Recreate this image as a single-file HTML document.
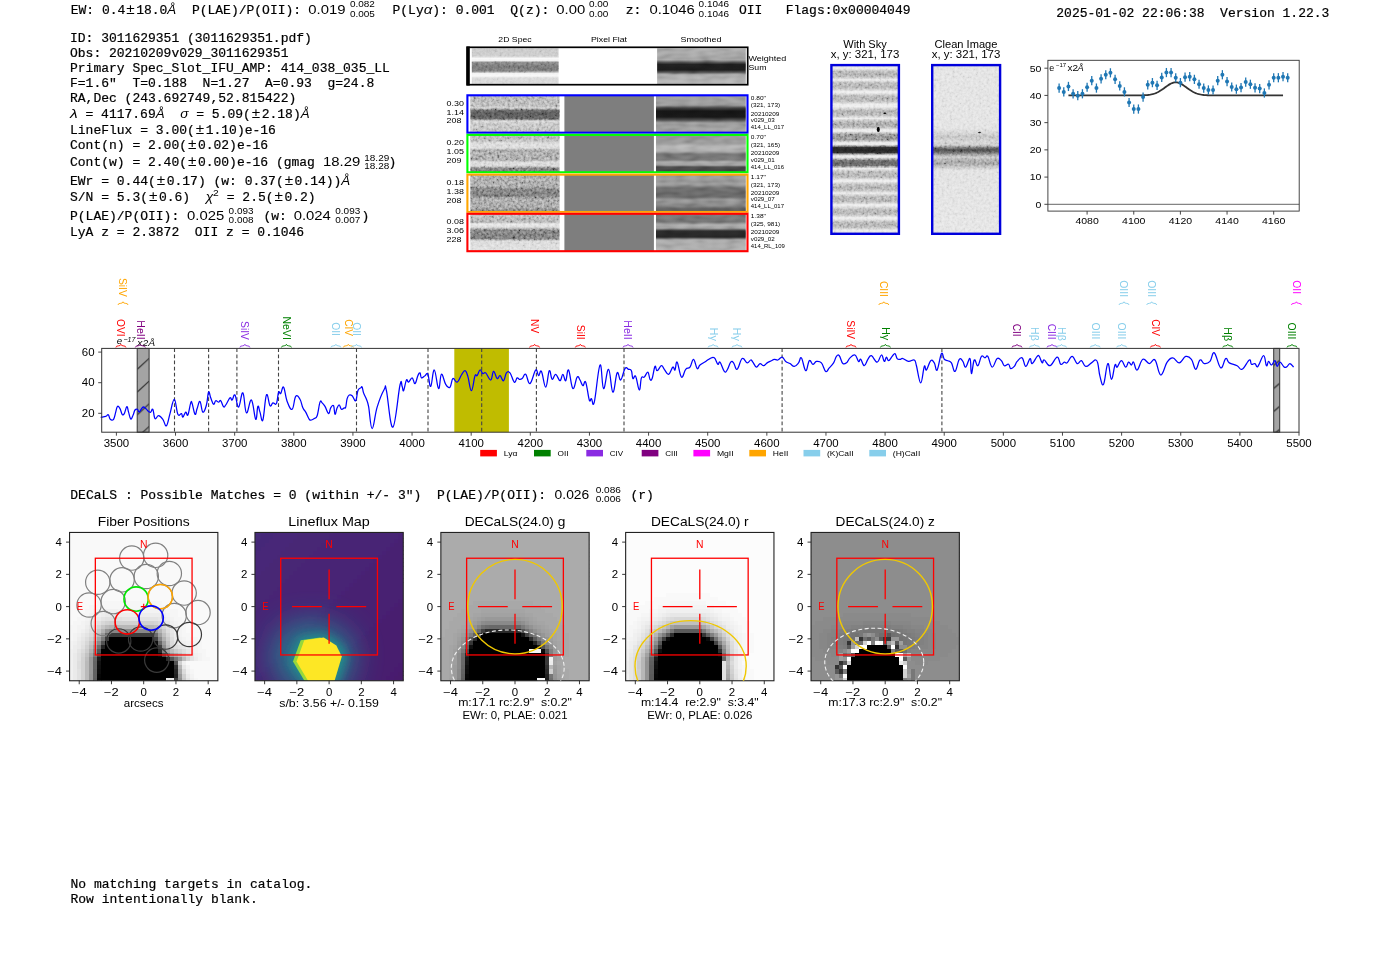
<!DOCTYPE html><html><head><meta charset="utf-8"><title>ELiXer report</title><style>html,body{margin:0;padding:0;background:#fff;overflow:hidden;width:1400px;height:953px}svg{display:block}</style></head><body><svg width="1400" height="953" viewBox="0 0 1400 953"><defs><filter id="nz1" x="0" y="0" width="100%" height="100%"><feTurbulence type="fractalNoise" baseFrequency="0.38" numOctaves="2" seed="4"/><feColorMatrix type="matrix" values="0 0 0 1.6 -0.3  0 0 0 1.6 -0.3  0 0 0 1.6 -0.3  0 0 0 0 1"/></filter>
<filter id="nz2" x="0" y="0" width="100%" height="100%"><feTurbulence type="fractalNoise" baseFrequency="0.08 0.25" numOctaves="1" seed="9"/><feColorMatrix type="matrix" values="0 0 0 1.4 -0.2  0 0 0 1.4 -0.2  0 0 0 1.4 -0.2  0 0 0 0 1"/></filter><linearGradient id="g1" x1="0" y1="0" x2="0" y2="1"><stop offset="0.000" stop-color="rgb(195,195,195)"/><stop offset="0.214" stop-color="rgb(200,200,200)"/><stop offset="0.284" stop-color="rgb(248,248,248)"/><stop offset="0.340" stop-color="rgb(240,240,240)"/><stop offset="0.396" stop-color="rgb(125,125,125)"/><stop offset="0.521" stop-color="rgb(108,108,108)"/><stop offset="0.632" stop-color="rgb(118,118,118)"/><stop offset="0.702" stop-color="rgb(240,240,240)"/><stop offset="0.772" stop-color="rgb(248,248,248)"/><stop offset="0.827" stop-color="rgb(215,215,215)"/><stop offset="0.994" stop-color="rgb(212,212,212)"/></linearGradient><linearGradient id="g2" x1="0" y1="0" x2="0" y2="1"><stop offset="0.000" stop-color="rgb(160,160,160)"/><stop offset="0.312" stop-color="rgb(150,150,150)"/><stop offset="0.396" stop-color="rgb(70,70,70)"/><stop offset="0.451" stop-color="rgb(28,28,28)"/><stop offset="0.604" stop-color="rgb(25,25,25)"/><stop offset="0.674" stop-color="rgb(80,80,80)"/><stop offset="0.738" stop-color="rgb(160,160,160)"/><stop offset="0.994" stop-color="rgb(168,168,168)"/></linearGradient><linearGradient id="g3" x1="0" y1="0" x2="0" y2="1"><stop offset="0.000" stop-color="rgb(165,165,165)"/><stop offset="0.284" stop-color="rgb(170,170,170)"/><stop offset="0.338" stop-color="rgb(200,200,200)"/><stop offset="0.392" stop-color="rgb(90,90,90)"/><stop offset="0.473" stop-color="rgb(75,75,75)"/><stop offset="0.635" stop-color="rgb(85,85,85)"/><stop offset="0.689" stop-color="rgb(205,205,205)"/><stop offset="0.770" stop-color="rgb(185,185,185)"/><stop offset="0.986" stop-color="rgb(175,175,175)"/></linearGradient><linearGradient id="g4" x1="0" y1="0" x2="0" y2="1"><stop offset="0.000" stop-color="rgb(150,150,150)"/><stop offset="0.257" stop-color="rgb(145,145,145)"/><stop offset="0.338" stop-color="rgb(60,60,60)"/><stop offset="0.419" stop-color="rgb(20,20,20)"/><stop offset="0.581" stop-color="rgb(22,22,22)"/><stop offset="0.662" stop-color="rgb(70,70,70)"/><stop offset="0.743" stop-color="rgb(145,145,145)"/><stop offset="0.986" stop-color="rgb(150,150,150)"/></linearGradient><linearGradient id="g5" x1="0" y1="0" x2="0" y2="1"><stop offset="0.000" stop-color="rgb(165,165,165)"/><stop offset="0.159" stop-color="rgb(175,175,175)"/><stop offset="0.214" stop-color="rgb(210,210,210)"/><stop offset="0.349" stop-color="rgb(210,210,210)"/><stop offset="0.403" stop-color="rgb(150,150,150)"/><stop offset="0.673" stop-color="rgb(150,150,150)"/><stop offset="0.727" stop-color="rgb(210,210,210)"/><stop offset="0.835" stop-color="rgb(205,205,205)"/><stop offset="0.889" stop-color="rgb(110,110,110)"/><stop offset="1.000" stop-color="rgb(100,100,100)"/></linearGradient><linearGradient id="g6" x1="0" y1="0" x2="0" y2="1"><stop offset="0.000" stop-color="rgb(140,140,140)"/><stop offset="0.214" stop-color="rgb(140,140,140)"/><stop offset="0.295" stop-color="rgb(175,175,175)"/><stop offset="0.430" stop-color="rgb(165,165,165)"/><stop offset="0.511" stop-color="rgb(105,105,105)"/><stop offset="0.673" stop-color="rgb(110,110,110)"/><stop offset="0.727" stop-color="rgb(160,160,160)"/><stop offset="0.808" stop-color="rgb(150,150,150)"/><stop offset="0.862" stop-color="rgb(70,70,70)"/><stop offset="1.000" stop-color="rgb(60,60,60)"/></linearGradient><linearGradient id="g7" x1="0" y1="0" x2="0" y2="1"><stop offset="0.000" stop-color="rgb(150,150,150)"/><stop offset="0.303" stop-color="rgb(150,150,150)"/><stop offset="0.384" stop-color="rgb(110,110,110)"/><stop offset="0.573" stop-color="rgb(105,105,105)"/><stop offset="0.654" stop-color="rgb(150,150,150)"/><stop offset="0.870" stop-color="rgb(145,145,145)"/><stop offset="0.951" stop-color="rgb(115,115,115)"/><stop offset="1.000" stop-color="rgb(105,105,105)"/></linearGradient><linearGradient id="g8" x1="0" y1="0" x2="0" y2="1"><stop offset="0.000" stop-color="rgb(140,140,140)"/><stop offset="0.249" stop-color="rgb(145,145,145)"/><stop offset="0.357" stop-color="rgb(100,100,100)"/><stop offset="0.600" stop-color="rgb(95,95,95)"/><stop offset="0.681" stop-color="rgb(140,140,140)"/><stop offset="0.843" stop-color="rgb(120,120,120)"/><stop offset="0.924" stop-color="rgb(85,85,85)"/><stop offset="1.000" stop-color="rgb(85,85,85)"/></linearGradient><linearGradient id="g9" x1="0" y1="0" x2="0" y2="1"><stop offset="0.000" stop-color="rgb(175,175,175)"/><stop offset="0.216" stop-color="rgb(160,160,160)"/><stop offset="0.270" stop-color="rgb(225,225,225)"/><stop offset="0.351" stop-color="rgb(215,215,215)"/><stop offset="0.432" stop-color="rgb(110,110,110)"/><stop offset="0.676" stop-color="rgb(105,105,105)"/><stop offset="0.730" stop-color="rgb(210,210,210)"/><stop offset="1.000" stop-color="rgb(215,215,215)"/></linearGradient><linearGradient id="g10" x1="0" y1="0" x2="0" y2="1"><stop offset="0.000" stop-color="rgb(110,110,110)"/><stop offset="0.216" stop-color="rgb(105,105,105)"/><stop offset="0.297" stop-color="rgb(165,165,165)"/><stop offset="0.378" stop-color="rgb(150,150,150)"/><stop offset="0.459" stop-color="rgb(40,40,40)"/><stop offset="0.622" stop-color="rgb(35,35,35)"/><stop offset="0.703" stop-color="rgb(160,160,160)"/><stop offset="1.000" stop-color="rgb(165,165,165)"/></linearGradient><linearGradient id="g11" x1="0" y1="0" x2="0" y2="1"><stop offset="0.000" stop-color="rgb(215,215,215)"/><stop offset="0.020" stop-color="rgb(232,232,232)"/><stop offset="0.039" stop-color="rgb(172,172,172)"/><stop offset="0.054" stop-color="rgb(160,160,160)"/><stop offset="0.070" stop-color="rgb(172,172,172)"/><stop offset="0.088" stop-color="rgb(232,232,232)"/><stop offset="0.089" stop-color="rgb(232,232,232)"/><stop offset="0.108" stop-color="rgb(172,172,172)"/><stop offset="0.123" stop-color="rgb(160,160,160)"/><stop offset="0.138" stop-color="rgb(172,172,172)"/><stop offset="0.156" stop-color="rgb(232,232,232)"/><stop offset="0.165" stop-color="rgb(232,232,232)"/><stop offset="0.184" stop-color="rgb(172,172,172)"/><stop offset="0.199" stop-color="rgb(160,160,160)"/><stop offset="0.215" stop-color="rgb(172,172,172)"/><stop offset="0.232" stop-color="rgb(232,232,232)"/><stop offset="0.248" stop-color="rgb(232,232,232)"/><stop offset="0.267" stop-color="rgb(172,172,172)"/><stop offset="0.283" stop-color="rgb(160,160,160)"/><stop offset="0.298" stop-color="rgb(172,172,172)"/><stop offset="0.316" stop-color="rgb(232,232,232)"/><stop offset="0.317" stop-color="rgb(232,232,232)"/><stop offset="0.336" stop-color="rgb(162,162,162)"/><stop offset="0.351" stop-color="rgb(150,150,150)"/><stop offset="0.367" stop-color="rgb(162,162,162)"/><stop offset="0.384" stop-color="rgb(232,232,232)"/><stop offset="0.393" stop-color="rgb(232,232,232)"/><stop offset="0.412" stop-color="rgb(132,132,132)"/><stop offset="0.427" stop-color="rgb(120,120,120)"/><stop offset="0.442" stop-color="rgb(132,132,132)"/><stop offset="0.460" stop-color="rgb(232,232,232)"/><stop offset="0.470" stop-color="rgb(232,232,232)"/><stop offset="0.488" stop-color="rgb(42,42,42)"/><stop offset="0.504" stop-color="rgb(30,30,30)"/><stop offset="0.519" stop-color="rgb(42,42,42)"/><stop offset="0.537" stop-color="rgb(232,232,232)"/><stop offset="0.546" stop-color="rgb(232,232,232)"/><stop offset="0.565" stop-color="rgb(97,97,97)"/><stop offset="0.580" stop-color="rgb(85,85,85)"/><stop offset="0.596" stop-color="rgb(97,97,97)"/><stop offset="0.613" stop-color="rgb(232,232,232)"/><stop offset="0.614" stop-color="rgb(232,232,232)"/><stop offset="0.633" stop-color="rgb(172,172,172)"/><stop offset="0.649" stop-color="rgb(160,160,160)"/><stop offset="0.664" stop-color="rgb(172,172,172)"/><stop offset="0.682" stop-color="rgb(232,232,232)"/><stop offset="0.690" stop-color="rgb(232,232,232)"/><stop offset="0.709" stop-color="rgb(172,172,172)"/><stop offset="0.724" stop-color="rgb(160,160,160)"/><stop offset="0.740" stop-color="rgb(172,172,172)"/><stop offset="0.758" stop-color="rgb(232,232,232)"/><stop offset="0.759" stop-color="rgb(232,232,232)"/><stop offset="0.778" stop-color="rgb(172,172,172)"/><stop offset="0.793" stop-color="rgb(160,160,160)"/><stop offset="0.808" stop-color="rgb(172,172,172)"/><stop offset="0.826" stop-color="rgb(232,232,232)"/><stop offset="0.834" stop-color="rgb(232,232,232)"/><stop offset="0.853" stop-color="rgb(172,172,172)"/><stop offset="0.869" stop-color="rgb(160,160,160)"/><stop offset="0.884" stop-color="rgb(172,172,172)"/><stop offset="0.902" stop-color="rgb(232,232,232)"/><stop offset="0.911" stop-color="rgb(232,232,232)"/><stop offset="0.930" stop-color="rgb(172,172,172)"/><stop offset="0.945" stop-color="rgb(160,160,160)"/><stop offset="0.960" stop-color="rgb(172,172,172)"/><stop offset="0.978" stop-color="rgb(232,232,232)"/><stop offset="1.000" stop-color="rgb(215,215,215)"/></linearGradient><linearGradient id="g12" x1="0" y1="0" x2="0" y2="1"><stop offset="0.000" stop-color="rgb(222,222,222)"/><stop offset="0.373" stop-color="rgb(222,222,222)"/><stop offset="0.403" stop-color="rgb(205,205,205)"/><stop offset="0.426" stop-color="rgb(180,180,180)"/><stop offset="0.450" stop-color="rgb(205,205,205)"/><stop offset="0.474" stop-color="rgb(195,195,195)"/><stop offset="0.488" stop-color="rgb(110,110,110)"/><stop offset="0.503" stop-color="rgb(65,65,65)"/><stop offset="0.521" stop-color="rgb(100,100,100)"/><stop offset="0.545" stop-color="rgb(195,195,195)"/><stop offset="0.562" stop-color="rgb(160,160,160)"/><stop offset="0.580" stop-color="rgb(145,145,145)"/><stop offset="0.598" stop-color="rgb(170,170,170)"/><stop offset="0.622" stop-color="rgb(220,220,220)"/><stop offset="1.000" stop-color="rgb(225,225,225)"/></linearGradient><pattern id="hatch" patternUnits="userSpaceOnUse" width="12" height="22.7" patternTransform="translate(137.2,348.4)"><rect width="12" height="22.7" fill="#a4a4a4"/><line x1="0" y1="21" x2="12" y2="10" stroke="#222" stroke-width="1.0"/></pattern><pattern id="hatch2" patternUnits="userSpaceOnUse" width="6" height="23" patternTransform="translate(1273.7,348.4)"><rect width="6" height="23" fill="#a4a4a4"/><line x1="0" y1="17" x2="6" y2="12" stroke="#222" stroke-width="1.1"/></pattern><clipPath id="topclip"><rect x="0" y="0" width="1400" height="347.9"/></clipPath><clipPath id="pc0"><rect x="69.55" y="532.45" width="148.30" height="148.30"/></clipPath><clipPath id="pc1"><rect x="254.95" y="532.45" width="148.30" height="148.30"/></clipPath><clipPath id="pc2"><rect x="440.85" y="532.45" width="148.30" height="148.30"/></clipPath><clipPath id="pc3"><rect x="625.65" y="532.45" width="148.30" height="148.30"/></clipPath><clipPath id="pc4"><rect x="811.05" y="532.45" width="148.30" height="148.30"/></clipPath><filter id="fglow" x="-100%" y="-100%" width="300%" height="300%"><feGaussianBlur stdDeviation="15"/></filter><filter id="fglow2" x="-100%" y="-100%" width="300%" height="300%"><feGaussianBlur stdDeviation="5"/></filter></defs><rect width="1400" height="953" fill="#fff"/><text x="70.70" y="14.00" font-size="13.0" font-family="'Liberation Mono', monospace" fill="#000" stroke="#000" stroke-width="0.2" xml:space="preserve">EW: 0.4</text>
<text x="126.27" y="14.00" font-size="15.34" font-family="'Liberation Sans', sans-serif" fill="#000" xml:space="preserve">±</text>
<text x="136.19" y="14.00" font-size="13.0" font-family="'Liberation Mono', monospace" fill="#000" stroke="#000" stroke-width="0.2" xml:space="preserve">18.0</text>
<text x="167.39" y="14.00" font-size="13.0" font-family="'Liberation Sans', sans-serif" fill="#000" textLength="8.89" lengthAdjust="spacingAndGlyphs" font-style="italic" xml:space="preserve">Å</text>
<text x="176.29" y="14.00" font-size="13.0" font-family="'Liberation Mono', monospace" fill="#000" stroke="#000" stroke-width="0.2" xml:space="preserve">  P(LAE)/P(OII): </text>
<text x="308.30" y="14.00" font-size="13" font-family="'Liberation Sans', sans-serif" fill="#000" textLength="37.22" lengthAdjust="spacingAndGlyphs" xml:space="preserve">0.019</text>
<text x="350.00" y="7.20" font-size="8.7" font-family="'Liberation Sans', sans-serif" fill="#000" textLength="24.91" lengthAdjust="spacingAndGlyphs" xml:space="preserve">0.082</text>
<text x="350.00" y="17.10" font-size="8.7" font-family="'Liberation Sans', sans-serif" fill="#000" textLength="24.91" lengthAdjust="spacingAndGlyphs" xml:space="preserve">0.005</text>
<text x="392.50" y="14.00" font-size="13.0" font-family="'Liberation Mono', monospace" fill="#000" stroke="#000" stroke-width="0.2" xml:space="preserve">P(Ly</text>
<text x="423.70" y="14.00" font-size="13.0" font-family="'Liberation Sans', sans-serif" fill="#000" textLength="8.57" lengthAdjust="spacingAndGlyphs" font-style="italic" xml:space="preserve">α</text>
<text x="432.27" y="14.00" font-size="13.0" font-family="'Liberation Mono', monospace" fill="#000" stroke="#000" stroke-width="0.2" xml:space="preserve">): 0.001  Q(z): </text>
<text x="556.30" y="14.00" font-size="13" font-family="'Liberation Sans', sans-serif" fill="#000" textLength="28.95" lengthAdjust="spacingAndGlyphs" xml:space="preserve">0.00</text>
<text x="589.00" y="7.20" font-size="8.7" font-family="'Liberation Sans', sans-serif" fill="#000" textLength="19.37" lengthAdjust="spacingAndGlyphs" xml:space="preserve">0.00</text>
<text x="589.00" y="17.10" font-size="8.7" font-family="'Liberation Sans', sans-serif" fill="#000" textLength="19.37" lengthAdjust="spacingAndGlyphs" xml:space="preserve">0.00</text>
<text x="625.70" y="14.00" font-size="13.0" font-family="'Liberation Mono', monospace" fill="#000" stroke="#000" stroke-width="0.2" xml:space="preserve">z: </text>
<text x="649.40" y="14.00" font-size="13" font-family="'Liberation Sans', sans-serif" fill="#000" textLength="45.49" lengthAdjust="spacingAndGlyphs" xml:space="preserve">0.1046</text>
<text x="698.60" y="7.20" font-size="8.7" font-family="'Liberation Sans', sans-serif" fill="#000" textLength="30.44" lengthAdjust="spacingAndGlyphs" xml:space="preserve">0.1046</text>
<text x="698.60" y="17.10" font-size="8.7" font-family="'Liberation Sans', sans-serif" fill="#000" textLength="30.44" lengthAdjust="spacingAndGlyphs" xml:space="preserve">0.1046</text>
<text x="739.00" y="14.00" font-size="13.0" font-family="'Liberation Mono', monospace" fill="#000" stroke="#000" stroke-width="0.2" xml:space="preserve">OII</text>
<text x="785.70" y="14.00" font-size="13.0" font-family="'Liberation Mono', monospace" fill="#000" stroke="#000" stroke-width="0.2" xml:space="preserve">Flags:0x00004049</text>
<text x="1056.30" y="16.60" font-size="13.0" font-family="'Liberation Mono', monospace" fill="#000" stroke="#000" stroke-width="0.2" xml:space="preserve">2025-01-02 22:06:38  Version 1.22.3</text>
<text x="70.00" y="42.40" font-size="13.0" font-family="'Liberation Mono', monospace" fill="#000" stroke="#000" stroke-width="0.2" xml:space="preserve">ID: 3011629351 (3011629351.pdf)</text>
<text x="70.00" y="56.70" font-size="13.0" font-family="'Liberation Mono', monospace" fill="#000" stroke="#000" stroke-width="0.2" xml:space="preserve">Obs: 20210209v029_3011629351</text>
<text x="70.00" y="72.10" font-size="13.0" font-family="'Liberation Mono', monospace" fill="#000" stroke="#000" stroke-width="0.2" xml:space="preserve">Primary Spec_Slot_IFU_AMP: 414_038_035_LL</text>
<text x="70.00" y="86.70" font-size="13.0" font-family="'Liberation Mono', monospace" fill="#000" stroke="#000" stroke-width="0.2" xml:space="preserve">F=1.6&quot;  T=0.188  N=1.27  A=0.93  g=24.8</text>
<text x="70.00" y="101.70" font-size="13.0" font-family="'Liberation Mono', monospace" fill="#000" stroke="#000" stroke-width="0.2" xml:space="preserve">RA,Dec (243.692749,52.815422)</text>
<text x="70.00" y="118.20" font-size="13.0" font-family="'Liberation Sans', sans-serif" fill="#000" textLength="7.69" lengthAdjust="spacingAndGlyphs" font-style="italic" xml:space="preserve">λ</text>
<text x="77.69" y="118.20" font-size="13.0" font-family="'Liberation Mono', monospace" fill="#000" stroke="#000" stroke-width="0.2" xml:space="preserve"> = 4117.69</text>
<text x="155.69" y="118.20" font-size="13.0" font-family="'Liberation Sans', sans-serif" fill="#000" textLength="8.89" lengthAdjust="spacingAndGlyphs" font-style="italic" xml:space="preserve">Å</text>
<text x="164.59" y="118.20" font-size="13.0" font-family="'Liberation Mono', monospace" fill="#000" stroke="#000" stroke-width="0.2" xml:space="preserve">  </text>
<text x="180.19" y="118.20" font-size="13.0" font-family="'Liberation Sans', sans-serif" fill="#000" textLength="8.24" lengthAdjust="spacingAndGlyphs" font-style="italic" xml:space="preserve">σ</text>
<text x="188.43" y="118.20" font-size="13.0" font-family="'Liberation Mono', monospace" fill="#000" stroke="#000" stroke-width="0.2" xml:space="preserve"> = 5.09(</text>
<text x="251.79" y="118.20" font-size="15.34" font-family="'Liberation Sans', sans-serif" fill="#000" xml:space="preserve">±</text>
<text x="261.72" y="118.20" font-size="13.0" font-family="'Liberation Mono', monospace" fill="#000" stroke="#000" stroke-width="0.2" xml:space="preserve">2.18)</text>
<text x="300.72" y="118.20" font-size="13.0" font-family="'Liberation Sans', sans-serif" fill="#000" textLength="8.89" lengthAdjust="spacingAndGlyphs" font-style="italic" xml:space="preserve">Å</text>
<text x="70.00" y="133.60" font-size="13.0" font-family="'Liberation Mono', monospace" fill="#000" stroke="#000" stroke-width="0.2" xml:space="preserve">LineFlux = 3.00(</text>
<text x="195.77" y="133.60" font-size="15.34" font-family="'Liberation Sans', sans-serif" fill="#000" xml:space="preserve">±</text>
<text x="205.69" y="133.60" font-size="13.0" font-family="'Liberation Mono', monospace" fill="#000" stroke="#000" stroke-width="0.2" xml:space="preserve">1.10)e-16</text>
<text x="70.00" y="148.60" font-size="13.0" font-family="'Liberation Mono', monospace" fill="#000" stroke="#000" stroke-width="0.2" xml:space="preserve">Cont(n) = 2.00(</text>
<text x="187.97" y="148.60" font-size="15.34" font-family="'Liberation Sans', sans-serif" fill="#000" xml:space="preserve">±</text>
<text x="197.89" y="148.60" font-size="13.0" font-family="'Liberation Mono', monospace" fill="#000" stroke="#000" stroke-width="0.2" xml:space="preserve">0.02)e-16</text>
<text x="70.00" y="166.40" font-size="13.0" font-family="'Liberation Mono', monospace" fill="#000" stroke="#000" stroke-width="0.2" xml:space="preserve">Cont(w) = 2.40(</text>
<text x="187.97" y="166.40" font-size="15.34" font-family="'Liberation Sans', sans-serif" fill="#000" xml:space="preserve">±</text>
<text x="197.89" y="166.40" font-size="13.0" font-family="'Liberation Mono', monospace" fill="#000" stroke="#000" stroke-width="0.2" xml:space="preserve">0.00)e-16 (gmag </text>
<text x="323.00" y="166.40" font-size="13" font-family="'Liberation Sans', sans-serif" fill="#000" textLength="37.22" lengthAdjust="spacingAndGlyphs" xml:space="preserve">18.29</text>
<text x="364.30" y="160.90" font-size="8.7" font-family="'Liberation Sans', sans-serif" fill="#000" textLength="24.91" lengthAdjust="spacingAndGlyphs" xml:space="preserve">18.29</text>
<text x="364.30" y="169.30" font-size="8.7" font-family="'Liberation Sans', sans-serif" fill="#000" textLength="24.91" lengthAdjust="spacingAndGlyphs" xml:space="preserve">18.28</text>
<text x="388.60" y="166.40" font-size="13.0" font-family="'Liberation Mono', monospace" fill="#000" stroke="#000" stroke-width="0.2" xml:space="preserve">)</text>
<text x="70.00" y="184.60" font-size="13.0" font-family="'Liberation Mono', monospace" fill="#000" stroke="#000" stroke-width="0.2" xml:space="preserve">EWr = 0.44(</text>
<text x="156.77" y="184.60" font-size="15.34" font-family="'Liberation Sans', sans-serif" fill="#000" xml:space="preserve">±</text>
<text x="166.69" y="184.60" font-size="13.0" font-family="'Liberation Mono', monospace" fill="#000" stroke="#000" stroke-width="0.2" xml:space="preserve">0.17) (w: 0.37(</text>
<text x="284.66" y="184.60" font-size="15.34" font-family="'Liberation Sans', sans-serif" fill="#000" xml:space="preserve">±</text>
<text x="294.59" y="184.60" font-size="13.0" font-family="'Liberation Mono', monospace" fill="#000" stroke="#000" stroke-width="0.2" xml:space="preserve">0.14))</text>
<text x="341.39" y="184.60" font-size="13.0" font-family="'Liberation Sans', sans-serif" fill="#000" textLength="8.89" lengthAdjust="spacingAndGlyphs" font-style="italic" xml:space="preserve">Å</text>
<text x="70.00" y="201.40" font-size="13.0" font-family="'Liberation Mono', monospace" fill="#000" stroke="#000" stroke-width="0.2" xml:space="preserve">S/N = 5.3(</text>
<text x="148.97" y="201.40" font-size="15.34" font-family="'Liberation Sans', sans-serif" fill="#000" xml:space="preserve">±</text>
<text x="158.89" y="201.40" font-size="13.0" font-family="'Liberation Mono', monospace" fill="#000" stroke="#000" stroke-width="0.2" xml:space="preserve">0.6)  </text>
<text x="205.69" y="201.40" font-size="13.0" font-family="'Liberation Sans', sans-serif" fill="#000" textLength="7.51" lengthAdjust="spacingAndGlyphs" font-style="italic" xml:space="preserve">χ</text>
<text x="212.90" y="195.80" font-size="9.0" font-family="'Liberation Sans', sans-serif" fill="#000" textLength="5.73" lengthAdjust="spacingAndGlyphs" xml:space="preserve">2</text>
<text x="218.93" y="201.40" font-size="13.0" font-family="'Liberation Mono', monospace" fill="#000" stroke="#000" stroke-width="0.2" xml:space="preserve"> = 2.5(</text>
<text x="274.50" y="201.40" font-size="15.34" font-family="'Liberation Sans', sans-serif" fill="#000" xml:space="preserve">±</text>
<text x="284.42" y="201.40" font-size="13.0" font-family="'Liberation Mono', monospace" fill="#000" stroke="#000" stroke-width="0.2" xml:space="preserve">0.2)</text>
<text x="70.00" y="220.00" font-size="13.0" font-family="'Liberation Mono', monospace" fill="#000" stroke="#000" stroke-width="0.2" xml:space="preserve">P(LAE)/P(OII): </text>
<text x="187.10" y="220.00" font-size="13" font-family="'Liberation Sans', sans-serif" fill="#000" textLength="37.22" lengthAdjust="spacingAndGlyphs" xml:space="preserve">0.025</text>
<text x="228.60" y="214.30" font-size="8.7" font-family="'Liberation Sans', sans-serif" fill="#000" textLength="24.91" lengthAdjust="spacingAndGlyphs" xml:space="preserve">0.093</text>
<text x="228.60" y="222.90" font-size="8.7" font-family="'Liberation Sans', sans-serif" fill="#000" textLength="24.91" lengthAdjust="spacingAndGlyphs" xml:space="preserve">0.008</text>
<text x="255.70" y="220.00" font-size="13.0" font-family="'Liberation Mono', monospace" fill="#000" stroke="#000" stroke-width="0.2" xml:space="preserve"> (w: </text>
<text x="293.70" y="220.00" font-size="13" font-family="'Liberation Sans', sans-serif" fill="#000" textLength="37.22" lengthAdjust="spacingAndGlyphs" xml:space="preserve">0.024</text>
<text x="335.30" y="214.30" font-size="8.7" font-family="'Liberation Sans', sans-serif" fill="#000" textLength="24.91" lengthAdjust="spacingAndGlyphs" xml:space="preserve">0.093</text>
<text x="335.30" y="222.90" font-size="8.7" font-family="'Liberation Sans', sans-serif" fill="#000" textLength="24.91" lengthAdjust="spacingAndGlyphs" xml:space="preserve">0.007</text>
<text x="361.60" y="220.00" font-size="13.0" font-family="'Liberation Mono', monospace" fill="#000" stroke="#000" stroke-width="0.2" xml:space="preserve">)</text>
<text x="70.00" y="236.40" font-size="13.0" font-family="'Liberation Mono', monospace" fill="#000" stroke="#000" stroke-width="0.2" xml:space="preserve">LyA z = 2.3872  OII z = 0.1046</text>
<text x="515.00" y="42.20" font-size="8" font-family="'Liberation Sans', sans-serif" fill="#000" text-anchor="middle" textLength="33.27" lengthAdjust="spacingAndGlyphs" xml:space="preserve">2D Spec</text>
<text x="609.00" y="42.20" font-size="8" font-family="'Liberation Sans', sans-serif" fill="#000" text-anchor="middle" textLength="35.91" lengthAdjust="spacingAndGlyphs" xml:space="preserve">Pixel Flat</text>
<text x="701.00" y="42.20" font-size="8" font-family="'Liberation Sans', sans-serif" fill="#000" text-anchor="middle" textLength="40.87" lengthAdjust="spacingAndGlyphs" xml:space="preserve">Smoothed</text>
<rect x="466.4" y="46.5" width="282.1" height="39" fill="#fff"/>
<rect x="471.80" y="48.30" width="86.80" height="35.90" fill="url(#g1)"/>
<rect x="471.80" y="48.30" width="86.80" height="35.90" fill="#808080" filter="url(#nz1)" opacity="0.3" style="mix-blend-mode:overlay"/>
<rect x="657.10" y="48.30" width="88.70" height="35.90" fill="url(#g2)"/>
<rect x="657.10" y="48.30" width="88.70" height="35.90" fill="#808080" filter="url(#nz2)" opacity="0.3" style="mix-blend-mode:overlay"/>
<rect x="467.2" y="47.3" width="280.5" height="37.4" fill="none" stroke="#000" stroke-width="1.7"/>
<rect x="466.4" y="46.5" width="3.4" height="39" fill="#000"/>
<text x="748.50" y="60.80" font-size="8" font-family="'Liberation Sans', sans-serif" fill="#000" textLength="37.87" lengthAdjust="spacingAndGlyphs" xml:space="preserve">Weighted</text>
<text x="748.50" y="69.80" font-size="8" font-family="'Liberation Sans', sans-serif" fill="#000" textLength="17.94" lengthAdjust="spacingAndGlyphs" xml:space="preserve">Sum</text>
<rect x="466.4" y="94.30" width="282.1" height="39.40" fill="#fff"/>
<rect x="470.30" y="95.50" width="89.30" height="37.00" fill="url(#g3)"/>
<rect x="470.30" y="95.50" width="89.30" height="37.00" fill="#808080" filter="url(#nz1)" opacity="0.55" style="mix-blend-mode:overlay"/>
<rect x="564.4" y="95.50" width="89.5" height="37.00" fill="rgb(126,126,126)"/>
<rect x="656.00" y="95.50" width="89.80" height="37.00" fill="url(#g4)"/>
<rect x="656.00" y="95.50" width="89.80" height="37.00" fill="#808080" filter="url(#nz2)" opacity="0.25" style="mix-blend-mode:overlay"/>
<rect x="467.40" y="95.30" width="280.1" height="37.40" fill="none" stroke="rgb(0,0,255)" stroke-width="2.1"/>
<text x="446.60" y="105.80" font-size="7.8" font-family="'Liberation Sans', sans-serif" fill="#000" textLength="17.37" lengthAdjust="spacingAndGlyphs" xml:space="preserve">0.30</text>
<text x="446.60" y="114.50" font-size="7.8" font-family="'Liberation Sans', sans-serif" fill="#000" textLength="17.37" lengthAdjust="spacingAndGlyphs" xml:space="preserve">1.14</text>
<text x="446.60" y="123.20" font-size="7.8" font-family="'Liberation Sans', sans-serif" fill="#000" textLength="14.89" lengthAdjust="spacingAndGlyphs" xml:space="preserve">208</text>
<text x="750.80" y="99.60" font-size="5.6" font-family="'Liberation Sans', sans-serif" fill="#000" textLength="15.05" lengthAdjust="spacingAndGlyphs" xml:space="preserve">0.80&quot;</text>
<text x="750.80" y="107.20" font-size="5.6" font-family="'Liberation Sans', sans-serif" fill="#000" textLength="29.31" lengthAdjust="spacingAndGlyphs" xml:space="preserve">(321, 173)</text>
<text x="750.80" y="115.50" font-size="5.6" font-family="'Liberation Sans', sans-serif" fill="#000" textLength="28.50" lengthAdjust="spacingAndGlyphs" xml:space="preserve">20210209</text>
<text x="750.80" y="122.00" font-size="5.6" font-family="'Liberation Sans', sans-serif" fill="#000" textLength="23.93" lengthAdjust="spacingAndGlyphs" xml:space="preserve">v029_03</text>
<text x="750.80" y="129.10" font-size="5.6" font-family="'Liberation Sans', sans-serif" fill="#000" textLength="33.22" lengthAdjust="spacingAndGlyphs" xml:space="preserve">414_LL_017</text>
<rect x="466.4" y="133.90" width="282.1" height="39.40" fill="#fff"/>
<rect x="470.30" y="135.10" width="89.30" height="37.00" fill="url(#g5)"/>
<rect x="470.30" y="135.10" width="89.30" height="37.00" fill="#808080" filter="url(#nz1)" opacity="0.55" style="mix-blend-mode:overlay"/>
<rect x="564.4" y="135.10" width="89.5" height="37.00" fill="rgb(126,126,126)"/>
<rect x="656.00" y="135.10" width="89.80" height="37.00" fill="url(#g6)"/>
<rect x="656.00" y="135.10" width="89.80" height="37.00" fill="#808080" filter="url(#nz2)" opacity="0.25" style="mix-blend-mode:overlay"/>
<rect x="467.40" y="134.90" width="280.1" height="37.40" fill="none" stroke="rgb(0,255,0)" stroke-width="2.1"/>
<text x="446.60" y="145.40" font-size="7.8" font-family="'Liberation Sans', sans-serif" fill="#000" textLength="17.37" lengthAdjust="spacingAndGlyphs" xml:space="preserve">0.20</text>
<text x="446.60" y="154.10" font-size="7.8" font-family="'Liberation Sans', sans-serif" fill="#000" textLength="17.37" lengthAdjust="spacingAndGlyphs" xml:space="preserve">1.05</text>
<text x="446.60" y="162.80" font-size="7.8" font-family="'Liberation Sans', sans-serif" fill="#000" textLength="14.89" lengthAdjust="spacingAndGlyphs" xml:space="preserve">209</text>
<text x="750.80" y="139.20" font-size="5.6" font-family="'Liberation Sans', sans-serif" fill="#000" textLength="15.05" lengthAdjust="spacingAndGlyphs" xml:space="preserve">0.70&quot;</text>
<text x="750.80" y="146.80" font-size="5.6" font-family="'Liberation Sans', sans-serif" fill="#000" textLength="29.31" lengthAdjust="spacingAndGlyphs" xml:space="preserve">(321, 165)</text>
<text x="750.80" y="155.10" font-size="5.6" font-family="'Liberation Sans', sans-serif" fill="#000" textLength="28.50" lengthAdjust="spacingAndGlyphs" xml:space="preserve">20210209</text>
<text x="750.80" y="161.60" font-size="5.6" font-family="'Liberation Sans', sans-serif" fill="#000" textLength="23.93" lengthAdjust="spacingAndGlyphs" xml:space="preserve">v029_01</text>
<text x="750.80" y="168.70" font-size="5.6" font-family="'Liberation Sans', sans-serif" fill="#000" textLength="33.22" lengthAdjust="spacingAndGlyphs" xml:space="preserve">414_LL_016</text>
<rect x="466.4" y="173.60" width="282.1" height="39.40" fill="#fff"/>
<rect x="470.30" y="174.80" width="89.30" height="37.00" fill="url(#g7)"/>
<rect x="470.30" y="174.80" width="89.30" height="37.00" fill="#808080" filter="url(#nz1)" opacity="0.55" style="mix-blend-mode:overlay"/>
<rect x="564.4" y="174.80" width="89.5" height="37.00" fill="rgb(126,126,126)"/>
<rect x="656.00" y="174.80" width="89.80" height="37.00" fill="url(#g8)"/>
<rect x="656.00" y="174.80" width="89.80" height="37.00" fill="#808080" filter="url(#nz2)" opacity="0.25" style="mix-blend-mode:overlay"/>
<rect x="467.40" y="174.60" width="280.1" height="37.40" fill="none" stroke="rgb(255,165,0)" stroke-width="2.1"/>
<text x="446.60" y="185.10" font-size="7.8" font-family="'Liberation Sans', sans-serif" fill="#000" textLength="17.37" lengthAdjust="spacingAndGlyphs" xml:space="preserve">0.18</text>
<text x="446.60" y="193.80" font-size="7.8" font-family="'Liberation Sans', sans-serif" fill="#000" textLength="17.37" lengthAdjust="spacingAndGlyphs" xml:space="preserve">1.38</text>
<text x="446.60" y="202.50" font-size="7.8" font-family="'Liberation Sans', sans-serif" fill="#000" textLength="14.89" lengthAdjust="spacingAndGlyphs" xml:space="preserve">208</text>
<text x="750.80" y="178.90" font-size="5.6" font-family="'Liberation Sans', sans-serif" fill="#000" textLength="15.05" lengthAdjust="spacingAndGlyphs" xml:space="preserve">1.17&quot;</text>
<text x="750.80" y="186.50" font-size="5.6" font-family="'Liberation Sans', sans-serif" fill="#000" textLength="29.31" lengthAdjust="spacingAndGlyphs" xml:space="preserve">(321, 173)</text>
<text x="750.80" y="194.80" font-size="5.6" font-family="'Liberation Sans', sans-serif" fill="#000" textLength="28.50" lengthAdjust="spacingAndGlyphs" xml:space="preserve">20210209</text>
<text x="750.80" y="201.30" font-size="5.6" font-family="'Liberation Sans', sans-serif" fill="#000" textLength="23.93" lengthAdjust="spacingAndGlyphs" xml:space="preserve">v029_07</text>
<text x="750.80" y="208.40" font-size="5.6" font-family="'Liberation Sans', sans-serif" fill="#000" textLength="33.22" lengthAdjust="spacingAndGlyphs" xml:space="preserve">414_LL_017</text>
<rect x="466.4" y="212.80" width="282.1" height="39.40" fill="#fff"/>
<rect x="470.30" y="214.00" width="89.30" height="37.00" fill="url(#g9)"/>
<rect x="470.30" y="214.00" width="89.30" height="37.00" fill="#808080" filter="url(#nz1)" opacity="0.55" style="mix-blend-mode:overlay"/>
<rect x="564.4" y="214.00" width="89.5" height="37.00" fill="rgb(126,126,126)"/>
<rect x="656.00" y="214.00" width="89.80" height="37.00" fill="url(#g10)"/>
<rect x="656.00" y="214.00" width="89.80" height="37.00" fill="#808080" filter="url(#nz2)" opacity="0.25" style="mix-blend-mode:overlay"/>
<rect x="467.40" y="213.80" width="280.1" height="37.40" fill="none" stroke="rgb(255,0,0)" stroke-width="2.1"/>
<text x="446.60" y="224.30" font-size="7.8" font-family="'Liberation Sans', sans-serif" fill="#000" textLength="17.37" lengthAdjust="spacingAndGlyphs" xml:space="preserve">0.08</text>
<text x="446.60" y="233.00" font-size="7.8" font-family="'Liberation Sans', sans-serif" fill="#000" textLength="17.37" lengthAdjust="spacingAndGlyphs" xml:space="preserve">3.06</text>
<text x="446.60" y="241.70" font-size="7.8" font-family="'Liberation Sans', sans-serif" fill="#000" textLength="14.89" lengthAdjust="spacingAndGlyphs" xml:space="preserve">228</text>
<text x="750.80" y="218.10" font-size="5.6" font-family="'Liberation Sans', sans-serif" fill="#000" textLength="15.05" lengthAdjust="spacingAndGlyphs" xml:space="preserve">1.38&quot;</text>
<text x="750.80" y="225.70" font-size="5.6" font-family="'Liberation Sans', sans-serif" fill="#000" textLength="29.31" lengthAdjust="spacingAndGlyphs" xml:space="preserve">(325, 981)</text>
<text x="750.80" y="234.00" font-size="5.6" font-family="'Liberation Sans', sans-serif" fill="#000" textLength="28.50" lengthAdjust="spacingAndGlyphs" xml:space="preserve">20210209</text>
<text x="750.80" y="240.50" font-size="5.6" font-family="'Liberation Sans', sans-serif" fill="#000" textLength="23.93" lengthAdjust="spacingAndGlyphs" xml:space="preserve">v029_02</text>
<text x="750.80" y="247.60" font-size="5.6" font-family="'Liberation Sans', sans-serif" fill="#000" textLength="33.99" lengthAdjust="spacingAndGlyphs" xml:space="preserve">414_RL_109</text>
<text x="865.00" y="47.60" font-size="10" font-family="'Liberation Sans', sans-serif" fill="#000" text-anchor="middle" textLength="43.59" lengthAdjust="spacingAndGlyphs" xml:space="preserve">With Sky</text>
<text x="865.00" y="58.20" font-size="10" font-family="'Liberation Sans', sans-serif" fill="#000" text-anchor="middle" textLength="68.55" lengthAdjust="spacingAndGlyphs" xml:space="preserve">x, y: 321, 173</text>
<text x="966.00" y="47.60" font-size="10" font-family="'Liberation Sans', sans-serif" fill="#000" text-anchor="middle" textLength="62.88" lengthAdjust="spacingAndGlyphs" xml:space="preserve">Clean Image</text>
<text x="966.00" y="58.20" font-size="10" font-family="'Liberation Sans', sans-serif" fill="#000" text-anchor="middle" textLength="68.55" lengthAdjust="spacingAndGlyphs" xml:space="preserve">x, y: 321, 173</text>
<rect x="831.20" y="64.90" width="67.90" height="169.10" fill="url(#g11)"/>
<rect x="831.20" y="64.90" width="67.90" height="169.10" fill="#808080" filter="url(#nz1)" opacity="0.5" style="mix-blend-mode:overlay"/>
<rect x="932.00" y="64.90" width="68.30" height="169.10" fill="url(#g12)"/>
<rect x="932.00" y="64.90" width="68.30" height="169.10" fill="#808080" filter="url(#nz1)" opacity="0.45" style="mix-blend-mode:overlay"/>
<ellipse cx="884.8" cy="113.3" rx="1.5" ry="0.8" fill="#000"/>
<ellipse cx="878.3" cy="129.4" rx="1.5" ry="2.6" fill="#000"/>
<ellipse cx="979.5" cy="132.5" rx="1.4" ry="0.8" fill="#222"/>
<rect x="831.4" y="65.1" width="67.5" height="168.7" fill="none" stroke="rgb(0,0,220)" stroke-width="2.4"/>
<rect x="932.2" y="65.1" width="67.9" height="168.7" fill="none" stroke="rgb(0,0,220)" stroke-width="2.4"/>
<rect x="1047.9" y="60.3" width="251.30" height="150.80" fill="#fff"/>
<line x1="1047.9" y1="204.30" x2="1299.2" y2="204.30" stroke="#666" stroke-width="1"/>
<polyline points="1068.44,95.42 1069.61,95.42 1070.77,95.42 1071.94,95.42 1073.11,95.42 1074.27,95.42 1075.44,95.42 1076.60,95.42 1077.77,95.42 1078.94,95.42 1080.10,95.42 1081.27,95.42 1082.43,95.42 1083.60,95.42 1084.77,95.42 1085.93,95.42 1087.10,95.42 1088.27,95.42 1089.43,95.42 1090.60,95.42 1091.76,95.42 1092.93,95.42 1094.10,95.42 1095.26,95.42 1096.43,95.42 1097.60,95.42 1098.76,95.42 1099.93,95.42 1101.09,95.42 1102.26,95.42 1103.43,95.42 1104.59,95.42 1105.76,95.42 1106.93,95.42 1108.09,95.42 1109.26,95.42 1110.42,95.42 1111.59,95.42 1112.76,95.42 1113.92,95.42 1115.09,95.42 1116.26,95.42 1117.42,95.42 1118.59,95.42 1119.75,95.42 1120.92,95.42 1122.09,95.42 1123.25,95.42 1124.42,95.42 1125.59,95.42 1126.75,95.42 1127.92,95.42 1129.08,95.42 1130.25,95.42 1131.42,95.42 1132.58,95.42 1133.75,95.41 1134.92,95.41 1136.08,95.41 1137.25,95.40 1138.41,95.39 1139.58,95.38 1140.75,95.36 1141.91,95.33 1143.08,95.29 1144.25,95.24 1145.41,95.18 1146.58,95.09 1147.74,94.99 1148.91,94.85 1150.08,94.67 1151.24,94.45 1152.41,94.19 1153.58,93.87 1154.74,93.49 1155.91,93.05 1157.07,92.54 1158.24,91.96 1159.41,91.32 1160.57,90.61 1161.74,89.84 1162.91,89.03 1164.07,88.18 1165.24,87.32 1166.40,86.47 1167.57,85.64 1168.74,84.86 1169.90,84.15 1171.07,83.53 1172.24,83.03 1173.40,82.66 1174.57,82.43 1175.73,82.35 1176.90,82.43 1178.07,82.66 1179.23,83.03 1180.40,83.53 1181.57,84.15 1182.73,84.86 1183.90,85.64 1185.06,86.47 1186.23,87.32 1187.40,88.18 1188.56,89.03 1189.73,89.84 1190.90,90.61 1192.06,91.32 1193.23,91.96 1194.39,92.54 1195.56,93.05 1196.73,93.49 1197.89,93.87 1199.06,94.19 1200.23,94.45 1201.39,94.67 1202.56,94.85 1203.72,94.99 1204.89,95.09 1206.06,95.18 1207.22,95.24 1208.39,95.29 1209.56,95.33 1210.72,95.36 1211.89,95.38 1213.05,95.39 1214.22,95.40 1215.39,95.41 1216.55,95.41 1217.72,95.41 1218.89,95.42 1220.05,95.42 1221.22,95.42 1222.38,95.42 1223.55,95.42 1224.72,95.42 1225.88,95.42 1227.05,95.42 1228.22,95.42 1229.38,95.42 1230.55,95.42 1231.71,95.42 1232.88,95.42 1234.05,95.42 1235.21,95.42 1236.38,95.42 1237.55,95.42 1238.71,95.42 1239.88,95.42 1241.04,95.42 1242.21,95.42 1243.38,95.42 1244.54,95.42 1245.71,95.42 1246.88,95.42 1248.04,95.42 1249.21,95.42 1250.38,95.42 1251.54,95.42 1252.71,95.42 1253.87,95.42 1255.04,95.42 1256.21,95.42 1257.37,95.42 1258.54,95.42 1259.70,95.42 1260.87,95.42 1262.04,95.42 1263.20,95.42 1264.37,95.42 1265.54,95.42 1266.70,95.42 1267.87,95.42 1269.03,95.42 1270.20,95.42 1271.37,95.42 1272.53,95.42 1273.70,95.42 1274.87,95.42 1276.03,95.42 1277.20,95.42 1278.37,95.42 1279.53,95.42 1280.70,95.42 1281.86,95.42 1283.03,95.42" fill="none" stroke="#333" stroke-width="1.8"/>
<line x1="1059.11" y1="83.47" x2="1059.11" y2="92.67" stroke="#1f77b4" stroke-width="1.3"/>
<circle cx="1059.11" cy="88.07" r="2.0" fill="#1f77b4"/>
<line x1="1063.77" y1="87.28" x2="1063.77" y2="96.48" stroke="#1f77b4" stroke-width="1.3"/>
<circle cx="1063.77" cy="91.88" r="2.0" fill="#1f77b4"/>
<line x1="1068.44" y1="81.84" x2="1068.44" y2="91.04" stroke="#1f77b4" stroke-width="1.3"/>
<circle cx="1068.44" cy="86.44" r="2.0" fill="#1f77b4"/>
<line x1="1073.11" y1="89.19" x2="1073.11" y2="98.39" stroke="#1f77b4" stroke-width="1.3"/>
<circle cx="1073.11" cy="93.79" r="2.0" fill="#1f77b4"/>
<line x1="1077.77" y1="91.09" x2="1077.77" y2="100.29" stroke="#1f77b4" stroke-width="1.3"/>
<circle cx="1077.77" cy="95.69" r="2.0" fill="#1f77b4"/>
<line x1="1082.43" y1="89.19" x2="1082.43" y2="98.39" stroke="#1f77b4" stroke-width="1.3"/>
<circle cx="1082.43" cy="93.79" r="2.0" fill="#1f77b4"/>
<line x1="1087.10" y1="82.65" x2="1087.10" y2="91.85" stroke="#1f77b4" stroke-width="1.3"/>
<circle cx="1087.10" cy="87.25" r="2.0" fill="#1f77b4"/>
<line x1="1091.76" y1="76.12" x2="1091.76" y2="85.32" stroke="#1f77b4" stroke-width="1.3"/>
<circle cx="1091.76" cy="80.72" r="2.0" fill="#1f77b4"/>
<line x1="1096.43" y1="83.47" x2="1096.43" y2="92.67" stroke="#1f77b4" stroke-width="1.3"/>
<circle cx="1096.43" cy="88.07" r="2.0" fill="#1f77b4"/>
<line x1="1101.09" y1="74.22" x2="1101.09" y2="83.42" stroke="#1f77b4" stroke-width="1.3"/>
<circle cx="1101.09" cy="78.82" r="2.0" fill="#1f77b4"/>
<line x1="1105.76" y1="70.13" x2="1105.76" y2="79.33" stroke="#1f77b4" stroke-width="1.3"/>
<circle cx="1105.76" cy="74.73" r="2.0" fill="#1f77b4"/>
<line x1="1110.42" y1="68.23" x2="1110.42" y2="77.43" stroke="#1f77b4" stroke-width="1.3"/>
<circle cx="1110.42" cy="72.83" r="2.0" fill="#1f77b4"/>
<line x1="1115.09" y1="74.76" x2="1115.09" y2="83.96" stroke="#1f77b4" stroke-width="1.3"/>
<circle cx="1115.09" cy="79.36" r="2.0" fill="#1f77b4"/>
<line x1="1119.75" y1="81.29" x2="1119.75" y2="90.49" stroke="#1f77b4" stroke-width="1.3"/>
<circle cx="1119.75" cy="85.89" r="2.0" fill="#1f77b4"/>
<line x1="1124.42" y1="87.28" x2="1124.42" y2="96.48" stroke="#1f77b4" stroke-width="1.3"/>
<circle cx="1124.42" cy="91.88" r="2.0" fill="#1f77b4"/>
<line x1="1129.08" y1="97.90" x2="1129.08" y2="107.10" stroke="#1f77b4" stroke-width="1.3"/>
<circle cx="1129.08" cy="102.50" r="2.0" fill="#1f77b4"/>
<line x1="1133.75" y1="104.43" x2="1133.75" y2="113.63" stroke="#1f77b4" stroke-width="1.3"/>
<circle cx="1133.75" cy="109.03" r="2.0" fill="#1f77b4"/>
<line x1="1138.41" y1="104.43" x2="1138.41" y2="113.63" stroke="#1f77b4" stroke-width="1.3"/>
<circle cx="1138.41" cy="109.03" r="2.0" fill="#1f77b4"/>
<line x1="1143.08" y1="92.45" x2="1143.08" y2="101.65" stroke="#1f77b4" stroke-width="1.3"/>
<circle cx="1143.08" cy="97.05" r="2.0" fill="#1f77b4"/>
<line x1="1147.74" y1="80.20" x2="1147.74" y2="89.40" stroke="#1f77b4" stroke-width="1.3"/>
<circle cx="1147.74" cy="84.80" r="2.0" fill="#1f77b4"/>
<line x1="1152.41" y1="78.03" x2="1152.41" y2="87.23" stroke="#1f77b4" stroke-width="1.3"/>
<circle cx="1152.41" cy="82.63" r="2.0" fill="#1f77b4"/>
<line x1="1157.07" y1="80.75" x2="1157.07" y2="89.95" stroke="#1f77b4" stroke-width="1.3"/>
<circle cx="1157.07" cy="85.35" r="2.0" fill="#1f77b4"/>
<line x1="1161.74" y1="72.85" x2="1161.74" y2="82.05" stroke="#1f77b4" stroke-width="1.3"/>
<circle cx="1161.74" cy="77.45" r="2.0" fill="#1f77b4"/>
<line x1="1166.40" y1="67.96" x2="1166.40" y2="77.16" stroke="#1f77b4" stroke-width="1.3"/>
<circle cx="1166.40" cy="72.56" r="2.0" fill="#1f77b4"/>
<line x1="1171.07" y1="67.96" x2="1171.07" y2="77.16" stroke="#1f77b4" stroke-width="1.3"/>
<circle cx="1171.07" cy="72.56" r="2.0" fill="#1f77b4"/>
<line x1="1175.73" y1="73.13" x2="1175.73" y2="82.33" stroke="#1f77b4" stroke-width="1.3"/>
<circle cx="1175.73" cy="77.73" r="2.0" fill="#1f77b4"/>
<line x1="1180.40" y1="78.03" x2="1180.40" y2="87.23" stroke="#1f77b4" stroke-width="1.3"/>
<circle cx="1180.40" cy="82.63" r="2.0" fill="#1f77b4"/>
<line x1="1185.06" y1="72.58" x2="1185.06" y2="81.78" stroke="#1f77b4" stroke-width="1.3"/>
<circle cx="1185.06" cy="77.18" r="2.0" fill="#1f77b4"/>
<line x1="1189.73" y1="72.04" x2="1189.73" y2="81.24" stroke="#1f77b4" stroke-width="1.3"/>
<circle cx="1189.73" cy="76.64" r="2.0" fill="#1f77b4"/>
<line x1="1194.39" y1="74.76" x2="1194.39" y2="83.96" stroke="#1f77b4" stroke-width="1.3"/>
<circle cx="1194.39" cy="79.36" r="2.0" fill="#1f77b4"/>
<line x1="1199.06" y1="79.66" x2="1199.06" y2="88.86" stroke="#1f77b4" stroke-width="1.3"/>
<circle cx="1199.06" cy="84.26" r="2.0" fill="#1f77b4"/>
<line x1="1203.72" y1="83.47" x2="1203.72" y2="92.67" stroke="#1f77b4" stroke-width="1.3"/>
<circle cx="1203.72" cy="88.07" r="2.0" fill="#1f77b4"/>
<line x1="1208.39" y1="85.38" x2="1208.39" y2="94.58" stroke="#1f77b4" stroke-width="1.3"/>
<circle cx="1208.39" cy="89.98" r="2.0" fill="#1f77b4"/>
<line x1="1213.05" y1="85.38" x2="1213.05" y2="94.58" stroke="#1f77b4" stroke-width="1.3"/>
<circle cx="1213.05" cy="89.98" r="2.0" fill="#1f77b4"/>
<line x1="1217.72" y1="76.12" x2="1217.72" y2="85.32" stroke="#1f77b4" stroke-width="1.3"/>
<circle cx="1217.72" cy="80.72" r="2.0" fill="#1f77b4"/>
<line x1="1222.38" y1="70.13" x2="1222.38" y2="79.33" stroke="#1f77b4" stroke-width="1.3"/>
<circle cx="1222.38" cy="74.73" r="2.0" fill="#1f77b4"/>
<line x1="1227.05" y1="76.94" x2="1227.05" y2="86.14" stroke="#1f77b4" stroke-width="1.3"/>
<circle cx="1227.05" cy="81.54" r="2.0" fill="#1f77b4"/>
<line x1="1231.71" y1="82.38" x2="1231.71" y2="91.58" stroke="#1f77b4" stroke-width="1.3"/>
<circle cx="1231.71" cy="86.98" r="2.0" fill="#1f77b4"/>
<line x1="1236.38" y1="84.56" x2="1236.38" y2="93.76" stroke="#1f77b4" stroke-width="1.3"/>
<circle cx="1236.38" cy="89.16" r="2.0" fill="#1f77b4"/>
<line x1="1241.04" y1="82.93" x2="1241.04" y2="92.13" stroke="#1f77b4" stroke-width="1.3"/>
<circle cx="1241.04" cy="87.53" r="2.0" fill="#1f77b4"/>
<line x1="1245.71" y1="77.48" x2="1245.71" y2="86.68" stroke="#1f77b4" stroke-width="1.3"/>
<circle cx="1245.71" cy="82.08" r="2.0" fill="#1f77b4"/>
<line x1="1250.38" y1="79.66" x2="1250.38" y2="88.86" stroke="#1f77b4" stroke-width="1.3"/>
<circle cx="1250.38" cy="84.26" r="2.0" fill="#1f77b4"/>
<line x1="1255.04" y1="83.20" x2="1255.04" y2="92.40" stroke="#1f77b4" stroke-width="1.3"/>
<circle cx="1255.04" cy="87.80" r="2.0" fill="#1f77b4"/>
<line x1="1259.70" y1="84.02" x2="1259.70" y2="93.22" stroke="#1f77b4" stroke-width="1.3"/>
<circle cx="1259.70" cy="88.62" r="2.0" fill="#1f77b4"/>
<line x1="1264.37" y1="88.37" x2="1264.37" y2="97.57" stroke="#1f77b4" stroke-width="1.3"/>
<circle cx="1264.37" cy="92.97" r="2.0" fill="#1f77b4"/>
<line x1="1269.03" y1="80.20" x2="1269.03" y2="89.40" stroke="#1f77b4" stroke-width="1.3"/>
<circle cx="1269.03" cy="84.80" r="2.0" fill="#1f77b4"/>
<line x1="1273.70" y1="73.13" x2="1273.70" y2="82.33" stroke="#1f77b4" stroke-width="1.3"/>
<circle cx="1273.70" cy="77.73" r="2.0" fill="#1f77b4"/>
<line x1="1278.37" y1="73.13" x2="1278.37" y2="82.33" stroke="#1f77b4" stroke-width="1.3"/>
<circle cx="1278.37" cy="77.73" r="2.0" fill="#1f77b4"/>
<line x1="1283.03" y1="72.04" x2="1283.03" y2="81.24" stroke="#1f77b4" stroke-width="1.3"/>
<circle cx="1283.03" cy="76.64" r="2.0" fill="#1f77b4"/>
<line x1="1287.69" y1="73.13" x2="1287.69" y2="82.33" stroke="#1f77b4" stroke-width="1.3"/>
<circle cx="1287.69" cy="77.73" r="2.0" fill="#1f77b4"/>
<rect x="1047.9" y="60.3" width="251.30" height="150.80" fill="none" stroke="#333" stroke-width="0.9"/>
<line x1="1044.4" y1="204.30" x2="1047.9" y2="204.30" stroke="#333" stroke-width="0.9"/>
<text x="1041.40" y="207.60" font-size="9.2" font-family="'Liberation Sans', sans-serif" fill="#000" text-anchor="end" textLength="5.85" lengthAdjust="spacingAndGlyphs" xml:space="preserve">0</text>
<line x1="1044.4" y1="177.08" x2="1047.9" y2="177.08" stroke="#333" stroke-width="0.9"/>
<text x="1041.40" y="180.38" font-size="9.2" font-family="'Liberation Sans', sans-serif" fill="#000" text-anchor="end" textLength="11.71" lengthAdjust="spacingAndGlyphs" xml:space="preserve">10</text>
<line x1="1044.4" y1="149.86" x2="1047.9" y2="149.86" stroke="#333" stroke-width="0.9"/>
<text x="1041.40" y="153.16" font-size="9.2" font-family="'Liberation Sans', sans-serif" fill="#000" text-anchor="end" textLength="11.71" lengthAdjust="spacingAndGlyphs" xml:space="preserve">20</text>
<line x1="1044.4" y1="122.64" x2="1047.9" y2="122.64" stroke="#333" stroke-width="0.9"/>
<text x="1041.40" y="125.94" font-size="9.2" font-family="'Liberation Sans', sans-serif" fill="#000" text-anchor="end" textLength="11.71" lengthAdjust="spacingAndGlyphs" xml:space="preserve">30</text>
<line x1="1044.4" y1="95.42" x2="1047.9" y2="95.42" stroke="#333" stroke-width="0.9"/>
<text x="1041.40" y="98.72" font-size="9.2" font-family="'Liberation Sans', sans-serif" fill="#000" text-anchor="end" textLength="11.71" lengthAdjust="spacingAndGlyphs" xml:space="preserve">40</text>
<line x1="1044.4" y1="68.20" x2="1047.9" y2="68.20" stroke="#333" stroke-width="0.9"/>
<text x="1041.40" y="71.50" font-size="9.2" font-family="'Liberation Sans', sans-serif" fill="#000" text-anchor="end" textLength="11.71" lengthAdjust="spacingAndGlyphs" xml:space="preserve">50</text>
<line x1="1087.10" y1="211.1" x2="1087.10" y2="214.6" stroke="#333" stroke-width="0.9"/>
<text x="1087.10" y="224.20" font-size="9.2" font-family="'Liberation Sans', sans-serif" fill="#000" text-anchor="middle" textLength="23.41" lengthAdjust="spacingAndGlyphs" xml:space="preserve">4080</text>
<line x1="1133.75" y1="211.1" x2="1133.75" y2="214.6" stroke="#333" stroke-width="0.9"/>
<text x="1133.75" y="224.20" font-size="9.2" font-family="'Liberation Sans', sans-serif" fill="#000" text-anchor="middle" textLength="23.41" lengthAdjust="spacingAndGlyphs" xml:space="preserve">4100</text>
<line x1="1180.40" y1="211.1" x2="1180.40" y2="214.6" stroke="#333" stroke-width="0.9"/>
<text x="1180.40" y="224.20" font-size="9.2" font-family="'Liberation Sans', sans-serif" fill="#000" text-anchor="middle" textLength="23.41" lengthAdjust="spacingAndGlyphs" xml:space="preserve">4120</text>
<line x1="1227.05" y1="211.1" x2="1227.05" y2="214.6" stroke="#333" stroke-width="0.9"/>
<text x="1227.05" y="224.20" font-size="9.2" font-family="'Liberation Sans', sans-serif" fill="#000" text-anchor="middle" textLength="23.41" lengthAdjust="spacingAndGlyphs" xml:space="preserve">4140</text>
<line x1="1273.70" y1="211.1" x2="1273.70" y2="214.6" stroke="#333" stroke-width="0.9"/>
<text x="1273.70" y="224.20" font-size="9.2" font-family="'Liberation Sans', sans-serif" fill="#000" text-anchor="middle" textLength="23.41" lengthAdjust="spacingAndGlyphs" xml:space="preserve">4160</text>
<text x="1049.30" y="71.00" font-size="8.6" font-family="'Liberation Sans', sans-serif" fill="#000" textLength="5.00" lengthAdjust="spacingAndGlyphs" xml:space="preserve">e</text>
<text x="1055.90" y="66.60" font-size="6.0" font-family="'Liberation Sans', sans-serif" fill="#000" textLength="10.20" lengthAdjust="spacingAndGlyphs" xml:space="preserve">−17</text>
<text x="1067.60" y="71.00" font-size="8.6" font-family="'Liberation Sans', sans-serif" fill="#000" textLength="10.60" lengthAdjust="spacingAndGlyphs" xml:space="preserve">x2</text>
<text x="1077.60" y="71.00" font-size="8.6" font-family="'Liberation Sans', sans-serif" fill="#000" textLength="6.20" lengthAdjust="spacingAndGlyphs" font-style="italic" xml:space="preserve">Å</text>
<rect x="101.7" y="348.4" width="1197.30" height="83.80" fill="#fff"/>
<rect x="454.3" y="348.4" width="54.6" height="83.80" fill="rgb(192,188,0)"/>
<rect x="137.2" y="348.4" width="11.9" height="83.80" fill="url(#hatch)" stroke="#333" stroke-width="1"/>
<rect x="1273.7" y="348.4" width="6" height="83.80" fill="url(#hatch2)" stroke="#333" stroke-width="1"/>
<line x1="174.5" y1="348.4" x2="174.5" y2="432.2" stroke="#444" stroke-width="1.1" stroke-dasharray="3.7,2.4"/>
<line x1="208.6" y1="348.4" x2="208.6" y2="432.2" stroke="#444" stroke-width="1.1" stroke-dasharray="3.7,2.4"/>
<line x1="236.9" y1="348.4" x2="236.9" y2="432.2" stroke="#444" stroke-width="1.1" stroke-dasharray="3.7,2.4"/>
<line x1="278.5" y1="348.4" x2="278.5" y2="432.2" stroke="#444" stroke-width="1.1" stroke-dasharray="3.7,2.4"/>
<line x1="356.5" y1="348.4" x2="356.5" y2="432.2" stroke="#444" stroke-width="1.1" stroke-dasharray="3.7,2.4"/>
<line x1="428.0" y1="348.4" x2="428.0" y2="432.2" stroke="#444" stroke-width="1.1" stroke-dasharray="3.7,2.4"/>
<line x1="481.7" y1="348.4" x2="481.7" y2="432.2" stroke="#444" stroke-width="1.1" stroke-dasharray="3.7,2.4"/>
<line x1="536.4" y1="348.4" x2="536.4" y2="432.2" stroke="#444" stroke-width="1.1" stroke-dasharray="3.7,2.4"/>
<line x1="624.0" y1="348.4" x2="624.0" y2="432.2" stroke="#444" stroke-width="1.1" stroke-dasharray="3.7,2.4"/>
<line x1="782.1" y1="348.4" x2="782.1" y2="432.2" stroke="#444" stroke-width="1.1" stroke-dasharray="3.7,2.4"/>
<line x1="941.9" y1="348.4" x2="941.9" y2="432.2" stroke="#444" stroke-width="1.1" stroke-dasharray="3.7,2.4"/>
<path d="M102.00,417.14 C101.89,417.14 100.69,417.29 101.43,417.14 C102.17,417.00 104.34,416.91 105.71,416.43 C107.09,415.94 107.37,414.14 108.29,414.71 C109.20,415.29 109.23,418.37 110.29,419.29 C111.34,420.20 112.49,420.71 113.57,419.29 C114.66,417.86 114.94,414.71 115.71,412.14 C116.49,409.57 116.57,407.14 117.43,406.43 C118.29,405.71 119.06,407.00 120.00,408.57 C120.94,410.14 121.29,413.29 122.14,414.29 C123.00,415.29 123.34,415.09 124.29,413.57 C125.23,412.06 126.00,407.00 126.86,406.71 C127.71,406.43 127.80,409.69 128.57,412.14 C129.34,414.60 129.80,418.43 130.71,419.00 C131.63,419.57 132.29,416.80 133.14,415.00 C134.00,413.20 134.14,411.14 135.00,410.00 C135.86,408.86 136.57,408.91 137.43,409.29 C138.29,409.66 138.20,412.29 139.29,411.86 C140.37,411.43 141.57,407.80 142.86,407.14 C144.14,406.49 144.57,407.71 145.71,408.57 C146.86,409.43 147.57,410.71 148.57,411.43 C149.57,412.14 149.86,412.57 150.71,412.14 C151.57,411.71 152.00,408.00 152.86,409.29 C153.71,410.57 153.86,417.29 155.00,418.57 C156.14,419.86 157.00,415.57 158.57,415.71 C160.14,415.86 161.29,417.29 162.86,419.29 C164.43,421.29 165.00,426.86 166.43,425.71 C167.86,424.57 168.43,418.86 170.00,413.57 C171.57,408.29 172.71,399.14 174.29,399.29 C175.86,399.43 176.43,411.43 177.86,414.29 C179.29,417.14 180.43,413.00 181.43,413.57 C182.43,414.14 182.00,417.43 182.86,417.14 C183.71,416.86 184.71,412.57 185.71,412.14 C186.71,411.71 186.86,416.86 187.86,415.00 C188.86,413.14 189.86,405.14 190.71,402.86 C191.57,400.57 191.29,401.29 192.14,403.57 C193.00,405.86 194.00,413.29 195.00,414.29 C196.00,415.29 196.14,411.14 197.14,408.57 C198.14,406.00 198.86,400.71 200.00,401.43 C201.14,402.14 201.57,411.43 202.86,412.14 C204.14,412.86 205.29,409.00 206.43,405.00 C207.57,401.00 207.71,393.57 208.57,392.14 C209.43,390.71 209.71,395.43 210.71,397.86 C211.71,400.29 212.57,403.71 213.57,404.29 C214.57,404.86 214.71,401.14 215.71,400.71 C216.71,400.29 217.57,402.14 218.57,402.14 C219.57,402.14 219.71,399.80 220.71,400.71 C221.71,401.63 222.57,405.86 223.57,406.71 C224.57,407.57 224.43,406.77 225.71,405.00 C227.00,403.23 228.71,398.86 230.00,397.86 C231.29,396.86 231.14,400.57 232.14,400.00 C233.14,399.43 233.71,393.57 235.00,395.00 C236.29,396.43 237.00,407.57 238.57,407.14 C240.14,406.71 241.29,391.71 242.86,392.86 C244.43,394.00 244.71,411.43 246.43,412.86 C248.14,414.29 249.57,398.71 251.43,400.00 C253.29,401.29 254.43,418.00 255.71,419.29 C257.00,420.57 257.00,407.86 257.86,406.43 C258.71,405.00 259.00,409.43 260.00,412.14 C261.00,414.86 261.57,423.43 262.86,420.00 C264.14,416.57 265.00,397.86 266.43,395.00 C267.86,392.14 268.71,404.14 270.00,405.71 C271.29,407.29 271.57,403.29 272.86,402.86 C274.14,402.43 275.29,405.71 276.43,403.57 C277.57,401.43 277.71,394.14 278.57,392.14 C279.43,390.14 279.71,394.57 280.71,393.57 C281.71,392.57 282.29,385.57 283.57,387.14 C284.86,388.71 285.43,397.00 287.14,401.43 C288.86,405.86 290.43,410.29 292.14,409.29 C293.86,408.29 294.14,398.43 295.71,396.43 C297.29,394.43 298.57,397.00 300.00,399.29 C301.43,401.57 301.71,405.29 302.86,407.86 C304.00,410.43 304.43,409.86 305.71,412.14 C307.00,414.43 308.14,417.71 309.29,419.29 C310.43,420.86 310.43,420.14 311.43,420.00 C312.43,419.86 313.14,419.43 314.29,418.57 C315.43,417.71 316.00,419.00 317.14,415.71 C318.29,412.43 319.00,404.71 320.00,402.14 C321.00,399.57 321.14,402.00 322.14,402.86 C323.14,403.71 323.71,404.29 325.00,406.43 C326.29,408.57 327.43,413.29 328.57,413.57 C329.71,413.86 329.71,409.43 330.71,407.86 C331.71,406.29 332.71,404.43 333.57,405.71 C334.43,407.00 334.29,413.86 335.00,414.29 C335.71,414.71 336.29,409.71 337.14,407.86 C338.00,406.00 338.43,404.71 339.29,405.00 C340.14,405.29 340.43,408.71 341.43,409.29 C342.43,409.86 343.43,408.29 344.29,407.86 C345.14,407.43 345.14,409.00 345.71,407.14 C346.29,405.29 346.43,401.00 347.14,398.57 C347.86,396.14 348.29,395.57 349.29,395.00 C350.29,394.43 350.86,394.57 352.14,395.71 C353.43,396.86 354.57,401.71 355.71,400.71 C356.86,399.71 356.86,393.29 357.86,390.71 C358.86,388.14 359.86,388.57 360.71,387.86 C361.57,387.14 361.57,386.14 362.14,387.14 C362.71,388.14 362.71,390.43 363.57,392.86 C364.43,395.29 365.43,396.57 366.43,399.29 C367.43,402.00 367.43,400.57 368.57,406.43 C369.71,412.29 370.43,428.43 372.14,428.57 C373.86,428.71 374.71,415.00 377.14,407.14 C379.57,399.29 382.43,392.57 384.29,389.29 C386.14,386.00 384.71,383.14 386.43,390.71 C388.14,398.29 390.14,428.29 392.86,427.14 C395.57,426.00 398.14,393.14 400.00,385.00 C401.86,376.86 401.43,385.29 402.14,386.43 C402.86,387.57 402.71,392.00 403.57,390.71 C404.43,389.43 405.43,381.71 406.43,380.00 C407.43,378.29 407.43,382.57 408.57,382.14 C409.71,381.71 410.86,377.57 412.14,377.86 C413.43,378.14 413.86,384.00 415.00,383.57 C416.14,383.14 416.86,377.86 417.86,375.71 C418.86,373.57 419.29,372.43 420.00,372.86 C420.71,373.29 420.43,377.29 421.43,377.86 C422.43,378.43 423.71,376.43 425.00,375.71 C426.29,375.00 426.71,372.14 427.86,374.29 C429.00,376.43 429.43,387.29 430.71,386.43 C432.00,385.57 432.71,369.57 434.29,370.00 C435.86,370.43 437.14,387.71 438.57,388.57 C440.00,389.43 440.00,375.14 441.43,374.29 C442.86,373.43 444.00,381.71 445.71,384.29 C447.43,386.86 448.57,388.29 450.00,387.14 C451.43,386.00 451.43,379.57 452.86,378.57 C454.29,377.57 455.43,382.86 457.14,382.14 C458.86,381.43 459.86,377.29 461.43,375.00 C463.00,372.71 463.71,370.43 465.00,370.71 C466.29,371.00 466.57,372.43 467.86,376.43 C469.14,380.43 470.00,390.86 471.43,390.71 C472.86,390.57 473.86,378.71 475.00,375.71 C476.14,372.71 476.14,376.86 477.14,375.71 C478.14,374.57 478.86,370.43 480.00,370.00 C481.14,369.57 481.71,373.00 482.86,373.57 C484.00,374.14 484.14,371.57 485.71,372.86 C487.29,374.14 489.14,380.29 490.71,380.00 C492.29,379.71 492.29,371.71 493.57,371.43 C494.86,371.14 495.86,377.71 497.14,378.57 C498.43,379.43 498.71,375.29 500.00,375.71 C501.29,376.14 502.29,381.29 503.57,380.71 C504.86,380.14 505.14,374.43 506.43,372.86 C507.71,371.29 508.43,371.00 510.00,372.86 C511.57,374.71 512.86,381.14 514.29,382.14 C515.71,383.14 516.14,378.43 517.14,377.86 C518.14,377.29 518.29,379.14 519.29,379.29 C520.29,379.43 520.86,379.57 522.14,378.57 C523.43,377.57 524.14,373.29 525.71,374.29 C527.29,375.29 528.00,384.43 530.00,383.57 C532.00,382.71 534.00,371.57 535.71,370.00 C537.43,368.43 537.43,375.43 538.57,375.71 C539.71,376.00 540.00,369.14 541.43,371.43 C542.86,373.71 544.14,387.29 545.71,387.14 C547.29,387.00 548.00,372.29 549.29,370.71 C550.57,369.14 550.86,378.57 552.14,379.29 C553.43,380.00 554.14,374.00 555.71,374.29 C557.29,374.57 558.57,380.71 560.00,380.71 C561.43,380.71 561.71,374.29 562.86,374.29 C564.00,374.29 564.57,381.57 565.71,380.71 C566.86,379.86 567.14,368.43 568.57,370.00 C570.00,371.57 571.14,387.14 572.86,388.57 C574.57,390.00 575.71,378.86 577.14,377.14 C578.57,375.43 578.86,378.29 580.00,380.00 C581.14,381.71 581.71,385.29 582.86,385.71 C584.00,386.14 584.43,379.29 585.71,382.14 C587.00,385.00 588.14,396.71 589.29,400.00 C590.43,403.29 590.43,398.14 591.43,398.57 C592.43,399.00 592.57,408.86 594.29,402.14 C596.00,395.43 598.14,367.71 600.00,365.00 C601.86,362.29 601.86,387.71 603.57,388.57 C605.29,389.43 606.71,368.57 608.57,369.29 C610.43,370.00 611.14,391.43 612.86,392.14 C614.57,392.86 615.57,375.29 617.14,372.86 C618.71,370.43 619.14,380.86 620.71,380.00 C622.29,379.14 623.43,370.71 625.00,368.57 C626.57,366.43 627.29,368.86 628.57,369.29 C629.86,369.71 630.57,368.86 631.43,370.71 C632.29,372.57 632.00,377.43 632.86,378.57 C633.71,379.71 634.43,374.14 635.71,376.43 C637.00,378.71 638.14,389.71 639.29,390.00 C640.43,390.29 640.43,380.43 641.43,377.86 C642.43,375.29 643.00,378.29 644.29,377.14 C645.57,376.00 646.71,371.71 647.86,372.14 C649.00,372.57 649.14,378.00 650.00,379.29 C650.86,380.57 651.14,381.14 652.14,378.57 C653.14,376.00 654.00,368.00 655.00,366.43 C656.00,364.86 655.86,370.86 657.14,370.71 C658.43,370.57 660.00,366.00 661.43,365.71 C662.86,365.43 662.86,367.57 664.29,369.29 C665.71,371.00 666.86,374.71 668.57,374.29 C670.29,373.86 671.57,368.00 672.86,367.14 C674.14,366.29 674.14,371.00 675.00,370.00 C675.86,369.00 675.86,360.71 677.14,362.14 C678.43,363.57 679.71,375.71 681.43,377.14 C683.14,378.57 684.00,371.29 685.71,369.29 C687.43,367.29 688.43,369.14 690.00,367.14 C691.57,365.14 692.14,359.00 693.57,359.29 C695.00,359.57 695.86,367.43 697.14,368.57 C698.43,369.71 698.29,366.43 700.00,365.00 C701.71,363.57 703.71,362.71 705.71,361.43 C707.71,360.14 708.29,359.29 710.00,358.57 C711.71,357.86 712.71,356.71 714.29,357.86 C715.86,359.00 716.71,363.43 717.86,364.29 C719.00,365.14 718.71,360.71 720.00,362.14 C721.29,363.57 722.86,369.86 724.29,371.43 C725.71,373.00 725.86,371.86 727.14,370.00 C728.43,368.14 729.43,363.57 730.71,362.14 C732.00,360.71 732.29,361.43 733.57,362.86 C734.86,364.29 735.43,370.14 737.14,369.29 C738.86,368.43 740.14,359.86 742.14,358.57 C744.14,357.29 745.43,362.57 747.14,362.86 C748.86,363.14 749.57,360.14 750.71,360.00 C751.86,359.86 751.71,360.71 752.86,362.14 C754.00,363.57 755.00,366.86 756.43,367.14 C757.86,367.43 758.57,363.86 760.00,363.57 C761.43,363.29 762.14,365.86 763.57,365.71 C765.00,365.57 765.57,363.86 767.14,362.86 C768.71,361.86 770.00,361.43 771.43,360.71 C772.86,360.00 773.00,359.43 774.29,359.29 C775.57,359.14 776.29,360.43 777.86,360.00 C779.43,359.57 780.57,356.86 782.14,357.14 C783.71,357.43 784.14,360.14 785.71,361.43 C787.29,362.71 788.29,362.57 790.00,363.57 C791.71,364.57 792.57,366.57 794.29,366.43 C796.00,366.29 797.14,364.57 798.57,362.86 C800.00,361.14 800.00,356.29 801.43,357.86 C802.86,359.43 804.14,370.14 805.71,370.71 C807.29,371.29 807.86,362.00 809.29,360.71 C810.71,359.43 811.43,364.14 812.86,364.29 C814.29,364.43 814.71,361.71 816.43,361.43 C818.14,361.14 819.57,360.86 821.43,362.86 C823.29,364.86 824.14,370.43 825.71,371.43 C827.29,372.43 827.71,369.57 829.29,367.86 C830.86,366.14 832.14,365.14 833.57,362.86 C835.00,360.57 835.29,357.86 836.43,356.43 C837.57,355.00 838.00,354.29 839.29,355.71 C840.57,357.14 841.29,362.29 842.86,363.57 C844.43,364.86 845.71,363.29 847.14,362.14 C848.57,361.00 848.43,359.29 850.00,357.86 C851.57,356.43 853.29,354.29 855.00,355.00 C856.71,355.71 857.43,360.57 858.57,361.43 C859.71,362.29 859.57,358.43 860.71,359.29 C861.86,360.14 862.86,365.71 864.29,365.71 C865.71,365.71 866.43,361.29 867.86,359.29 C869.29,357.29 869.57,355.14 871.43,355.71 C873.29,356.29 875.14,362.29 877.14,362.14 C879.14,362.00 880.00,355.14 881.43,355.00 C882.86,354.86 883.29,361.00 884.29,361.43 C885.29,361.86 885.57,357.29 886.43,357.14 C887.29,357.00 887.43,360.86 888.57,360.71 C889.71,360.57 890.86,357.86 892.14,356.43 C893.43,355.00 894.00,353.14 895.00,353.57 C896.00,354.00 896.14,357.43 897.14,358.57 C898.14,359.71 898.86,359.29 900.00,359.29 C901.14,359.29 901.14,358.14 902.86,358.57 C904.57,359.00 906.29,361.14 908.57,361.43 C910.86,361.71 912.71,359.14 914.29,360.00 C915.86,360.86 915.14,361.14 916.43,365.71 C917.71,370.29 919.14,382.71 920.71,382.86 C922.29,383.00 923.14,369.00 924.29,366.43 C925.43,363.86 925.14,371.14 926.43,370.00 C927.71,368.86 929.14,362.14 930.71,360.71 C932.29,359.29 933.00,361.00 934.29,362.86 C935.57,364.71 935.71,371.86 937.14,370.00 C938.57,368.14 940.00,355.71 941.43,353.57 C942.86,351.43 943.00,357.86 944.29,359.29 C945.57,360.71 946.43,360.00 947.86,360.71 C949.29,361.43 950.00,360.71 951.43,362.86 C952.86,365.00 953.43,372.14 955.00,371.43 C956.57,370.71 957.71,361.29 959.29,359.29 C960.86,357.29 961.57,359.86 962.86,361.43 C964.14,363.00 964.29,367.71 965.71,367.14 C967.14,366.57 968.86,357.29 970.00,358.57 C971.14,359.86 970.57,373.29 971.43,373.57 C972.29,373.86 973.00,361.57 974.29,360.00 C975.57,358.43 976.43,366.43 977.86,365.71 C979.29,365.00 980.00,358.00 981.43,356.43 C982.86,354.86 983.71,357.86 985.00,357.86 C986.29,357.86 986.43,354.57 987.86,356.43 C989.29,358.29 990.29,366.71 992.14,367.14 C994.00,367.57 995.29,359.86 997.14,358.57 C999.00,357.29 1000.00,359.29 1001.43,360.71 C1002.86,362.14 1002.86,365.00 1004.29,365.71 C1005.71,366.43 1007.29,363.71 1008.57,364.29 C1009.86,364.86 1009.57,368.14 1010.71,368.57 C1011.86,369.00 1013.00,367.86 1014.29,366.43 C1015.57,365.00 1015.57,363.14 1017.14,361.43 C1018.71,359.71 1020.43,356.86 1022.14,357.86 C1023.86,358.86 1024.14,366.29 1025.71,366.43 C1027.29,366.57 1028.71,359.14 1030.00,358.57 C1031.29,358.00 1030.71,364.00 1032.14,363.57 C1033.57,363.14 1035.71,357.86 1037.14,356.43 C1038.57,355.00 1038.29,355.14 1039.29,356.43 C1040.29,357.71 1041.14,362.14 1042.14,362.86 C1043.14,363.57 1042.71,359.43 1044.29,360.00 C1045.86,360.57 1047.43,366.29 1050.00,365.71 C1052.57,365.14 1055.00,357.43 1057.14,357.14 C1059.29,356.86 1059.29,363.29 1060.71,364.29 C1062.14,365.29 1063.00,362.43 1064.29,362.14 C1065.57,361.86 1065.57,364.00 1067.14,362.86 C1068.71,361.71 1070.14,356.29 1072.14,356.43 C1074.14,356.57 1075.29,362.71 1077.14,363.57 C1079.00,364.43 1079.71,360.14 1081.43,360.71 C1083.14,361.29 1083.71,366.00 1085.71,366.43 C1087.71,366.86 1089.43,364.14 1091.43,362.86 C1093.43,361.57 1094.43,359.86 1095.71,360.00 C1097.00,360.14 1097.00,360.29 1097.86,363.57 C1098.71,366.86 1098.86,372.29 1100.00,376.43 C1101.14,380.57 1102.00,386.86 1103.57,384.29 C1105.14,381.71 1106.29,364.57 1107.86,363.57 C1109.43,362.57 1110.00,379.00 1111.43,379.29 C1112.86,379.57 1113.86,367.43 1115.00,365.00 C1116.14,362.57 1115.86,368.00 1117.14,367.14 C1118.43,366.29 1119.71,360.71 1121.43,360.71 C1123.14,360.71 1124.29,366.86 1125.71,367.14 C1127.14,367.43 1127.43,362.57 1128.57,362.14 C1129.71,361.71 1130.43,365.00 1131.43,365.00 C1132.43,365.00 1132.43,361.14 1133.57,362.14 C1134.71,363.14 1135.29,370.57 1137.14,370.00 C1139.00,369.43 1140.43,360.57 1142.86,359.29 C1145.29,358.00 1146.86,363.43 1149.29,363.57 C1151.71,363.71 1152.71,357.71 1155.00,360.00 C1157.29,362.29 1158.29,374.57 1160.71,375.00 C1163.14,375.43 1164.71,365.57 1167.14,362.14 C1169.57,358.71 1170.43,357.71 1172.86,357.86 C1175.29,358.00 1176.71,363.14 1179.29,362.86 C1181.86,362.57 1183.29,357.14 1185.71,356.43 C1188.14,355.71 1189.43,356.71 1191.43,359.29 C1193.43,361.86 1194.00,369.14 1195.71,369.29 C1197.43,369.43 1198.29,361.14 1200.00,360.00 C1201.71,358.86 1202.29,363.29 1204.29,363.57 C1206.29,363.86 1208.00,363.57 1210.00,361.43 C1212.00,359.29 1212.14,351.57 1214.29,352.86 C1216.43,354.14 1218.43,366.71 1220.71,367.86 C1223.00,369.00 1224.00,359.57 1225.71,358.57 C1227.43,357.57 1227.00,361.43 1229.29,362.86 C1231.57,364.29 1234.57,364.43 1237.14,365.71 C1239.71,367.00 1239.71,370.43 1242.14,369.29 C1244.57,368.14 1247.43,361.00 1249.29,360.00 C1251.14,359.00 1250.29,363.57 1251.43,364.29 C1252.57,365.00 1253.71,363.14 1255.00,363.57 C1256.29,364.00 1256.14,368.00 1257.86,366.43 C1259.57,364.86 1261.86,355.86 1263.57,355.71 C1265.29,355.57 1265.43,364.57 1266.43,365.71 C1267.43,366.86 1267.57,361.57 1268.57,361.43 C1269.57,361.29 1270.14,365.14 1271.43,365.00 C1272.71,364.86 1273.86,360.43 1275.00,360.71 C1276.14,361.00 1276.14,366.14 1277.14,366.43 C1278.14,366.71 1278.57,362.00 1280.00,362.14 C1281.43,362.29 1282.86,366.29 1284.29,367.14 C1285.71,368.00 1286.00,367.14 1287.14,366.43 C1288.29,365.71 1288.71,363.43 1290.00,363.57 C1291.29,363.71 1292.86,366.43 1293.57,367.14" fill="none" stroke="rgb(0,0,255)" stroke-width="1.25" stroke-linejoin="round"/>
<rect x="101.7" y="348.4" width="1197.30" height="83.80" fill="none" stroke="#333" stroke-width="1"/>
<line x1="98.2" y1="413.30" x2="101.7" y2="413.30" stroke="#333" stroke-width="0.9"/>
<text x="94.60" y="416.90" font-size="10" font-family="'Liberation Sans', sans-serif" fill="#000" text-anchor="end" textLength="12.72" lengthAdjust="spacingAndGlyphs" xml:space="preserve">20</text>
<line x1="98.2" y1="382.70" x2="101.7" y2="382.70" stroke="#333" stroke-width="0.9"/>
<text x="94.60" y="386.30" font-size="10" font-family="'Liberation Sans', sans-serif" fill="#000" text-anchor="end" textLength="12.72" lengthAdjust="spacingAndGlyphs" xml:space="preserve">40</text>
<line x1="98.2" y1="352.10" x2="101.7" y2="352.10" stroke="#333" stroke-width="0.9"/>
<text x="94.60" y="355.70" font-size="10" font-family="'Liberation Sans', sans-serif" fill="#000" text-anchor="end" textLength="12.72" lengthAdjust="spacingAndGlyphs" xml:space="preserve">60</text>
<line x1="116.40" y1="432.2" x2="116.40" y2="435.7" stroke="#333" stroke-width="0.9"/>
<text x="116.40" y="447.20" font-size="10" font-family="'Liberation Sans', sans-serif" fill="#000" text-anchor="middle" textLength="25.45" lengthAdjust="spacingAndGlyphs" xml:space="preserve">3500</text>
<line x1="175.53" y1="432.2" x2="175.53" y2="435.7" stroke="#333" stroke-width="0.9"/>
<text x="175.53" y="447.20" font-size="10" font-family="'Liberation Sans', sans-serif" fill="#000" text-anchor="middle" textLength="25.45" lengthAdjust="spacingAndGlyphs" xml:space="preserve">3600</text>
<line x1="234.66" y1="432.2" x2="234.66" y2="435.7" stroke="#333" stroke-width="0.9"/>
<text x="234.66" y="447.20" font-size="10" font-family="'Liberation Sans', sans-serif" fill="#000" text-anchor="middle" textLength="25.45" lengthAdjust="spacingAndGlyphs" xml:space="preserve">3700</text>
<line x1="293.79" y1="432.2" x2="293.79" y2="435.7" stroke="#333" stroke-width="0.9"/>
<text x="293.79" y="447.20" font-size="10" font-family="'Liberation Sans', sans-serif" fill="#000" text-anchor="middle" textLength="25.45" lengthAdjust="spacingAndGlyphs" xml:space="preserve">3800</text>
<line x1="352.92" y1="432.2" x2="352.92" y2="435.7" stroke="#333" stroke-width="0.9"/>
<text x="352.92" y="447.20" font-size="10" font-family="'Liberation Sans', sans-serif" fill="#000" text-anchor="middle" textLength="25.45" lengthAdjust="spacingAndGlyphs" xml:space="preserve">3900</text>
<line x1="412.05" y1="432.2" x2="412.05" y2="435.7" stroke="#333" stroke-width="0.9"/>
<text x="412.05" y="447.20" font-size="10" font-family="'Liberation Sans', sans-serif" fill="#000" text-anchor="middle" textLength="25.45" lengthAdjust="spacingAndGlyphs" xml:space="preserve">4000</text>
<line x1="471.18" y1="432.2" x2="471.18" y2="435.7" stroke="#333" stroke-width="0.9"/>
<text x="471.18" y="447.20" font-size="10" font-family="'Liberation Sans', sans-serif" fill="#000" text-anchor="middle" textLength="25.45" lengthAdjust="spacingAndGlyphs" xml:space="preserve">4100</text>
<line x1="530.31" y1="432.2" x2="530.31" y2="435.7" stroke="#333" stroke-width="0.9"/>
<text x="530.31" y="447.20" font-size="10" font-family="'Liberation Sans', sans-serif" fill="#000" text-anchor="middle" textLength="25.45" lengthAdjust="spacingAndGlyphs" xml:space="preserve">4200</text>
<line x1="589.44" y1="432.2" x2="589.44" y2="435.7" stroke="#333" stroke-width="0.9"/>
<text x="589.44" y="447.20" font-size="10" font-family="'Liberation Sans', sans-serif" fill="#000" text-anchor="middle" textLength="25.45" lengthAdjust="spacingAndGlyphs" xml:space="preserve">4300</text>
<line x1="648.57" y1="432.2" x2="648.57" y2="435.7" stroke="#333" stroke-width="0.9"/>
<text x="648.57" y="447.20" font-size="10" font-family="'Liberation Sans', sans-serif" fill="#000" text-anchor="middle" textLength="25.45" lengthAdjust="spacingAndGlyphs" xml:space="preserve">4400</text>
<line x1="707.70" y1="432.2" x2="707.70" y2="435.7" stroke="#333" stroke-width="0.9"/>
<text x="707.70" y="447.20" font-size="10" font-family="'Liberation Sans', sans-serif" fill="#000" text-anchor="middle" textLength="25.45" lengthAdjust="spacingAndGlyphs" xml:space="preserve">4500</text>
<line x1="766.83" y1="432.2" x2="766.83" y2="435.7" stroke="#333" stroke-width="0.9"/>
<text x="766.83" y="447.20" font-size="10" font-family="'Liberation Sans', sans-serif" fill="#000" text-anchor="middle" textLength="25.45" lengthAdjust="spacingAndGlyphs" xml:space="preserve">4600</text>
<line x1="825.96" y1="432.2" x2="825.96" y2="435.7" stroke="#333" stroke-width="0.9"/>
<text x="825.96" y="447.20" font-size="10" font-family="'Liberation Sans', sans-serif" fill="#000" text-anchor="middle" textLength="25.45" lengthAdjust="spacingAndGlyphs" xml:space="preserve">4700</text>
<line x1="885.09" y1="432.2" x2="885.09" y2="435.7" stroke="#333" stroke-width="0.9"/>
<text x="885.09" y="447.20" font-size="10" font-family="'Liberation Sans', sans-serif" fill="#000" text-anchor="middle" textLength="25.45" lengthAdjust="spacingAndGlyphs" xml:space="preserve">4800</text>
<line x1="944.22" y1="432.2" x2="944.22" y2="435.7" stroke="#333" stroke-width="0.9"/>
<text x="944.22" y="447.20" font-size="10" font-family="'Liberation Sans', sans-serif" fill="#000" text-anchor="middle" textLength="25.45" lengthAdjust="spacingAndGlyphs" xml:space="preserve">4900</text>
<line x1="1003.35" y1="432.2" x2="1003.35" y2="435.7" stroke="#333" stroke-width="0.9"/>
<text x="1003.35" y="447.20" font-size="10" font-family="'Liberation Sans', sans-serif" fill="#000" text-anchor="middle" textLength="25.45" lengthAdjust="spacingAndGlyphs" xml:space="preserve">5000</text>
<line x1="1062.48" y1="432.2" x2="1062.48" y2="435.7" stroke="#333" stroke-width="0.9"/>
<text x="1062.48" y="447.20" font-size="10" font-family="'Liberation Sans', sans-serif" fill="#000" text-anchor="middle" textLength="25.45" lengthAdjust="spacingAndGlyphs" xml:space="preserve">5100</text>
<line x1="1121.61" y1="432.2" x2="1121.61" y2="435.7" stroke="#333" stroke-width="0.9"/>
<text x="1121.61" y="447.20" font-size="10" font-family="'Liberation Sans', sans-serif" fill="#000" text-anchor="middle" textLength="25.45" lengthAdjust="spacingAndGlyphs" xml:space="preserve">5200</text>
<line x1="1180.74" y1="432.2" x2="1180.74" y2="435.7" stroke="#333" stroke-width="0.9"/>
<text x="1180.74" y="447.20" font-size="10" font-family="'Liberation Sans', sans-serif" fill="#000" text-anchor="middle" textLength="25.45" lengthAdjust="spacingAndGlyphs" xml:space="preserve">5300</text>
<line x1="1239.87" y1="432.2" x2="1239.87" y2="435.7" stroke="#333" stroke-width="0.9"/>
<text x="1239.87" y="447.20" font-size="10" font-family="'Liberation Sans', sans-serif" fill="#000" text-anchor="middle" textLength="25.45" lengthAdjust="spacingAndGlyphs" xml:space="preserve">5400</text>
<line x1="1299.00" y1="432.2" x2="1299.00" y2="435.7" stroke="#333" stroke-width="0.9"/>
<text x="1299.00" y="447.20" font-size="10" font-family="'Liberation Sans', sans-serif" fill="#000" text-anchor="middle" textLength="25.45" lengthAdjust="spacingAndGlyphs" xml:space="preserve">5500</text>
<text x="116.80" y="344.20" font-size="9.2" font-family="'Liberation Sans', sans-serif" fill="#000" textLength="5.40" lengthAdjust="spacingAndGlyphs" font-style="italic" xml:space="preserve">e</text>
<text x="123.40" y="342.40" font-size="7" font-family="'Liberation Sans', sans-serif" fill="#000" textLength="12.00" lengthAdjust="spacingAndGlyphs" font-style="italic" xml:space="preserve">−17</text>
<text x="137.30" y="346.30" font-size="9.6" font-family="'Liberation Sans', sans-serif" fill="#000" textLength="17.80" lengthAdjust="spacingAndGlyphs" font-style="italic" xml:space="preserve">x2Å</text>
<g clip-path="url(#topclip)">
<text transform="translate(119.40,277.90) rotate(90)" x="0" y="0" font-size="10" font-family="'Liberation Sans', sans-serif" fill="rgb(255,165,0)" textLength="18.92" lengthAdjust="spacingAndGlyphs">SiIV</text>
<path d="M118.00,305.00 Q118.00,303.30 120.80,303.30 Q122.70,303.30 123.00,301.80 Q123.30,303.30 125.20,303.30 Q128.00,303.30 128.00,305.00" fill="none" stroke="rgb(255,165,0)" stroke-width="0.9"/>
<text transform="translate(117.30,319.10) rotate(90)" x="0" y="0" font-size="10" font-family="'Liberation Sans', sans-serif" fill="rgb(255,0,0)" textLength="17.49" lengthAdjust="spacingAndGlyphs">OVI</text>
<path d="M115.90,347.50 Q115.90,345.80 118.70,345.80 Q120.60,345.80 120.90,344.30 Q121.20,345.80 123.10,345.80 Q125.90,345.80 125.90,347.50" fill="none" stroke="rgb(255,0,0)" stroke-width="0.9"/>
<text transform="translate(136.70,320.20) rotate(90)" x="0" y="0" font-size="10" font-family="'Liberation Sans', sans-serif" fill="rgb(128,0,128)" textLength="19.57" lengthAdjust="spacingAndGlyphs">HeII</text>
<path d="M135.30,347.50 Q135.30,345.80 138.10,345.80 Q140.00,345.80 140.30,344.30 Q140.60,345.80 142.50,345.80 Q145.30,345.80 145.30,347.50" fill="none" stroke="rgb(128,0,128)" stroke-width="0.9"/>
<text transform="translate(241.30,321.00) rotate(90)" x="0" y="0" font-size="10" font-family="'Liberation Sans', sans-serif" fill="rgb(138,43,226)" textLength="18.92" lengthAdjust="spacingAndGlyphs">SiIV</text>
<path d="M239.90,347.50 Q239.90,345.80 242.70,345.80 Q244.60,345.80 244.90,344.30 Q245.20,345.80 247.10,345.80 Q249.90,345.80 249.90,347.50" fill="none" stroke="rgb(138,43,226)" stroke-width="0.9"/>
<text transform="translate(282.80,316.40) rotate(90)" x="0" y="0" font-size="10" font-family="'Liberation Sans', sans-serif" fill="rgb(0,128,0)" textLength="23.42" lengthAdjust="spacingAndGlyphs">NeVI</text>
<path d="M281.40,347.50 Q281.40,345.80 284.20,345.80 Q286.10,345.80 286.40,344.30 Q286.70,345.80 288.60,345.80 Q291.40,345.80 291.40,347.50" fill="none" stroke="rgb(0,128,0)" stroke-width="0.9"/>
<text transform="translate(332.30,322.20) rotate(90)" x="0" y="0" font-size="10" font-family="'Liberation Sans', sans-serif" fill="rgb(135,206,235)" textLength="13.77" lengthAdjust="spacingAndGlyphs">OII</text>
<path d="M330.90,347.50 Q330.90,345.80 333.70,345.80 Q335.60,345.80 335.90,344.30 Q336.20,345.80 338.10,345.80 Q340.90,345.80 340.90,347.50" fill="none" stroke="rgb(135,206,235)" stroke-width="0.9"/>
<text transform="translate(344.70,319.30) rotate(90)" x="0" y="0" font-size="10" font-family="'Liberation Sans', sans-serif" fill="rgb(255,165,0)" textLength="16.77" lengthAdjust="spacingAndGlyphs">CIV</text>
<path d="M343.30,347.50 Q343.30,345.80 346.10,345.80 Q348.00,345.80 348.30,344.30 Q348.60,345.80 350.50,345.80 Q353.30,345.80 353.30,347.50" fill="none" stroke="rgb(255,165,0)" stroke-width="0.9"/>
<text transform="translate(352.90,322.20) rotate(90)" x="0" y="0" font-size="10" font-family="'Liberation Sans', sans-serif" fill="rgb(135,206,235)" textLength="13.77" lengthAdjust="spacingAndGlyphs">OII</text>
<path d="M351.50,347.50 Q351.50,345.80 354.30,345.80 Q356.20,345.80 356.50,344.30 Q356.80,345.80 358.70,345.80 Q361.50,345.80 361.50,347.50" fill="none" stroke="rgb(135,206,235)" stroke-width="0.9"/>
<text transform="translate(531.00,319.00) rotate(90)" x="0" y="0" font-size="10" font-family="'Liberation Sans', sans-serif" fill="rgb(255,0,0)" textLength="14.32" lengthAdjust="spacingAndGlyphs">NV</text>
<path d="M529.60,347.50 Q529.60,345.80 532.40,345.80 Q534.30,345.80 534.60,344.30 Q534.90,345.80 536.80,345.80 Q539.60,345.80 539.60,347.50" fill="none" stroke="rgb(255,0,0)" stroke-width="0.9"/>
<text transform="translate(576.70,324.70) rotate(90)" x="0" y="0" font-size="10" font-family="'Liberation Sans', sans-serif" fill="rgb(255,0,0)" textLength="15.02" lengthAdjust="spacingAndGlyphs">SiII</text>
<path d="M575.30,347.50 Q575.30,345.80 578.10,345.80 Q580.00,345.80 580.30,344.30 Q580.60,345.80 582.50,345.80 Q585.30,345.80 585.30,347.50" fill="none" stroke="rgb(255,0,0)" stroke-width="0.9"/>
<text transform="translate(624.40,320.20) rotate(90)" x="0" y="0" font-size="10" font-family="'Liberation Sans', sans-serif" fill="rgb(138,43,226)" textLength="19.57" lengthAdjust="spacingAndGlyphs">HeII</text>
<path d="M623.00,347.50 Q623.00,345.80 625.80,345.80 Q627.70,345.80 628.00,344.30 Q628.30,345.80 630.20,345.80 Q633.00,345.80 633.00,347.50" fill="none" stroke="rgb(138,43,226)" stroke-width="0.9"/>
<text transform="translate(709.50,327.60) rotate(90)" x="0" y="0" font-size="10" font-family="'Liberation Sans', sans-serif" fill="rgb(135,206,235)" textLength="13.44" lengthAdjust="spacingAndGlyphs">Hγ</text>
<path d="M708.10,347.50 Q708.10,345.80 710.90,345.80 Q712.80,345.80 713.10,344.30 Q713.40,345.80 715.30,345.80 Q718.10,345.80 718.10,347.50" fill="none" stroke="rgb(135,206,235)" stroke-width="0.9"/>
<text transform="translate(733.40,327.60) rotate(90)" x="0" y="0" font-size="10" font-family="'Liberation Sans', sans-serif" fill="rgb(135,206,235)" textLength="13.44" lengthAdjust="spacingAndGlyphs">Hγ</text>
<path d="M732.00,347.50 Q732.00,345.80 734.80,345.80 Q736.70,345.80 737.00,344.30 Q737.30,345.80 739.20,345.80 Q742.00,345.80 742.00,347.50" fill="none" stroke="rgb(135,206,235)" stroke-width="0.9"/>
<text transform="translate(847.40,320.30) rotate(90)" x="0" y="0" font-size="10" font-family="'Liberation Sans', sans-serif" fill="rgb(255,0,0)" textLength="18.92" lengthAdjust="spacingAndGlyphs">SiIV</text>
<path d="M846.00,347.50 Q846.00,345.80 848.80,345.80 Q850.70,345.80 851.00,344.30 Q851.30,345.80 853.20,345.80 Q856.00,345.80 856.00,347.50" fill="none" stroke="rgb(255,0,0)" stroke-width="0.9"/>
<text transform="translate(880.20,281.00) rotate(90)" x="0" y="0" font-size="10" font-family="'Liberation Sans', sans-serif" fill="rgb(255,165,0)" textLength="15.83" lengthAdjust="spacingAndGlyphs">CIII</text>
<path d="M878.80,305.00 Q878.80,303.30 881.60,303.30 Q883.50,303.30 883.80,301.80 Q884.10,303.30 886.00,303.30 Q888.80,303.30 888.80,305.00" fill="none" stroke="rgb(255,165,0)" stroke-width="0.9"/>
<text transform="translate(881.80,326.90) rotate(90)" x="0" y="0" font-size="10" font-family="'Liberation Sans', sans-serif" fill="rgb(0,128,0)" textLength="13.44" lengthAdjust="spacingAndGlyphs">Hγ</text>
<path d="M880.40,347.50 Q880.40,345.80 883.20,345.80 Q885.10,345.80 885.40,344.30 Q885.70,345.80 887.60,345.80 Q890.40,345.80 890.40,347.50" fill="none" stroke="rgb(0,128,0)" stroke-width="0.9"/>
<text transform="translate(1013.40,323.70) rotate(90)" x="0" y="0" font-size="10" font-family="'Liberation Sans', sans-serif" fill="rgb(128,0,128)" textLength="12.88" lengthAdjust="spacingAndGlyphs">CII</text>
<path d="M1012.00,347.50 Q1012.00,345.80 1014.80,345.80 Q1016.70,345.80 1017.00,344.30 Q1017.30,345.80 1019.20,345.80 Q1022.00,345.80 1022.00,347.50" fill="none" stroke="rgb(128,0,128)" stroke-width="0.9"/>
<text transform="translate(1030.90,326.90) rotate(90)" x="0" y="0" font-size="10" font-family="'Liberation Sans', sans-serif" fill="rgb(135,206,235)" textLength="13.90" lengthAdjust="spacingAndGlyphs">Hβ</text>
<path d="M1029.50,347.50 Q1029.50,345.80 1032.30,345.80 Q1034.20,345.80 1034.50,344.30 Q1034.80,345.80 1036.70,345.80 Q1039.50,345.80 1039.50,347.50" fill="none" stroke="rgb(135,206,235)" stroke-width="0.9"/>
<text transform="translate(1048.40,323.70) rotate(90)" x="0" y="0" font-size="10" font-family="'Liberation Sans', sans-serif" fill="rgb(138,43,226)" textLength="15.83" lengthAdjust="spacingAndGlyphs">CIII</text>
<path d="M1047.00,347.50 Q1047.00,345.80 1049.80,345.80 Q1051.70,345.80 1052.00,344.30 Q1052.30,345.80 1054.20,345.80 Q1057.00,345.80 1057.00,347.50" fill="none" stroke="rgb(138,43,226)" stroke-width="0.9"/>
<text transform="translate(1057.90,326.90) rotate(90)" x="0" y="0" font-size="10" font-family="'Liberation Sans', sans-serif" fill="rgb(135,206,235)" textLength="13.90" lengthAdjust="spacingAndGlyphs">Hβ</text>
<path d="M1056.50,347.50 Q1056.50,345.80 1059.30,345.80 Q1061.20,345.80 1061.50,344.30 Q1061.80,345.80 1063.70,345.80 Q1066.50,345.80 1066.50,347.50" fill="none" stroke="rgb(135,206,235)" stroke-width="0.9"/>
<text transform="translate(1091.60,322.60) rotate(90)" x="0" y="0" font-size="10" font-family="'Liberation Sans', sans-serif" fill="rgb(135,206,235)" textLength="16.72" lengthAdjust="spacingAndGlyphs">OIII</text>
<path d="M1090.20,347.50 Q1090.20,345.80 1093.00,345.80 Q1094.90,345.80 1095.20,344.30 Q1095.50,345.80 1097.40,345.80 Q1100.20,345.80 1100.20,347.50" fill="none" stroke="rgb(135,206,235)" stroke-width="0.9"/>
<text transform="translate(1118.10,322.60) rotate(90)" x="0" y="0" font-size="10" font-family="'Liberation Sans', sans-serif" fill="rgb(135,206,235)" textLength="16.72" lengthAdjust="spacingAndGlyphs">OIII</text>
<path d="M1116.70,347.50 Q1116.70,345.80 1119.50,345.80 Q1121.40,345.80 1121.70,344.30 Q1122.00,345.80 1123.90,345.80 Q1126.70,345.80 1126.70,347.50" fill="none" stroke="rgb(135,206,235)" stroke-width="0.9"/>
<text transform="translate(1120.40,280.30) rotate(90)" x="0" y="0" font-size="10" font-family="'Liberation Sans', sans-serif" fill="rgb(135,206,235)" textLength="16.72" lengthAdjust="spacingAndGlyphs">OIII</text>
<path d="M1119.00,305.00 Q1119.00,303.30 1121.80,303.30 Q1123.70,303.30 1124.00,301.80 Q1124.30,303.30 1126.20,303.30 Q1129.00,303.30 1129.00,305.00" fill="none" stroke="rgb(135,206,235)" stroke-width="0.9"/>
<text transform="translate(1148.10,280.30) rotate(90)" x="0" y="0" font-size="10" font-family="'Liberation Sans', sans-serif" fill="rgb(135,206,235)" textLength="16.72" lengthAdjust="spacingAndGlyphs">OIII</text>
<path d="M1146.70,305.00 Q1146.70,303.30 1149.50,303.30 Q1151.40,303.30 1151.70,301.80 Q1152.00,303.30 1153.90,303.30 Q1156.70,303.30 1156.70,305.00" fill="none" stroke="rgb(135,206,235)" stroke-width="0.9"/>
<text transform="translate(1151.80,319.30) rotate(90)" x="0" y="0" font-size="10" font-family="'Liberation Sans', sans-serif" fill="rgb(255,0,0)" textLength="16.77" lengthAdjust="spacingAndGlyphs">CIV</text>
<path d="M1150.40,347.50 Q1150.40,345.80 1153.20,345.80 Q1155.10,345.80 1155.40,344.30 Q1155.70,345.80 1157.60,345.80 Q1160.40,345.80 1160.40,347.50" fill="none" stroke="rgb(255,0,0)" stroke-width="0.9"/>
<text transform="translate(1224.20,327.30) rotate(90)" x="0" y="0" font-size="10" font-family="'Liberation Sans', sans-serif" fill="rgb(0,128,0)" textLength="13.90" lengthAdjust="spacingAndGlyphs">Hβ</text>
<path d="M1222.80,347.50 Q1222.80,345.80 1225.60,345.80 Q1227.50,345.80 1227.80,344.30 Q1228.10,345.80 1230.00,345.80 Q1232.80,345.80 1232.80,347.50" fill="none" stroke="rgb(0,128,0)" stroke-width="0.9"/>
<text transform="translate(1292.80,280.30) rotate(90)" x="0" y="0" font-size="10" font-family="'Liberation Sans', sans-serif" fill="rgb(255,0,255)" textLength="13.77" lengthAdjust="spacingAndGlyphs">OII</text>
<path d="M1291.40,305.00 Q1291.40,303.30 1294.20,303.30 Q1296.10,303.30 1296.40,301.80 Q1296.70,303.30 1298.60,303.30 Q1301.40,303.30 1301.40,305.00" fill="none" stroke="rgb(255,0,255)" stroke-width="0.9"/>
<text transform="translate(1288.40,322.60) rotate(90)" x="0" y="0" font-size="10" font-family="'Liberation Sans', sans-serif" fill="rgb(0,128,0)" textLength="16.72" lengthAdjust="spacingAndGlyphs">OIII</text>
<path d="M1287.00,347.50 Q1287.00,345.80 1289.80,345.80 Q1291.70,345.80 1292.00,344.30 Q1292.30,345.80 1294.20,345.80 Q1297.00,345.80 1297.00,347.50" fill="none" stroke="rgb(0,128,0)" stroke-width="0.9"/>
</g>
<rect x="480.2" y="449.9" width="16.7" height="6.5" fill="rgb(255,0,0)"/>
<text x="503.70" y="456.10" font-size="8" font-family="'Liberation Sans', sans-serif" fill="#000" textLength="13.73" lengthAdjust="spacingAndGlyphs" xml:space="preserve">Lyα</text>
<rect x="534.0" y="449.9" width="16.7" height="6.5" fill="rgb(0,128,0)"/>
<text x="557.50" y="456.10" font-size="8" font-family="'Liberation Sans', sans-serif" fill="#000" textLength="11.02" lengthAdjust="spacingAndGlyphs" xml:space="preserve">OII</text>
<rect x="586.3" y="449.9" width="16.7" height="6.5" fill="rgb(138,43,226)"/>
<text x="609.80" y="456.10" font-size="8" font-family="'Liberation Sans', sans-serif" fill="#000" textLength="13.42" lengthAdjust="spacingAndGlyphs" xml:space="preserve">CIV</text>
<rect x="641.7" y="449.9" width="16.7" height="6.5" fill="rgb(128,0,128)"/>
<text x="665.20" y="456.10" font-size="8" font-family="'Liberation Sans', sans-serif" fill="#000" textLength="12.66" lengthAdjust="spacingAndGlyphs" xml:space="preserve">CIII</text>
<rect x="693.4" y="449.9" width="16.7" height="6.5" fill="rgb(255,0,255)"/>
<text x="716.90" y="456.10" font-size="8" font-family="'Liberation Sans', sans-serif" fill="#000" textLength="16.70" lengthAdjust="spacingAndGlyphs" xml:space="preserve">MgII</text>
<rect x="749.3" y="449.9" width="16.7" height="6.5" fill="rgb(255,165,0)"/>
<text x="772.80" y="456.10" font-size="8" font-family="'Liberation Sans', sans-serif" fill="#000" textLength="15.66" lengthAdjust="spacingAndGlyphs" xml:space="preserve">HeII</text>
<rect x="803.5" y="449.9" width="16.7" height="6.5" fill="rgb(135,206,235)"/>
<text x="827.00" y="456.10" font-size="8" font-family="'Liberation Sans', sans-serif" fill="#000" textLength="26.70" lengthAdjust="spacingAndGlyphs" xml:space="preserve">(K)CaII</text>
<rect x="869.3" y="449.9" width="16.7" height="6.5" fill="rgb(135,206,235)"/>
<text x="892.80" y="456.10" font-size="8" font-family="'Liberation Sans', sans-serif" fill="#000" textLength="27.47" lengthAdjust="spacingAndGlyphs" xml:space="preserve">(H)CaII</text>
<text x="70.30" y="498.80" font-size="13.0" font-family="'Liberation Mono', monospace" fill="#000" stroke="#000" stroke-width="0.2" xml:space="preserve">DECaLS : Possible Matches = 0 (within +/- 3&quot;)  P(LAE)/P(OII): </text>
<text x="554.60" y="498.80" font-size="12.1" font-family="'Liberation Sans', sans-serif" fill="#000" textLength="34.64" lengthAdjust="spacingAndGlyphs" xml:space="preserve">0.026</text>
<text x="595.70" y="493.40" font-size="8.8" font-family="'Liberation Sans', sans-serif" fill="#000" textLength="25.19" lengthAdjust="spacingAndGlyphs" xml:space="preserve">0.086</text>
<text x="595.70" y="502.00" font-size="8.8" font-family="'Liberation Sans', sans-serif" fill="#000" textLength="25.19" lengthAdjust="spacingAndGlyphs" xml:space="preserve">0.006</text>
<text x="630.40" y="498.80" font-size="13.0" font-family="'Liberation Mono', monospace" fill="#000" stroke="#000" stroke-width="0.2" xml:space="preserve">(r)</text>
<text x="143.70" y="525.80" font-size="12.8" font-family="'Liberation Sans', sans-serif" fill="#000" text-anchor="middle" textLength="91.83" lengthAdjust="spacingAndGlyphs" xml:space="preserve">Fiber Positions</text>
<g clip-path="url(#pc0)">
<g shape-rendering="crispEdges"><rect x="69.5" y="677.1" width="4.0" height="4.0" fill="rgb(240,240,240)"/><rect x="73.2" y="677.1" width="4.4" height="4.0" fill="rgb(234,234,234)"/><rect x="77.2" y="677.1" width="4.4" height="4.0" fill="rgb(225,225,225)"/><rect x="81.2" y="677.1" width="4.4" height="4.0" fill="rgb(210,210,210)"/><rect x="85.3" y="677.1" width="4.4" height="4.0" fill="rgb(186,186,186)"/><rect x="89.3" y="677.1" width="4.4" height="4.0" fill="rgb(150,150,150)"/><rect x="93.3" y="677.1" width="4.4" height="4.0" fill="rgb(93,93,93)"/><rect x="97.4" y="677.1" width="4.4" height="4.0" fill="rgb(3,3,3)"/><rect x="101.4" y="677.1" width="64.8" height="4.0" fill="rgb(0,0,0)"/><rect x="165.9" y="677.1" width="8.4" height="4.0" fill="rgb(234,234,234)"/><rect x="173.9" y="677.1" width="4.4" height="4.0" fill="rgb(63,63,63)"/><rect x="178.0" y="677.1" width="4.4" height="4.0" fill="rgb(144,144,144)"/><rect x="182.0" y="677.1" width="4.4" height="4.0" fill="rgb(201,201,201)"/><rect x="186.0" y="677.1" width="4.4" height="4.0" fill="rgb(228,228,228)"/><rect x="190.0" y="677.1" width="4.4" height="4.0" fill="rgb(240,240,240)"/><rect x="194.1" y="677.1" width="4.4" height="4.0" fill="rgb(246,246,246)"/><rect x="198.1" y="677.1" width="20.1" height="4.0" fill="rgb(249,249,249)"/><rect x="69.5" y="673.1" width="4.0" height="4.4" fill="rgb(240,240,240)"/><rect x="73.2" y="673.1" width="4.4" height="4.4" fill="rgb(234,234,234)"/><rect x="77.2" y="673.1" width="4.4" height="4.4" fill="rgb(225,225,225)"/><rect x="81.2" y="673.1" width="4.4" height="4.4" fill="rgb(210,210,210)"/><rect x="85.3" y="673.1" width="4.4" height="4.4" fill="rgb(186,186,186)"/><rect x="89.3" y="673.1" width="4.4" height="4.4" fill="rgb(150,150,150)"/><rect x="93.3" y="673.1" width="4.4" height="4.4" fill="rgb(96,96,96)"/><rect x="97.4" y="673.1" width="4.4" height="4.4" fill="rgb(6,6,6)"/><rect x="101.4" y="673.1" width="72.9" height="4.4" fill="rgb(0,0,0)"/><rect x="173.9" y="673.1" width="4.4" height="4.4" fill="rgb(33,33,33)"/><rect x="178.0" y="673.1" width="4.4" height="4.4" fill="rgb(153,153,153)"/><rect x="182.0" y="673.1" width="4.4" height="4.4" fill="rgb(207,207,207)"/><rect x="186.0" y="673.1" width="4.4" height="4.4" fill="rgb(234,234,234)"/><rect x="190.0" y="673.1" width="4.4" height="4.4" fill="rgb(243,243,243)"/><rect x="194.1" y="673.1" width="24.1" height="4.4" fill="rgb(249,249,249)"/><rect x="69.5" y="669.1" width="4.0" height="4.4" fill="rgb(240,240,240)"/><rect x="73.2" y="669.1" width="4.4" height="4.4" fill="rgb(234,234,234)"/><rect x="77.2" y="669.1" width="4.4" height="4.4" fill="rgb(225,225,225)"/><rect x="81.2" y="669.1" width="4.4" height="4.4" fill="rgb(210,210,210)"/><rect x="85.3" y="669.1" width="4.4" height="4.4" fill="rgb(186,186,186)"/><rect x="89.3" y="669.1" width="4.4" height="4.4" fill="rgb(153,153,153)"/><rect x="93.3" y="669.1" width="4.4" height="4.4" fill="rgb(96,96,96)"/><rect x="97.4" y="669.1" width="4.4" height="4.4" fill="rgb(12,12,12)"/><rect x="101.4" y="669.1" width="72.9" height="4.4" fill="rgb(0,0,0)"/><rect x="173.9" y="669.1" width="4.4" height="4.4" fill="rgb(39,39,39)"/><rect x="178.0" y="669.1" width="4.4" height="4.4" fill="rgb(168,168,168)"/><rect x="182.0" y="669.1" width="4.4" height="4.4" fill="rgb(219,219,219)"/><rect x="186.0" y="669.1" width="4.4" height="4.4" fill="rgb(240,240,240)"/><rect x="190.0" y="669.1" width="4.4" height="4.4" fill="rgb(246,246,246)"/><rect x="194.1" y="669.1" width="24.1" height="4.4" fill="rgb(249,249,249)"/><rect x="69.5" y="665.0" width="4.0" height="4.4" fill="rgb(240,240,240)"/><rect x="73.2" y="665.0" width="4.4" height="4.4" fill="rgb(234,234,234)"/><rect x="77.2" y="665.0" width="4.4" height="4.4" fill="rgb(222,222,222)"/><rect x="81.2" y="665.0" width="4.4" height="4.4" fill="rgb(210,210,210)"/><rect x="85.3" y="665.0" width="4.4" height="4.4" fill="rgb(186,186,186)"/><rect x="89.3" y="665.0" width="4.4" height="4.4" fill="rgb(153,153,153)"/><rect x="93.3" y="665.0" width="4.4" height="4.4" fill="rgb(99,99,99)"/><rect x="97.4" y="665.0" width="4.4" height="4.4" fill="rgb(15,15,15)"/><rect x="101.4" y="665.0" width="72.9" height="4.4" fill="rgb(0,0,0)"/><rect x="173.9" y="665.0" width="4.4" height="4.4" fill="rgb(48,48,48)"/><rect x="178.0" y="665.0" width="4.4" height="4.4" fill="rgb(180,180,180)"/><rect x="182.0" y="665.0" width="4.4" height="4.4" fill="rgb(231,231,231)"/><rect x="186.0" y="665.0" width="4.4" height="4.4" fill="rgb(243,243,243)"/><rect x="190.0" y="665.0" width="28.2" height="4.4" fill="rgb(249,249,249)"/><rect x="69.5" y="661.0" width="4.0" height="4.4" fill="rgb(240,240,240)"/><rect x="73.2" y="661.0" width="4.4" height="4.4" fill="rgb(234,234,234)"/><rect x="77.2" y="661.0" width="4.4" height="4.4" fill="rgb(222,222,222)"/><rect x="81.2" y="661.0" width="4.4" height="4.4" fill="rgb(210,210,210)"/><rect x="85.3" y="661.0" width="4.4" height="4.4" fill="rgb(186,186,186)"/><rect x="89.3" y="661.0" width="4.4" height="4.4" fill="rgb(153,153,153)"/><rect x="93.3" y="661.0" width="4.4" height="4.4" fill="rgb(99,99,99)"/><rect x="97.4" y="661.0" width="4.4" height="4.4" fill="rgb(18,18,18)"/><rect x="101.4" y="661.0" width="72.9" height="4.4" fill="rgb(0,0,0)"/><rect x="173.9" y="661.0" width="4.4" height="4.4" fill="rgb(84,84,84)"/><rect x="178.0" y="661.0" width="4.4" height="4.4" fill="rgb(207,207,207)"/><rect x="182.0" y="661.0" width="4.4" height="4.4" fill="rgb(240,240,240)"/><rect x="186.0" y="661.0" width="32.2" height="4.4" fill="rgb(249,249,249)"/><rect x="69.5" y="657.0" width="4.0" height="4.4" fill="rgb(240,240,240)"/><rect x="73.2" y="657.0" width="4.4" height="4.4" fill="rgb(234,234,234)"/><rect x="77.2" y="657.0" width="4.4" height="4.4" fill="rgb(225,225,225)"/><rect x="81.2" y="657.0" width="4.4" height="4.4" fill="rgb(210,210,210)"/><rect x="85.3" y="657.0" width="4.4" height="4.4" fill="rgb(189,189,189)"/><rect x="89.3" y="657.0" width="4.4" height="4.4" fill="rgb(153,153,153)"/><rect x="93.3" y="657.0" width="4.4" height="4.4" fill="rgb(102,102,102)"/><rect x="97.4" y="657.0" width="4.4" height="4.4" fill="rgb(27,27,27)"/><rect x="101.4" y="657.0" width="64.8" height="4.4" fill="rgb(0,0,0)"/><rect x="165.9" y="657.0" width="4.4" height="4.4" fill="rgb(42,42,42)"/><rect x="169.9" y="657.0" width="4.4" height="4.4" fill="rgb(87,87,87)"/><rect x="173.9" y="657.0" width="4.4" height="4.4" fill="rgb(120,120,120)"/><rect x="178.0" y="657.0" width="4.4" height="4.4" fill="rgb(153,153,153)"/><rect x="182.0" y="657.0" width="4.4" height="4.4" fill="rgb(189,189,189)"/><rect x="186.0" y="657.0" width="4.4" height="4.4" fill="rgb(213,213,213)"/><rect x="190.0" y="657.0" width="4.4" height="4.4" fill="rgb(228,228,228)"/><rect x="194.1" y="657.0" width="4.4" height="4.4" fill="rgb(237,237,237)"/><rect x="198.1" y="657.0" width="4.4" height="4.4" fill="rgb(243,243,243)"/><rect x="202.1" y="657.0" width="8.4" height="4.4" fill="rgb(246,246,246)"/><rect x="210.2" y="657.0" width="8.0" height="4.4" fill="rgb(249,249,249)"/><rect x="69.5" y="652.9" width="4.0" height="4.4" fill="rgb(240,240,240)"/><rect x="73.2" y="652.9" width="4.4" height="4.4" fill="rgb(234,234,234)"/><rect x="77.2" y="652.9" width="4.4" height="4.4" fill="rgb(225,225,225)"/><rect x="81.2" y="652.9" width="4.4" height="4.4" fill="rgb(213,213,213)"/><rect x="85.3" y="652.9" width="4.4" height="4.4" fill="rgb(195,195,195)"/><rect x="89.3" y="652.9" width="4.4" height="4.4" fill="rgb(165,165,165)"/><rect x="93.3" y="652.9" width="4.4" height="4.4" fill="rgb(123,123,123)"/><rect x="97.4" y="652.9" width="4.4" height="4.4" fill="rgb(57,57,57)"/><rect x="101.4" y="652.9" width="56.8" height="4.4" fill="rgb(0,0,0)"/><rect x="157.8" y="652.9" width="4.4" height="4.4" fill="rgb(9,9,9)"/><rect x="161.8" y="652.9" width="4.4" height="4.4" fill="rgb(72,72,72)"/><rect x="165.9" y="652.9" width="4.4" height="4.4" fill="rgb(120,120,120)"/><rect x="169.9" y="652.9" width="4.4" height="4.4" fill="rgb(153,153,153)"/><rect x="173.9" y="652.9" width="4.4" height="4.4" fill="rgb(171,171,171)"/><rect x="178.0" y="652.9" width="4.4" height="4.4" fill="rgb(189,189,189)"/><rect x="182.0" y="652.9" width="4.4" height="4.4" fill="rgb(207,207,207)"/><rect x="186.0" y="652.9" width="4.4" height="4.4" fill="rgb(222,222,222)"/><rect x="190.0" y="652.9" width="4.4" height="4.4" fill="rgb(231,231,231)"/><rect x="194.1" y="652.9" width="4.4" height="4.4" fill="rgb(240,240,240)"/><rect x="198.1" y="652.9" width="4.4" height="4.4" fill="rgb(243,243,243)"/><rect x="202.1" y="652.9" width="4.4" height="4.4" fill="rgb(246,246,246)"/><rect x="206.2" y="652.9" width="12.0" height="4.4" fill="rgb(249,249,249)"/><rect x="69.5" y="648.9" width="4.0" height="4.4" fill="rgb(240,240,240)"/><rect x="73.2" y="648.9" width="4.4" height="4.4" fill="rgb(237,237,237)"/><rect x="77.2" y="648.9" width="4.4" height="4.4" fill="rgb(228,228,228)"/><rect x="81.2" y="648.9" width="4.4" height="4.4" fill="rgb(219,219,219)"/><rect x="85.3" y="648.9" width="4.4" height="4.4" fill="rgb(204,204,204)"/><rect x="89.3" y="648.9" width="4.4" height="4.4" fill="rgb(177,177,177)"/><rect x="93.3" y="648.9" width="4.4" height="4.4" fill="rgb(141,141,141)"/><rect x="97.4" y="648.9" width="4.4" height="4.4" fill="rgb(84,84,84)"/><rect x="101.4" y="648.9" width="56.8" height="4.4" fill="rgb(0,0,0)"/><rect x="157.8" y="648.9" width="4.4" height="4.4" fill="rgb(39,39,39)"/><rect x="161.8" y="648.9" width="4.4" height="4.4" fill="rgb(129,129,129)"/><rect x="165.9" y="648.9" width="4.4" height="4.4" fill="rgb(168,168,168)"/><rect x="169.9" y="648.9" width="4.4" height="4.4" fill="rgb(189,189,189)"/><rect x="173.9" y="648.9" width="4.4" height="4.4" fill="rgb(204,204,204)"/><rect x="178.0" y="648.9" width="4.4" height="4.4" fill="rgb(213,213,213)"/><rect x="182.0" y="648.9" width="4.4" height="4.4" fill="rgb(222,222,222)"/><rect x="186.0" y="648.9" width="4.4" height="4.4" fill="rgb(231,231,231)"/><rect x="190.0" y="648.9" width="4.4" height="4.4" fill="rgb(237,237,237)"/><rect x="194.1" y="648.9" width="4.4" height="4.4" fill="rgb(243,243,243)"/><rect x="198.1" y="648.9" width="8.4" height="4.4" fill="rgb(246,246,246)"/><rect x="206.2" y="648.9" width="12.0" height="4.4" fill="rgb(249,249,249)"/><rect x="69.5" y="644.9" width="4.0" height="4.4" fill="rgb(243,243,243)"/><rect x="73.2" y="644.9" width="4.4" height="4.4" fill="rgb(237,237,237)"/><rect x="77.2" y="644.9" width="4.4" height="4.4" fill="rgb(234,234,234)"/><rect x="81.2" y="644.9" width="4.4" height="4.4" fill="rgb(225,225,225)"/><rect x="85.3" y="644.9" width="4.4" height="4.4" fill="rgb(210,210,210)"/><rect x="89.3" y="644.9" width="4.4" height="4.4" fill="rgb(189,189,189)"/><rect x="93.3" y="644.9" width="4.4" height="4.4" fill="rgb(156,156,156)"/><rect x="97.4" y="644.9" width="4.4" height="4.4" fill="rgb(108,108,108)"/><rect x="101.4" y="644.9" width="4.4" height="4.4" fill="rgb(36,36,36)"/><rect x="105.4" y="644.9" width="52.7" height="4.4" fill="rgb(0,0,0)"/><rect x="157.8" y="644.9" width="4.4" height="4.4" fill="rgb(63,63,63)"/><rect x="161.8" y="644.9" width="4.4" height="4.4" fill="rgb(141,141,141)"/><rect x="165.9" y="644.9" width="4.4" height="4.4" fill="rgb(186,186,186)"/><rect x="169.9" y="644.9" width="4.4" height="4.4" fill="rgb(213,213,213)"/><rect x="173.9" y="644.9" width="4.4" height="4.4" fill="rgb(222,222,222)"/><rect x="178.0" y="644.9" width="4.4" height="4.4" fill="rgb(228,228,228)"/><rect x="182.0" y="644.9" width="4.4" height="4.4" fill="rgb(231,231,231)"/><rect x="186.0" y="644.9" width="4.4" height="4.4" fill="rgb(237,237,237)"/><rect x="190.0" y="644.9" width="4.4" height="4.4" fill="rgb(240,240,240)"/><rect x="194.1" y="644.9" width="4.4" height="4.4" fill="rgb(243,243,243)"/><rect x="198.1" y="644.9" width="4.4" height="4.4" fill="rgb(246,246,246)"/><rect x="202.1" y="644.9" width="16.1" height="4.4" fill="rgb(249,249,249)"/><rect x="69.5" y="640.9" width="4.0" height="4.4" fill="rgb(243,243,243)"/><rect x="73.2" y="640.9" width="4.4" height="4.4" fill="rgb(240,240,240)"/><rect x="77.2" y="640.9" width="4.4" height="4.4" fill="rgb(234,234,234)"/><rect x="81.2" y="640.9" width="4.4" height="4.4" fill="rgb(228,228,228)"/><rect x="85.3" y="640.9" width="4.4" height="4.4" fill="rgb(216,216,216)"/><rect x="89.3" y="640.9" width="4.4" height="4.4" fill="rgb(198,198,198)"/><rect x="93.3" y="640.9" width="4.4" height="4.4" fill="rgb(174,174,174)"/><rect x="97.4" y="640.9" width="4.4" height="4.4" fill="rgb(138,138,138)"/><rect x="101.4" y="640.9" width="4.4" height="4.4" fill="rgb(84,84,84)"/><rect x="105.4" y="640.9" width="4.4" height="4.4" fill="rgb(6,6,6)"/><rect x="109.4" y="640.9" width="44.7" height="4.4" fill="rgb(0,0,0)"/><rect x="153.8" y="640.9" width="4.4" height="4.4" fill="rgb(15,15,15)"/><rect x="157.8" y="640.9" width="4.4" height="4.4" fill="rgb(102,102,102)"/><rect x="161.8" y="640.9" width="4.4" height="4.4" fill="rgb(156,156,156)"/><rect x="165.9" y="640.9" width="4.4" height="4.4" fill="rgb(195,195,195)"/><rect x="169.9" y="640.9" width="4.4" height="4.4" fill="rgb(219,219,219)"/><rect x="173.9" y="640.9" width="4.4" height="4.4" fill="rgb(231,231,231)"/><rect x="178.0" y="640.9" width="4.4" height="4.4" fill="rgb(237,237,237)"/><rect x="182.0" y="640.9" width="4.4" height="4.4" fill="rgb(240,240,240)"/><rect x="186.0" y="640.9" width="8.4" height="4.4" fill="rgb(243,243,243)"/><rect x="194.1" y="640.9" width="8.4" height="4.4" fill="rgb(246,246,246)"/><rect x="202.1" y="640.9" width="16.1" height="4.4" fill="rgb(249,249,249)"/><rect x="69.5" y="636.8" width="4.0" height="4.4" fill="rgb(246,246,246)"/><rect x="73.2" y="636.8" width="4.4" height="4.4" fill="rgb(243,243,243)"/><rect x="77.2" y="636.8" width="4.4" height="4.4" fill="rgb(237,237,237)"/><rect x="81.2" y="636.8" width="4.4" height="4.4" fill="rgb(231,231,231)"/><rect x="85.3" y="636.8" width="4.4" height="4.4" fill="rgb(222,222,222)"/><rect x="89.3" y="636.8" width="4.4" height="4.4" fill="rgb(210,210,210)"/><rect x="93.3" y="636.8" width="4.4" height="4.4" fill="rgb(192,192,192)"/><rect x="97.4" y="636.8" width="4.4" height="4.4" fill="rgb(162,162,162)"/><rect x="101.4" y="636.8" width="4.4" height="4.4" fill="rgb(123,123,123)"/><rect x="105.4" y="636.8" width="4.4" height="4.4" fill="rgb(60,60,60)"/><rect x="109.4" y="636.8" width="44.7" height="4.4" fill="rgb(0,0,0)"/><rect x="153.8" y="636.8" width="4.4" height="4.4" fill="rgb(66,66,66)"/><rect x="157.8" y="636.8" width="4.4" height="4.4" fill="rgb(135,135,135)"/><rect x="161.8" y="636.8" width="4.4" height="4.4" fill="rgb(177,177,177)"/><rect x="165.9" y="636.8" width="4.4" height="4.4" fill="rgb(204,204,204)"/><rect x="169.9" y="636.8" width="4.4" height="4.4" fill="rgb(222,222,222)"/><rect x="173.9" y="636.8" width="4.4" height="4.4" fill="rgb(234,234,234)"/><rect x="178.0" y="636.8" width="4.4" height="4.4" fill="rgb(240,240,240)"/><rect x="182.0" y="636.8" width="4.4" height="4.4" fill="rgb(243,243,243)"/><rect x="186.0" y="636.8" width="12.4" height="4.4" fill="rgb(246,246,246)"/><rect x="198.1" y="636.8" width="20.1" height="4.4" fill="rgb(249,249,249)"/><rect x="69.5" y="632.8" width="4.0" height="4.4" fill="rgb(246,246,246)"/><rect x="73.2" y="632.8" width="4.4" height="4.4" fill="rgb(243,243,243)"/><rect x="77.2" y="632.8" width="4.4" height="4.4" fill="rgb(240,240,240)"/><rect x="81.2" y="632.8" width="4.4" height="4.4" fill="rgb(234,234,234)"/><rect x="85.3" y="632.8" width="4.4" height="4.4" fill="rgb(228,228,228)"/><rect x="89.3" y="632.8" width="4.4" height="4.4" fill="rgb(219,219,219)"/><rect x="93.3" y="632.8" width="4.4" height="4.4" fill="rgb(204,204,204)"/><rect x="97.4" y="632.8" width="4.4" height="4.4" fill="rgb(183,183,183)"/><rect x="101.4" y="632.8" width="4.4" height="4.4" fill="rgb(153,153,153)"/><rect x="105.4" y="632.8" width="4.4" height="4.4" fill="rgb(105,105,105)"/><rect x="109.4" y="632.8" width="12.4" height="4.4" fill="rgb(60,60,60)"/><rect x="121.5" y="632.8" width="32.6" height="4.4" fill="rgb(63,63,63)"/><rect x="153.8" y="632.8" width="4.4" height="4.4" fill="rgb(108,108,108)"/><rect x="157.8" y="632.8" width="4.4" height="4.4" fill="rgb(159,159,159)"/><rect x="161.8" y="632.8" width="4.4" height="4.4" fill="rgb(192,192,192)"/><rect x="165.9" y="632.8" width="4.4" height="4.4" fill="rgb(213,213,213)"/><rect x="169.9" y="632.8" width="4.4" height="4.4" fill="rgb(228,228,228)"/><rect x="173.9" y="632.8" width="4.4" height="4.4" fill="rgb(237,237,237)"/><rect x="178.0" y="632.8" width="4.4" height="4.4" fill="rgb(243,243,243)"/><rect x="182.0" y="632.8" width="8.4" height="4.4" fill="rgb(246,246,246)"/><rect x="190.0" y="632.8" width="28.2" height="4.4" fill="rgb(249,249,249)"/><rect x="69.5" y="628.8" width="8.0" height="4.4" fill="rgb(246,246,246)"/><rect x="77.2" y="628.8" width="4.4" height="4.4" fill="rgb(243,243,243)"/><rect x="81.2" y="628.8" width="4.4" height="4.4" fill="rgb(240,240,240)"/><rect x="85.3" y="628.8" width="4.4" height="4.4" fill="rgb(234,234,234)"/><rect x="89.3" y="628.8" width="4.4" height="4.4" fill="rgb(225,225,225)"/><rect x="93.3" y="628.8" width="4.4" height="4.4" fill="rgb(216,216,216)"/><rect x="97.4" y="628.8" width="4.4" height="4.4" fill="rgb(201,201,201)"/><rect x="101.4" y="628.8" width="4.4" height="4.4" fill="rgb(177,177,177)"/><rect x="105.4" y="628.8" width="4.4" height="4.4" fill="rgb(147,147,147)"/><rect x="109.4" y="628.8" width="12.4" height="4.4" fill="rgb(135,135,135)"/><rect x="121.5" y="628.8" width="32.6" height="4.4" fill="rgb(138,138,138)"/><rect x="153.8" y="628.8" width="4.4" height="4.4" fill="rgb(153,153,153)"/><rect x="157.8" y="628.8" width="4.4" height="4.4" fill="rgb(180,180,180)"/><rect x="161.8" y="628.8" width="4.4" height="4.4" fill="rgb(204,204,204)"/><rect x="165.9" y="628.8" width="4.4" height="4.4" fill="rgb(222,222,222)"/><rect x="169.9" y="628.8" width="4.4" height="4.4" fill="rgb(231,231,231)"/><rect x="173.9" y="628.8" width="4.4" height="4.4" fill="rgb(240,240,240)"/><rect x="178.0" y="628.8" width="4.4" height="4.4" fill="rgb(243,243,243)"/><rect x="182.0" y="628.8" width="4.4" height="4.4" fill="rgb(246,246,246)"/><rect x="186.0" y="628.8" width="32.2" height="4.4" fill="rgb(249,249,249)"/><rect x="69.5" y="624.7" width="8.0" height="4.4" fill="rgb(246,246,246)"/><rect x="77.2" y="624.7" width="8.4" height="4.4" fill="rgb(243,243,243)"/><rect x="85.3" y="624.7" width="4.4" height="4.4" fill="rgb(237,237,237)"/><rect x="89.3" y="624.7" width="4.4" height="4.4" fill="rgb(231,231,231)"/><rect x="93.3" y="624.7" width="4.4" height="4.4" fill="rgb(225,225,225)"/><rect x="97.4" y="624.7" width="4.4" height="4.4" fill="rgb(213,213,213)"/><rect x="101.4" y="624.7" width="4.4" height="4.4" fill="rgb(198,198,198)"/><rect x="105.4" y="624.7" width="4.4" height="4.4" fill="rgb(186,186,186)"/><rect x="109.4" y="624.7" width="8.4" height="4.4" fill="rgb(180,180,180)"/><rect x="117.5" y="624.7" width="36.6" height="4.4" fill="rgb(183,183,183)"/><rect x="153.8" y="624.7" width="4.4" height="4.4" fill="rgb(189,189,189)"/><rect x="157.8" y="624.7" width="4.4" height="4.4" fill="rgb(204,204,204)"/><rect x="161.8" y="624.7" width="4.4" height="4.4" fill="rgb(216,216,216)"/><rect x="165.9" y="624.7" width="4.4" height="4.4" fill="rgb(228,228,228)"/><rect x="169.9" y="624.7" width="4.4" height="4.4" fill="rgb(237,237,237)"/><rect x="173.9" y="624.7" width="4.4" height="4.4" fill="rgb(240,240,240)"/><rect x="178.0" y="624.7" width="4.4" height="4.4" fill="rgb(243,243,243)"/><rect x="182.0" y="624.7" width="4.4" height="4.4" fill="rgb(246,246,246)"/><rect x="186.0" y="624.7" width="32.2" height="4.4" fill="rgb(249,249,249)"/><rect x="69.5" y="620.7" width="4.0" height="4.4" fill="rgb(249,249,249)"/><rect x="73.2" y="620.7" width="8.4" height="4.4" fill="rgb(246,246,246)"/><rect x="81.2" y="620.7" width="4.4" height="4.4" fill="rgb(243,243,243)"/><rect x="85.3" y="620.7" width="4.4" height="4.4" fill="rgb(240,240,240)"/><rect x="89.3" y="620.7" width="4.4" height="4.4" fill="rgb(237,237,237)"/><rect x="93.3" y="620.7" width="4.4" height="4.4" fill="rgb(231,231,231)"/><rect x="97.4" y="620.7" width="4.4" height="4.4" fill="rgb(225,225,225)"/><rect x="101.4" y="620.7" width="4.4" height="4.4" fill="rgb(216,216,216)"/><rect x="105.4" y="620.7" width="4.4" height="4.4" fill="rgb(210,210,210)"/><rect x="109.4" y="620.7" width="4.4" height="4.4" fill="rgb(207,207,207)"/><rect x="113.5" y="620.7" width="40.6" height="4.4" fill="rgb(210,210,210)"/><rect x="153.8" y="620.7" width="4.4" height="4.4" fill="rgb(213,213,213)"/><rect x="157.8" y="620.7" width="4.4" height="4.4" fill="rgb(219,219,219)"/><rect x="161.8" y="620.7" width="4.4" height="4.4" fill="rgb(228,228,228)"/><rect x="165.9" y="620.7" width="4.4" height="4.4" fill="rgb(234,234,234)"/><rect x="169.9" y="620.7" width="4.4" height="4.4" fill="rgb(240,240,240)"/><rect x="173.9" y="620.7" width="4.4" height="4.4" fill="rgb(243,243,243)"/><rect x="178.0" y="620.7" width="8.4" height="4.4" fill="rgb(246,246,246)"/><rect x="186.0" y="620.7" width="32.2" height="4.4" fill="rgb(249,249,249)"/><rect x="69.5" y="616.7" width="8.0" height="4.4" fill="rgb(249,249,249)"/><rect x="77.2" y="616.7" width="8.4" height="4.4" fill="rgb(246,246,246)"/><rect x="85.3" y="616.7" width="4.4" height="4.4" fill="rgb(243,243,243)"/><rect x="89.3" y="616.7" width="4.4" height="4.4" fill="rgb(240,240,240)"/><rect x="93.3" y="616.7" width="4.4" height="4.4" fill="rgb(237,237,237)"/><rect x="97.4" y="616.7" width="4.4" height="4.4" fill="rgb(234,234,234)"/><rect x="101.4" y="616.7" width="4.4" height="4.4" fill="rgb(228,228,228)"/><rect x="105.4" y="616.7" width="16.5" height="4.4" fill="rgb(225,225,225)"/><rect x="121.5" y="616.7" width="36.6" height="4.4" fill="rgb(228,228,228)"/><rect x="157.8" y="616.7" width="4.4" height="4.4" fill="rgb(231,231,231)"/><rect x="161.8" y="616.7" width="4.4" height="4.4" fill="rgb(234,234,234)"/><rect x="165.9" y="616.7" width="4.4" height="4.4" fill="rgb(240,240,240)"/><rect x="169.9" y="616.7" width="4.4" height="4.4" fill="rgb(243,243,243)"/><rect x="173.9" y="616.7" width="8.4" height="4.4" fill="rgb(246,246,246)"/><rect x="182.0" y="616.7" width="36.2" height="4.4" fill="rgb(249,249,249)"/><rect x="69.5" y="612.6" width="12.0" height="4.4" fill="rgb(249,249,249)"/><rect x="81.2" y="612.6" width="8.4" height="4.4" fill="rgb(246,246,246)"/><rect x="89.3" y="612.6" width="4.4" height="4.4" fill="rgb(243,243,243)"/><rect x="93.3" y="612.6" width="8.4" height="4.4" fill="rgb(240,240,240)"/><rect x="101.4" y="612.6" width="4.4" height="4.4" fill="rgb(237,237,237)"/><rect x="105.4" y="612.6" width="12.4" height="4.4" fill="rgb(234,234,234)"/><rect x="117.5" y="612.6" width="44.7" height="4.4" fill="rgb(237,237,237)"/><rect x="161.8" y="612.6" width="4.4" height="4.4" fill="rgb(240,240,240)"/><rect x="165.9" y="612.6" width="4.4" height="4.4" fill="rgb(243,243,243)"/><rect x="169.9" y="612.6" width="8.4" height="4.4" fill="rgb(246,246,246)"/><rect x="178.0" y="612.6" width="40.2" height="4.4" fill="rgb(249,249,249)"/><rect x="69.5" y="608.6" width="16.1" height="4.4" fill="rgb(249,249,249)"/><rect x="85.3" y="608.6" width="8.4" height="4.4" fill="rgb(246,246,246)"/><rect x="93.3" y="608.6" width="12.4" height="4.4" fill="rgb(243,243,243)"/><rect x="105.4" y="608.6" width="12.4" height="4.4" fill="rgb(240,240,240)"/><rect x="117.5" y="608.6" width="48.7" height="4.4" fill="rgb(243,243,243)"/><rect x="165.9" y="608.6" width="12.4" height="4.4" fill="rgb(246,246,246)"/><rect x="178.0" y="608.6" width="40.2" height="4.4" fill="rgb(249,249,249)"/><rect x="69.5" y="604.6" width="20.1" height="4.4" fill="rgb(249,249,249)"/><rect x="89.3" y="604.6" width="80.9" height="4.4" fill="rgb(246,246,246)"/><rect x="169.9" y="604.6" width="48.3" height="4.4" fill="rgb(249,249,249)"/><rect x="69.5" y="600.6" width="28.2" height="4.4" fill="rgb(249,249,249)"/><rect x="97.4" y="600.6" width="64.8" height="4.4" fill="rgb(246,246,246)"/><rect x="161.8" y="600.6" width="56.4" height="4.4" fill="rgb(249,249,249)"/><rect x="69.5" y="596.5" width="148.7" height="4.4" fill="rgb(249,249,249)"/><rect x="69.5" y="592.5" width="148.7" height="4.4" fill="rgb(249,249,249)"/><rect x="69.5" y="588.5" width="148.7" height="4.4" fill="rgb(249,249,249)"/><rect x="69.5" y="584.4" width="148.7" height="4.4" fill="rgb(249,249,249)"/><rect x="69.5" y="580.4" width="148.7" height="4.4" fill="rgb(249,249,249)"/><rect x="69.5" y="576.4" width="148.7" height="4.4" fill="rgb(249,249,249)"/><rect x="69.5" y="572.3" width="148.7" height="4.4" fill="rgb(249,249,249)"/><rect x="69.5" y="568.3" width="148.7" height="4.4" fill="rgb(249,249,249)"/><rect x="69.5" y="564.3" width="148.7" height="4.4" fill="rgb(249,249,249)"/><rect x="69.5" y="560.3" width="148.7" height="4.4" fill="rgb(249,249,249)"/><rect x="69.5" y="556.2" width="148.7" height="4.4" fill="rgb(249,249,249)"/><rect x="69.5" y="552.2" width="148.7" height="4.4" fill="rgb(249,249,249)"/><rect x="69.5" y="548.2" width="148.7" height="4.4" fill="rgb(249,249,249)"/><rect x="69.5" y="544.1" width="148.7" height="4.4" fill="rgb(249,249,249)"/><rect x="69.5" y="540.1" width="148.7" height="4.4" fill="rgb(249,249,249)"/><rect x="69.5" y="536.1" width="148.7" height="4.4" fill="rgb(249,249,249)"/><rect x="69.5" y="532.4" width="148.7" height="4.0" fill="rgb(249,249,249)"/></g>
<circle cx="131.77" cy="558.08" r="12.17" fill="none" stroke="#808080" stroke-width="1.2"/>
<circle cx="155.63" cy="555.34" r="12.17" fill="none" stroke="#808080" stroke-width="1.2"/>
<circle cx="97.76" cy="582.26" r="12.17" fill="none" stroke="#808080" stroke-width="1.2"/>
<circle cx="122.10" cy="579.84" r="12.17" fill="none" stroke="#808080" stroke-width="1.2"/>
<circle cx="146.28" cy="576.46" r="12.17" fill="none" stroke="#808080" stroke-width="1.2"/>
<circle cx="169.33" cy="573.55" r="12.17" fill="none" stroke="#808080" stroke-width="1.2"/>
<circle cx="184.16" cy="593.06" r="12.17" fill="none" stroke="#808080" stroke-width="1.2"/>
<circle cx="89.05" cy="604.99" r="12.17" fill="none" stroke="#808080" stroke-width="1.2"/>
<circle cx="113.23" cy="601.60" r="12.17" fill="none" stroke="#808080" stroke-width="1.2"/>
<circle cx="160.30" cy="596.61" r="12.17" fill="none" stroke="#808080" stroke-width="1.2"/>
<circle cx="198.02" cy="612.56" r="12.17" fill="none" stroke="#808080" stroke-width="1.2"/>
<circle cx="103.24" cy="623.53" r="12.17" fill="none" stroke="#808080" stroke-width="1.2"/>
<circle cx="174.17" cy="615.63" r="12.17" fill="none" stroke="#808080" stroke-width="1.2"/>
<circle cx="189.32" cy="634.49" r="12.17" fill="none" stroke="#3a3a3a" stroke-width="1.2"/>
<circle cx="165.62" cy="637.07" r="12.17" fill="none" stroke="#3a3a3a" stroke-width="1.2"/>
<circle cx="118.71" cy="640.94" r="12.17" fill="none" stroke="#3a3a3a" stroke-width="1.2"/>
<circle cx="140.64" cy="639.00" r="12.17" fill="none" stroke="#3a3a3a" stroke-width="1.2"/>
<circle cx="156.76" cy="660.12" r="12.17" fill="none" stroke="#3a3a3a" stroke-width="1.2"/>
</g>
<rect x="69.55" y="532.45" width="148.30" height="148.30" fill="none" stroke="#222" stroke-width="1.1"/>
<rect x="95.34" y="558.24" width="96.72" height="96.72" fill="none" stroke="rgb(255,0,0)" stroke-width="1.3"/>
<circle cx="136.12" cy="599.02" r="12.17" fill="none" stroke="rgb(0,230,0)" stroke-width="1.6"/>
<circle cx="160.30" cy="596.61" r="12.17" fill="none" stroke="rgb(255,165,0)" stroke-width="1.6"/>
<circle cx="127.26" cy="621.91" r="12.17" fill="none" stroke="rgb(255,0,0)" stroke-width="1.6"/>
<circle cx="151.12" cy="618.05" r="12.17" fill="none" stroke="rgb(0,0,255)" stroke-width="1.6"/>
<path d="M140.80,606.60H146.60M143.70,603.70V609.50" stroke="rgb(255,0,0)" stroke-width="1.1"/>
<text x="143.70" y="548.33" font-size="10" font-family="'Liberation Sans', sans-serif" fill="rgb(255,0,0)" text-anchor="middle" textLength="7.48" lengthAdjust="spacingAndGlyphs" xml:space="preserve">N</text>
<text x="80.03" y="610.30" font-size="10" font-family="'Liberation Sans', sans-serif" fill="rgb(255,0,0)" text-anchor="middle" textLength="6.32" lengthAdjust="spacingAndGlyphs" xml:space="preserve">E</text>
<line x1="79.22" y1="680.75" x2="79.22" y2="684.25" stroke="#222" stroke-width="0.9"/>
<text x="79.22" y="696.20" font-size="10" font-family="'Liberation Sans', sans-serif" fill="#000" text-anchor="middle" textLength="14.74" lengthAdjust="spacingAndGlyphs" xml:space="preserve">−4</text>
<line x1="66.05" y1="671.08" x2="69.55" y2="671.08" stroke="#222" stroke-width="0.9"/>
<text x="61.95" y="675.08" font-size="10" font-family="'Liberation Sans', sans-serif" fill="#000" text-anchor="end" textLength="14.74" lengthAdjust="spacingAndGlyphs" xml:space="preserve">−4</text>
<line x1="111.46" y1="680.75" x2="111.46" y2="684.25" stroke="#222" stroke-width="0.9"/>
<text x="111.46" y="696.20" font-size="10" font-family="'Liberation Sans', sans-serif" fill="#000" text-anchor="middle" textLength="14.74" lengthAdjust="spacingAndGlyphs" xml:space="preserve">−2</text>
<line x1="66.05" y1="638.84" x2="69.55" y2="638.84" stroke="#222" stroke-width="0.9"/>
<text x="61.95" y="642.84" font-size="10" font-family="'Liberation Sans', sans-serif" fill="#000" text-anchor="end" textLength="14.74" lengthAdjust="spacingAndGlyphs" xml:space="preserve">−2</text>
<line x1="143.70" y1="680.75" x2="143.70" y2="684.25" stroke="#222" stroke-width="0.9"/>
<text x="143.70" y="696.20" font-size="10" font-family="'Liberation Sans', sans-serif" fill="#000" text-anchor="middle" textLength="6.36" lengthAdjust="spacingAndGlyphs" xml:space="preserve">0</text>
<line x1="66.05" y1="606.60" x2="69.55" y2="606.60" stroke="#222" stroke-width="0.9"/>
<text x="61.95" y="610.60" font-size="10" font-family="'Liberation Sans', sans-serif" fill="#000" text-anchor="end" textLength="6.36" lengthAdjust="spacingAndGlyphs" xml:space="preserve">0</text>
<line x1="175.94" y1="680.75" x2="175.94" y2="684.25" stroke="#222" stroke-width="0.9"/>
<text x="175.94" y="696.20" font-size="10" font-family="'Liberation Sans', sans-serif" fill="#000" text-anchor="middle" textLength="6.36" lengthAdjust="spacingAndGlyphs" xml:space="preserve">2</text>
<line x1="66.05" y1="574.36" x2="69.55" y2="574.36" stroke="#222" stroke-width="0.9"/>
<text x="61.95" y="578.36" font-size="10" font-family="'Liberation Sans', sans-serif" fill="#000" text-anchor="end" textLength="6.36" lengthAdjust="spacingAndGlyphs" xml:space="preserve">2</text>
<line x1="208.18" y1="680.75" x2="208.18" y2="684.25" stroke="#222" stroke-width="0.9"/>
<text x="208.18" y="696.20" font-size="10" font-family="'Liberation Sans', sans-serif" fill="#000" text-anchor="middle" textLength="6.36" lengthAdjust="spacingAndGlyphs" xml:space="preserve">4</text>
<line x1="66.05" y1="542.12" x2="69.55" y2="542.12" stroke="#222" stroke-width="0.9"/>
<text x="61.95" y="546.12" font-size="10" font-family="'Liberation Sans', sans-serif" fill="#000" text-anchor="end" textLength="6.36" lengthAdjust="spacingAndGlyphs" xml:space="preserve">4</text>
<text x="329.10" y="525.80" font-size="12.8" font-family="'Liberation Sans', sans-serif" fill="#000" text-anchor="middle" textLength="81.51" lengthAdjust="spacingAndGlyphs" xml:space="preserve">Lineflux Map</text>
<g clip-path="url(#pc1)">
<g shape-rendering="crispEdges"><rect x="254.9" y="679.1" width="2.0" height="2.0" fill="rgb(72,33,117)"/><rect x="256.6" y="679.1" width="60.8" height="2.0" fill="rgb(72,33,114)"/><rect x="317.0" y="679.1" width="4.4" height="2.0" fill="rgb(72,30,114)"/><rect x="321.0" y="679.1" width="60.8" height="2.0" fill="rgb(72,30,111)"/><rect x="381.5" y="679.1" width="8.4" height="2.0" fill="rgb(72,27,111)"/><rect x="389.6" y="679.1" width="14.1" height="2.0" fill="rgb(72,27,108)"/><rect x="254.9" y="675.1" width="2.0" height="4.4" fill="rgb(72,36,117)"/><rect x="256.6" y="675.1" width="4.4" height="4.4" fill="rgb(72,33,117)"/><rect x="260.6" y="675.1" width="60.8" height="4.4" fill="rgb(72,33,114)"/><rect x="321.0" y="675.1" width="4.4" height="4.4" fill="rgb(72,30,114)"/><rect x="325.1" y="675.1" width="60.8" height="4.4" fill="rgb(72,30,111)"/><rect x="385.5" y="675.1" width="8.4" height="4.4" fill="rgb(72,27,111)"/><rect x="393.6" y="675.1" width="10.0" height="4.4" fill="rgb(72,27,108)"/><rect x="254.9" y="671.1" width="6.0" height="4.4" fill="rgb(72,36,117)"/><rect x="260.6" y="671.1" width="4.4" height="4.4" fill="rgb(72,33,117)"/><rect x="264.6" y="671.1" width="60.8" height="4.4" fill="rgb(72,33,114)"/><rect x="325.1" y="671.1" width="4.4" height="4.4" fill="rgb(72,30,114)"/><rect x="329.1" y="671.1" width="60.8" height="4.4" fill="rgb(72,30,111)"/><rect x="389.6" y="671.1" width="8.4" height="4.4" fill="rgb(72,27,111)"/><rect x="397.6" y="671.1" width="6.0" height="4.4" fill="rgb(72,27,108)"/><rect x="254.9" y="667.1" width="10.0" height="4.4" fill="rgb(72,36,117)"/><rect x="264.6" y="667.1" width="4.4" height="4.4" fill="rgb(72,33,117)"/><rect x="268.7" y="667.1" width="60.8" height="4.4" fill="rgb(72,33,114)"/><rect x="329.1" y="667.1" width="4.4" height="4.4" fill="rgb(72,30,114)"/><rect x="333.1" y="667.1" width="60.8" height="4.4" fill="rgb(72,30,111)"/><rect x="393.6" y="667.1" width="8.4" height="4.4" fill="rgb(72,27,111)"/><rect x="401.6" y="667.1" width="2.0" height="4.4" fill="rgb(72,27,108)"/><rect x="254.9" y="663.0" width="14.1" height="4.4" fill="rgb(72,36,117)"/><rect x="268.7" y="663.0" width="4.4" height="4.4" fill="rgb(72,33,117)"/><rect x="272.7" y="663.0" width="60.8" height="4.4" fill="rgb(72,33,114)"/><rect x="333.1" y="663.0" width="4.4" height="4.4" fill="rgb(72,30,114)"/><rect x="337.2" y="663.0" width="60.8" height="4.4" fill="rgb(72,30,111)"/><rect x="397.6" y="663.0" width="6.0" height="4.4" fill="rgb(72,27,111)"/><rect x="254.9" y="659.0" width="18.1" height="4.4" fill="rgb(72,36,117)"/><rect x="272.7" y="659.0" width="4.4" height="4.4" fill="rgb(72,33,117)"/><rect x="276.7" y="659.0" width="60.8" height="4.4" fill="rgb(72,33,114)"/><rect x="337.2" y="659.0" width="4.4" height="4.4" fill="rgb(72,30,114)"/><rect x="341.2" y="659.0" width="60.8" height="4.4" fill="rgb(72,30,111)"/><rect x="401.6" y="659.0" width="2.0" height="4.4" fill="rgb(72,27,111)"/><rect x="254.9" y="655.0" width="22.1" height="4.4" fill="rgb(72,36,117)"/><rect x="276.7" y="655.0" width="4.4" height="4.4" fill="rgb(72,33,117)"/><rect x="280.7" y="655.0" width="60.8" height="4.4" fill="rgb(72,33,114)"/><rect x="341.2" y="655.0" width="4.4" height="4.4" fill="rgb(72,30,114)"/><rect x="345.2" y="655.0" width="58.4" height="4.4" fill="rgb(72,30,111)"/><rect x="254.9" y="650.9" width="26.1" height="4.4" fill="rgb(72,36,117)"/><rect x="280.7" y="650.9" width="4.4" height="4.4" fill="rgb(72,33,117)"/><rect x="284.8" y="650.9" width="60.8" height="4.4" fill="rgb(72,33,114)"/><rect x="345.2" y="650.9" width="4.4" height="4.4" fill="rgb(72,30,114)"/><rect x="349.2" y="650.9" width="54.4" height="4.4" fill="rgb(72,30,111)"/><rect x="254.9" y="646.9" width="30.2" height="4.4" fill="rgb(72,36,117)"/><rect x="284.8" y="646.9" width="4.4" height="4.4" fill="rgb(72,33,117)"/><rect x="288.8" y="646.9" width="60.8" height="4.4" fill="rgb(72,33,114)"/><rect x="349.2" y="646.9" width="4.4" height="4.4" fill="rgb(72,30,114)"/><rect x="353.3" y="646.9" width="50.3" height="4.4" fill="rgb(72,30,111)"/><rect x="254.9" y="642.9" width="34.2" height="4.4" fill="rgb(72,36,117)"/><rect x="288.8" y="642.9" width="4.4" height="4.4" fill="rgb(72,33,117)"/><rect x="292.8" y="642.9" width="60.8" height="4.4" fill="rgb(72,33,114)"/><rect x="353.3" y="642.9" width="4.4" height="4.4" fill="rgb(72,30,114)"/><rect x="357.3" y="642.9" width="46.3" height="4.4" fill="rgb(72,30,111)"/><rect x="254.9" y="638.8" width="38.2" height="4.4" fill="rgb(72,36,117)"/><rect x="292.8" y="638.8" width="4.4" height="4.4" fill="rgb(72,33,117)"/><rect x="296.9" y="638.8" width="60.8" height="4.4" fill="rgb(72,33,114)"/><rect x="357.3" y="638.8" width="4.4" height="4.4" fill="rgb(72,30,114)"/><rect x="361.3" y="638.8" width="42.3" height="4.4" fill="rgb(72,30,111)"/><rect x="254.9" y="634.8" width="42.3" height="4.4" fill="rgb(72,36,117)"/><rect x="296.9" y="634.8" width="4.4" height="4.4" fill="rgb(72,33,117)"/><rect x="300.9" y="634.8" width="60.8" height="4.4" fill="rgb(72,33,114)"/><rect x="361.3" y="634.8" width="4.4" height="4.4" fill="rgb(72,30,114)"/><rect x="365.4" y="634.8" width="38.2" height="4.4" fill="rgb(72,30,111)"/><rect x="254.9" y="630.8" width="46.3" height="4.4" fill="rgb(72,36,117)"/><rect x="300.9" y="630.8" width="4.4" height="4.4" fill="rgb(72,33,117)"/><rect x="304.9" y="630.8" width="60.8" height="4.4" fill="rgb(72,33,114)"/><rect x="365.4" y="630.8" width="4.4" height="4.4" fill="rgb(72,30,114)"/><rect x="369.4" y="630.8" width="34.2" height="4.4" fill="rgb(72,30,111)"/><rect x="254.9" y="626.8" width="50.3" height="4.4" fill="rgb(72,36,117)"/><rect x="304.9" y="626.8" width="4.4" height="4.4" fill="rgb(72,33,117)"/><rect x="309.0" y="626.8" width="60.8" height="4.4" fill="rgb(72,33,114)"/><rect x="369.4" y="626.8" width="4.4" height="4.4" fill="rgb(72,30,114)"/><rect x="373.4" y="626.8" width="30.2" height="4.4" fill="rgb(72,30,111)"/><rect x="254.9" y="622.7" width="54.4" height="4.4" fill="rgb(72,36,117)"/><rect x="309.0" y="622.7" width="4.4" height="4.4" fill="rgb(72,33,117)"/><rect x="313.0" y="622.7" width="60.8" height="4.4" fill="rgb(72,33,114)"/><rect x="373.4" y="622.7" width="4.4" height="4.4" fill="rgb(72,30,114)"/><rect x="377.5" y="622.7" width="26.1" height="4.4" fill="rgb(72,30,111)"/><rect x="254.9" y="618.7" width="58.4" height="4.4" fill="rgb(72,36,117)"/><rect x="313.0" y="618.7" width="4.4" height="4.4" fill="rgb(72,33,117)"/><rect x="317.0" y="618.7" width="60.8" height="4.4" fill="rgb(72,33,114)"/><rect x="377.5" y="618.7" width="4.4" height="4.4" fill="rgb(72,30,114)"/><rect x="381.5" y="618.7" width="22.1" height="4.4" fill="rgb(72,30,111)"/><rect x="254.9" y="614.7" width="62.4" height="4.4" fill="rgb(72,36,117)"/><rect x="317.0" y="614.7" width="4.4" height="4.4" fill="rgb(72,33,117)"/><rect x="321.0" y="614.7" width="60.8" height="4.4" fill="rgb(72,33,114)"/><rect x="381.5" y="614.7" width="4.4" height="4.4" fill="rgb(72,30,114)"/><rect x="385.5" y="614.7" width="18.1" height="4.4" fill="rgb(72,30,111)"/><rect x="254.9" y="610.6" width="66.4" height="4.4" fill="rgb(72,36,117)"/><rect x="321.0" y="610.6" width="4.4" height="4.4" fill="rgb(72,33,117)"/><rect x="325.1" y="610.6" width="60.8" height="4.4" fill="rgb(72,33,114)"/><rect x="385.5" y="610.6" width="4.4" height="4.4" fill="rgb(72,30,114)"/><rect x="389.6" y="610.6" width="14.1" height="4.4" fill="rgb(72,30,111)"/><rect x="254.9" y="606.6" width="2.0" height="4.4" fill="rgb(72,39,117)"/><rect x="256.6" y="606.6" width="68.9" height="4.4" fill="rgb(72,36,117)"/><rect x="325.1" y="606.6" width="4.4" height="4.4" fill="rgb(72,33,117)"/><rect x="329.1" y="606.6" width="60.8" height="4.4" fill="rgb(72,33,114)"/><rect x="389.6" y="606.6" width="4.4" height="4.4" fill="rgb(72,30,114)"/><rect x="393.6" y="606.6" width="10.0" height="4.4" fill="rgb(72,30,111)"/><rect x="254.9" y="602.6" width="6.0" height="4.4" fill="rgb(72,39,117)"/><rect x="260.6" y="602.6" width="68.9" height="4.4" fill="rgb(72,36,117)"/><rect x="329.1" y="602.6" width="4.4" height="4.4" fill="rgb(72,33,117)"/><rect x="333.1" y="602.6" width="60.8" height="4.4" fill="rgb(72,33,114)"/><rect x="393.6" y="602.6" width="4.4" height="4.4" fill="rgb(72,30,114)"/><rect x="397.6" y="602.6" width="6.0" height="4.4" fill="rgb(72,30,111)"/><rect x="254.9" y="598.5" width="10.0" height="4.4" fill="rgb(72,39,117)"/><rect x="264.6" y="598.5" width="68.9" height="4.4" fill="rgb(72,36,117)"/><rect x="333.1" y="598.5" width="4.4" height="4.4" fill="rgb(72,33,117)"/><rect x="337.2" y="598.5" width="60.8" height="4.4" fill="rgb(72,33,114)"/><rect x="397.6" y="598.5" width="4.4" height="4.4" fill="rgb(72,30,114)"/><rect x="401.6" y="598.5" width="2.0" height="4.4" fill="rgb(72,30,111)"/><rect x="254.9" y="594.5" width="14.1" height="4.4" fill="rgb(72,39,117)"/><rect x="268.7" y="594.5" width="68.9" height="4.4" fill="rgb(72,36,117)"/><rect x="337.2" y="594.5" width="4.4" height="4.4" fill="rgb(72,33,117)"/><rect x="341.2" y="594.5" width="60.8" height="4.4" fill="rgb(72,33,114)"/><rect x="401.6" y="594.5" width="2.0" height="4.4" fill="rgb(72,30,114)"/><rect x="254.9" y="590.5" width="18.1" height="4.4" fill="rgb(72,39,117)"/><rect x="272.7" y="590.5" width="68.9" height="4.4" fill="rgb(72,36,117)"/><rect x="341.2" y="590.5" width="4.4" height="4.4" fill="rgb(72,33,117)"/><rect x="345.2" y="590.5" width="58.4" height="4.4" fill="rgb(72,33,114)"/><rect x="254.9" y="586.5" width="22.1" height="4.4" fill="rgb(72,39,117)"/><rect x="276.7" y="586.5" width="68.9" height="4.4" fill="rgb(72,36,117)"/><rect x="345.2" y="586.5" width="4.4" height="4.4" fill="rgb(72,33,117)"/><rect x="349.2" y="586.5" width="54.4" height="4.4" fill="rgb(72,33,114)"/><rect x="254.9" y="582.4" width="26.1" height="4.4" fill="rgb(72,39,117)"/><rect x="280.7" y="582.4" width="68.9" height="4.4" fill="rgb(72,36,117)"/><rect x="349.2" y="582.4" width="4.4" height="4.4" fill="rgb(72,33,117)"/><rect x="353.3" y="582.4" width="50.3" height="4.4" fill="rgb(72,33,114)"/><rect x="254.9" y="578.4" width="30.2" height="4.4" fill="rgb(72,39,117)"/><rect x="284.8" y="578.4" width="68.9" height="4.4" fill="rgb(72,36,117)"/><rect x="353.3" y="578.4" width="4.4" height="4.4" fill="rgb(72,33,117)"/><rect x="357.3" y="578.4" width="46.3" height="4.4" fill="rgb(72,33,114)"/><rect x="254.9" y="574.4" width="2.0" height="4.4" fill="rgb(72,39,120)"/><rect x="256.6" y="574.4" width="32.6" height="4.4" fill="rgb(72,39,117)"/><rect x="288.8" y="574.4" width="68.9" height="4.4" fill="rgb(72,36,117)"/><rect x="357.3" y="574.4" width="4.4" height="4.4" fill="rgb(72,33,117)"/><rect x="361.3" y="574.4" width="42.3" height="4.4" fill="rgb(72,33,114)"/><rect x="254.9" y="570.3" width="6.0" height="4.4" fill="rgb(72,39,120)"/><rect x="260.6" y="570.3" width="32.6" height="4.4" fill="rgb(72,39,117)"/><rect x="292.8" y="570.3" width="68.9" height="4.4" fill="rgb(72,36,117)"/><rect x="361.3" y="570.3" width="4.4" height="4.4" fill="rgb(72,33,117)"/><rect x="365.4" y="570.3" width="38.2" height="4.4" fill="rgb(72,33,114)"/><rect x="254.9" y="566.3" width="10.0" height="4.4" fill="rgb(72,39,120)"/><rect x="264.6" y="566.3" width="32.6" height="4.4" fill="rgb(72,39,117)"/><rect x="296.9" y="566.3" width="68.9" height="4.4" fill="rgb(72,36,117)"/><rect x="365.4" y="566.3" width="4.4" height="4.4" fill="rgb(72,33,117)"/><rect x="369.4" y="566.3" width="34.2" height="4.4" fill="rgb(72,33,114)"/><rect x="254.9" y="562.3" width="14.1" height="4.4" fill="rgb(72,39,120)"/><rect x="268.7" y="562.3" width="32.6" height="4.4" fill="rgb(72,39,117)"/><rect x="300.9" y="562.3" width="68.9" height="4.4" fill="rgb(72,36,117)"/><rect x="369.4" y="562.3" width="4.4" height="4.4" fill="rgb(72,33,117)"/><rect x="373.4" y="562.3" width="30.2" height="4.4" fill="rgb(72,33,114)"/><rect x="254.9" y="558.2" width="18.1" height="4.4" fill="rgb(72,39,120)"/><rect x="272.7" y="558.2" width="32.6" height="4.4" fill="rgb(72,39,117)"/><rect x="304.9" y="558.2" width="68.9" height="4.4" fill="rgb(72,36,117)"/><rect x="373.4" y="558.2" width="4.4" height="4.4" fill="rgb(72,33,117)"/><rect x="377.5" y="558.2" width="26.1" height="4.4" fill="rgb(72,33,114)"/><rect x="254.9" y="554.2" width="22.1" height="4.4" fill="rgb(72,39,120)"/><rect x="276.7" y="554.2" width="32.6" height="4.4" fill="rgb(72,39,117)"/><rect x="309.0" y="554.2" width="68.9" height="4.4" fill="rgb(72,36,117)"/><rect x="377.5" y="554.2" width="4.4" height="4.4" fill="rgb(72,33,117)"/><rect x="381.5" y="554.2" width="22.1" height="4.4" fill="rgb(72,33,114)"/><rect x="254.9" y="550.2" width="2.0" height="4.4" fill="rgb(69,39,120)"/><rect x="256.6" y="550.2" width="24.5" height="4.4" fill="rgb(72,39,120)"/><rect x="280.7" y="550.2" width="32.6" height="4.4" fill="rgb(72,39,117)"/><rect x="313.0" y="550.2" width="68.9" height="4.4" fill="rgb(72,36,117)"/><rect x="381.5" y="550.2" width="4.4" height="4.4" fill="rgb(72,33,117)"/><rect x="385.5" y="550.2" width="18.1" height="4.4" fill="rgb(72,33,114)"/><rect x="254.9" y="546.1" width="6.0" height="4.4" fill="rgb(69,39,120)"/><rect x="260.6" y="546.1" width="24.5" height="4.4" fill="rgb(72,39,120)"/><rect x="284.8" y="546.1" width="32.6" height="4.4" fill="rgb(72,39,117)"/><rect x="317.0" y="546.1" width="68.9" height="4.4" fill="rgb(72,36,117)"/><rect x="385.5" y="546.1" width="4.4" height="4.4" fill="rgb(72,33,117)"/><rect x="389.6" y="546.1" width="14.1" height="4.4" fill="rgb(72,33,114)"/><rect x="254.9" y="542.1" width="10.0" height="4.4" fill="rgb(69,39,120)"/><rect x="264.6" y="542.1" width="24.5" height="4.4" fill="rgb(72,39,120)"/><rect x="288.8" y="542.1" width="32.6" height="4.4" fill="rgb(72,39,117)"/><rect x="321.0" y="542.1" width="68.9" height="4.4" fill="rgb(72,36,117)"/><rect x="389.6" y="542.1" width="4.4" height="4.4" fill="rgb(72,33,117)"/><rect x="393.6" y="542.1" width="10.0" height="4.4" fill="rgb(72,33,114)"/><rect x="254.9" y="538.1" width="2.0" height="4.4" fill="rgb(69,42,120)"/><rect x="256.6" y="538.1" width="12.4" height="4.4" fill="rgb(69,39,120)"/><rect x="268.7" y="538.1" width="24.5" height="4.4" fill="rgb(72,39,120)"/><rect x="292.8" y="538.1" width="32.6" height="4.4" fill="rgb(72,39,117)"/><rect x="325.1" y="538.1" width="68.9" height="4.4" fill="rgb(72,36,117)"/><rect x="393.6" y="538.1" width="4.4" height="4.4" fill="rgb(72,33,117)"/><rect x="397.6" y="538.1" width="6.0" height="4.4" fill="rgb(72,33,114)"/><rect x="254.9" y="534.1" width="6.0" height="4.4" fill="rgb(69,42,120)"/><rect x="260.6" y="534.1" width="12.4" height="4.4" fill="rgb(69,39,120)"/><rect x="272.7" y="534.1" width="24.5" height="4.4" fill="rgb(72,39,120)"/><rect x="296.9" y="534.1" width="32.6" height="4.4" fill="rgb(72,39,117)"/><rect x="329.1" y="534.1" width="68.9" height="4.4" fill="rgb(72,36,117)"/><rect x="397.6" y="534.1" width="4.4" height="4.4" fill="rgb(72,33,117)"/><rect x="401.6" y="534.1" width="2.0" height="4.4" fill="rgb(72,33,114)"/><rect x="254.9" y="532.4" width="10.0" height="2.0" fill="rgb(69,42,120)"/><rect x="264.6" y="532.4" width="12.4" height="2.0" fill="rgb(69,39,120)"/><rect x="276.7" y="532.4" width="24.5" height="2.0" fill="rgb(72,39,120)"/><rect x="300.9" y="532.4" width="32.6" height="2.0" fill="rgb(72,39,117)"/><rect x="333.1" y="532.4" width="68.9" height="2.0" fill="rgb(72,36,117)"/><rect x="401.6" y="532.4" width="2.0" height="2.0" fill="rgb(72,33,117)"/></g>
<polygon points="284.54,626.18 321.60,622.06 345.49,634.95 355.90,652.49 341.20,693.76 293.42,693.76 269.84,660.23" fill="rgb(38,125,142)" opacity="1" filter="url(#fglow)"/>
<polygon points="300.14,637.45 324.52,634.48 340.23,643.75 347.09,656.36 337.41,686.02 305.98,686.02 290.46,661.92" fill="rgb(33,145,140)" opacity="0.9" filter="url(#fglow2)"/>
<polygon points="300.73,640.13 320.23,637.55 332.81,645.61 338.29,656.57 330.55,682.36 305.40,682.36 292.99,661.41" fill="rgb(150,215,60)"/>
<polygon points="304.28,640.13 323.78,637.55 336.35,645.61 341.83,656.57 334.10,682.36 308.95,682.36 296.54,661.41" fill="rgb(253,231,37)"/>
</g>
<rect x="254.95" y="532.45" width="148.30" height="148.30" fill="none" stroke="#222" stroke-width="1.1"/>
<rect x="280.74" y="558.24" width="96.72" height="96.72" fill="none" stroke="rgb(255,0,0)" stroke-width="1.3"/>
<path d="M292.02,606.60H321.85M336.35,606.60H366.18M329.10,569.52V599.35M329.10,613.85V643.68" stroke="rgb(255,0,0)" stroke-width="1.3"/>
<text x="329.10" y="548.33" font-size="10" font-family="'Liberation Sans', sans-serif" fill="rgb(255,0,0)" text-anchor="middle" textLength="7.48" lengthAdjust="spacingAndGlyphs" xml:space="preserve">N</text>
<text x="265.43" y="610.30" font-size="10" font-family="'Liberation Sans', sans-serif" fill="rgb(255,0,0)" text-anchor="middle" textLength="6.32" lengthAdjust="spacingAndGlyphs" xml:space="preserve">E</text>
<line x1="264.62" y1="680.75" x2="264.62" y2="684.25" stroke="#222" stroke-width="0.9"/>
<text x="264.62" y="696.20" font-size="10" font-family="'Liberation Sans', sans-serif" fill="#000" text-anchor="middle" textLength="14.74" lengthAdjust="spacingAndGlyphs" xml:space="preserve">−4</text>
<line x1="251.45" y1="671.08" x2="254.95" y2="671.08" stroke="#222" stroke-width="0.9"/>
<text x="247.35" y="675.08" font-size="10" font-family="'Liberation Sans', sans-serif" fill="#000" text-anchor="end" textLength="14.74" lengthAdjust="spacingAndGlyphs" xml:space="preserve">−4</text>
<line x1="296.86" y1="680.75" x2="296.86" y2="684.25" stroke="#222" stroke-width="0.9"/>
<text x="296.86" y="696.20" font-size="10" font-family="'Liberation Sans', sans-serif" fill="#000" text-anchor="middle" textLength="14.74" lengthAdjust="spacingAndGlyphs" xml:space="preserve">−2</text>
<line x1="251.45" y1="638.84" x2="254.95" y2="638.84" stroke="#222" stroke-width="0.9"/>
<text x="247.35" y="642.84" font-size="10" font-family="'Liberation Sans', sans-serif" fill="#000" text-anchor="end" textLength="14.74" lengthAdjust="spacingAndGlyphs" xml:space="preserve">−2</text>
<line x1="329.10" y1="680.75" x2="329.10" y2="684.25" stroke="#222" stroke-width="0.9"/>
<text x="329.10" y="696.20" font-size="10" font-family="'Liberation Sans', sans-serif" fill="#000" text-anchor="middle" textLength="6.36" lengthAdjust="spacingAndGlyphs" xml:space="preserve">0</text>
<line x1="251.45" y1="606.60" x2="254.95" y2="606.60" stroke="#222" stroke-width="0.9"/>
<text x="247.35" y="610.60" font-size="10" font-family="'Liberation Sans', sans-serif" fill="#000" text-anchor="end" textLength="6.36" lengthAdjust="spacingAndGlyphs" xml:space="preserve">0</text>
<line x1="361.34" y1="680.75" x2="361.34" y2="684.25" stroke="#222" stroke-width="0.9"/>
<text x="361.34" y="696.20" font-size="10" font-family="'Liberation Sans', sans-serif" fill="#000" text-anchor="middle" textLength="6.36" lengthAdjust="spacingAndGlyphs" xml:space="preserve">2</text>
<line x1="251.45" y1="574.36" x2="254.95" y2="574.36" stroke="#222" stroke-width="0.9"/>
<text x="247.35" y="578.36" font-size="10" font-family="'Liberation Sans', sans-serif" fill="#000" text-anchor="end" textLength="6.36" lengthAdjust="spacingAndGlyphs" xml:space="preserve">2</text>
<line x1="393.58" y1="680.75" x2="393.58" y2="684.25" stroke="#222" stroke-width="0.9"/>
<text x="393.58" y="696.20" font-size="10" font-family="'Liberation Sans', sans-serif" fill="#000" text-anchor="middle" textLength="6.36" lengthAdjust="spacingAndGlyphs" xml:space="preserve">4</text>
<line x1="251.45" y1="542.12" x2="254.95" y2="542.12" stroke="#222" stroke-width="0.9"/>
<text x="247.35" y="546.12" font-size="10" font-family="'Liberation Sans', sans-serif" fill="#000" text-anchor="end" textLength="6.36" lengthAdjust="spacingAndGlyphs" xml:space="preserve">4</text>
<text x="515.00" y="525.80" font-size="12.8" font-family="'Liberation Sans', sans-serif" fill="#000" text-anchor="middle" textLength="100.67" lengthAdjust="spacingAndGlyphs" xml:space="preserve">DECaLS(24.0) g</text>
<g clip-path="url(#pc2)">
<g shape-rendering="crispEdges"><rect x="440.8" y="677.1" width="8.0" height="4.0" fill="rgb(168,168,168)"/><rect x="448.5" y="677.1" width="4.4" height="4.0" fill="rgb(162,162,162)"/><rect x="452.5" y="677.1" width="4.4" height="4.0" fill="rgb(156,156,156)"/><rect x="456.6" y="677.1" width="4.4" height="4.0" fill="rgb(135,135,135)"/><rect x="460.6" y="677.1" width="4.4" height="4.0" fill="rgb(93,93,93)"/><rect x="464.6" y="677.1" width="4.4" height="4.0" fill="rgb(3,3,3)"/><rect x="468.7" y="677.1" width="68.9" height="4.0" fill="rgb(0,0,0)"/><rect x="537.2" y="677.1" width="8.4" height="4.0" fill="rgb(249,249,249)"/><rect x="545.2" y="677.1" width="4.4" height="4.0" fill="rgb(30,30,30)"/><rect x="549.3" y="677.1" width="4.4" height="4.0" fill="rgb(111,111,111)"/><rect x="553.3" y="677.1" width="4.4" height="4.0" fill="rgb(147,147,147)"/><rect x="557.3" y="677.1" width="4.4" height="4.0" fill="rgb(159,159,159)"/><rect x="561.3" y="677.1" width="4.4" height="4.0" fill="rgb(165,165,165)"/><rect x="565.4" y="677.1" width="4.4" height="4.0" fill="rgb(168,168,168)"/><rect x="569.4" y="677.1" width="20.1" height="4.0" fill="rgb(171,171,171)"/><rect x="440.8" y="673.1" width="8.0" height="4.4" fill="rgb(168,168,168)"/><rect x="448.5" y="673.1" width="4.4" height="4.4" fill="rgb(165,165,165)"/><rect x="452.5" y="673.1" width="4.4" height="4.4" fill="rgb(156,156,156)"/><rect x="456.6" y="673.1" width="4.4" height="4.4" fill="rgb(138,138,138)"/><rect x="460.6" y="673.1" width="4.4" height="4.4" fill="rgb(96,96,96)"/><rect x="464.6" y="673.1" width="4.4" height="4.4" fill="rgb(6,6,6)"/><rect x="468.7" y="673.1" width="76.9" height="4.4" fill="rgb(0,0,0)"/><rect x="545.2" y="673.1" width="4.4" height="4.4" fill="rgb(33,33,33)"/><rect x="549.3" y="673.1" width="4.4" height="4.4" fill="rgb(117,117,117)"/><rect x="553.3" y="673.1" width="4.4" height="4.4" fill="rgb(150,150,150)"/><rect x="557.3" y="673.1" width="4.4" height="4.4" fill="rgb(162,162,162)"/><rect x="561.3" y="673.1" width="8.4" height="4.4" fill="rgb(168,168,168)"/><rect x="569.4" y="673.1" width="20.1" height="4.4" fill="rgb(171,171,171)"/><rect x="440.8" y="669.1" width="8.0" height="4.4" fill="rgb(168,168,168)"/><rect x="448.5" y="669.1" width="4.4" height="4.4" fill="rgb(165,165,165)"/><rect x="452.5" y="669.1" width="4.4" height="4.4" fill="rgb(156,156,156)"/><rect x="456.6" y="669.1" width="4.4" height="4.4" fill="rgb(138,138,138)"/><rect x="460.6" y="669.1" width="4.4" height="4.4" fill="rgb(99,99,99)"/><rect x="464.6" y="669.1" width="4.4" height="4.4" fill="rgb(12,12,12)"/><rect x="468.7" y="669.1" width="76.9" height="4.4" fill="rgb(0,0,0)"/><rect x="545.2" y="669.1" width="4.4" height="4.4" fill="rgb(42,42,42)"/><rect x="549.3" y="669.1" width="4.4" height="4.4" fill="rgb(207,207,207)"/><rect x="553.3" y="669.1" width="4.4" height="4.4" fill="rgb(153,153,153)"/><rect x="557.3" y="669.1" width="4.4" height="4.4" fill="rgb(165,165,165)"/><rect x="561.3" y="669.1" width="8.4" height="4.4" fill="rgb(168,168,168)"/><rect x="569.4" y="669.1" width="20.1" height="4.4" fill="rgb(171,171,171)"/><rect x="440.8" y="665.0" width="8.0" height="4.4" fill="rgb(168,168,168)"/><rect x="448.5" y="665.0" width="4.4" height="4.4" fill="rgb(165,165,165)"/><rect x="452.5" y="665.0" width="4.4" height="4.4" fill="rgb(156,156,156)"/><rect x="456.6" y="665.0" width="4.4" height="4.4" fill="rgb(141,141,141)"/><rect x="460.6" y="665.0" width="4.4" height="4.4" fill="rgb(102,102,102)"/><rect x="464.6" y="665.0" width="4.4" height="4.4" fill="rgb(15,15,15)"/><rect x="468.7" y="665.0" width="76.9" height="4.4" fill="rgb(0,0,0)"/><rect x="545.2" y="665.0" width="4.4" height="4.4" fill="rgb(48,48,48)"/><rect x="549.3" y="665.0" width="4.4" height="4.4" fill="rgb(183,183,183)"/><rect x="553.3" y="665.0" width="4.4" height="4.4" fill="rgb(156,156,156)"/><rect x="557.3" y="665.0" width="4.4" height="4.4" fill="rgb(165,165,165)"/><rect x="561.3" y="665.0" width="4.4" height="4.4" fill="rgb(168,168,168)"/><rect x="565.4" y="665.0" width="24.1" height="4.4" fill="rgb(171,171,171)"/><rect x="440.8" y="661.0" width="8.0" height="4.4" fill="rgb(168,168,168)"/><rect x="448.5" y="661.0" width="4.4" height="4.4" fill="rgb(165,165,165)"/><rect x="452.5" y="661.0" width="4.4" height="4.4" fill="rgb(159,159,159)"/><rect x="456.6" y="661.0" width="4.4" height="4.4" fill="rgb(141,141,141)"/><rect x="460.6" y="661.0" width="4.4" height="4.4" fill="rgb(105,105,105)"/><rect x="464.6" y="661.0" width="4.4" height="4.4" fill="rgb(21,21,21)"/><rect x="468.7" y="661.0" width="76.9" height="4.4" fill="rgb(0,0,0)"/><rect x="545.2" y="661.0" width="4.4" height="4.4" fill="rgb(57,57,57)"/><rect x="549.3" y="661.0" width="4.4" height="4.4" fill="rgb(237,237,237)"/><rect x="553.3" y="661.0" width="4.4" height="4.4" fill="rgb(162,162,162)"/><rect x="557.3" y="661.0" width="8.4" height="4.4" fill="rgb(168,168,168)"/><rect x="565.4" y="661.0" width="24.1" height="4.4" fill="rgb(171,171,171)"/><rect x="440.8" y="657.0" width="8.0" height="4.4" fill="rgb(168,168,168)"/><rect x="448.5" y="657.0" width="4.4" height="4.4" fill="rgb(165,165,165)"/><rect x="452.5" y="657.0" width="4.4" height="4.4" fill="rgb(159,159,159)"/><rect x="456.6" y="657.0" width="4.4" height="4.4" fill="rgb(141,141,141)"/><rect x="460.6" y="657.0" width="4.4" height="4.4" fill="rgb(105,105,105)"/><rect x="464.6" y="657.0" width="4.4" height="4.4" fill="rgb(24,24,24)"/><rect x="468.7" y="657.0" width="76.9" height="4.4" fill="rgb(0,0,0)"/><rect x="545.2" y="657.0" width="4.4" height="4.4" fill="rgb(57,57,57)"/><rect x="549.3" y="657.0" width="4.4" height="4.4" fill="rgb(240,240,240)"/><rect x="553.3" y="657.0" width="4.4" height="4.4" fill="rgb(159,159,159)"/><rect x="557.3" y="657.0" width="4.4" height="4.4" fill="rgb(165,165,165)"/><rect x="561.3" y="657.0" width="4.4" height="4.4" fill="rgb(168,168,168)"/><rect x="565.4" y="657.0" width="24.1" height="4.4" fill="rgb(171,171,171)"/><rect x="440.8" y="652.9" width="8.0" height="4.4" fill="rgb(168,168,168)"/><rect x="448.5" y="652.9" width="4.4" height="4.4" fill="rgb(165,165,165)"/><rect x="452.5" y="652.9" width="4.4" height="4.4" fill="rgb(159,159,159)"/><rect x="456.6" y="652.9" width="4.4" height="4.4" fill="rgb(141,141,141)"/><rect x="460.6" y="652.9" width="4.4" height="4.4" fill="rgb(108,108,108)"/><rect x="464.6" y="652.9" width="4.4" height="4.4" fill="rgb(39,39,39)"/><rect x="468.7" y="652.9" width="76.9" height="4.4" fill="rgb(0,0,0)"/><rect x="545.2" y="652.9" width="4.4" height="4.4" fill="rgb(54,54,54)"/><rect x="549.3" y="652.9" width="4.4" height="4.4" fill="rgb(129,129,129)"/><rect x="553.3" y="652.9" width="4.4" height="4.4" fill="rgb(156,156,156)"/><rect x="557.3" y="652.9" width="4.4" height="4.4" fill="rgb(165,165,165)"/><rect x="561.3" y="652.9" width="8.4" height="4.4" fill="rgb(168,168,168)"/><rect x="569.4" y="652.9" width="20.1" height="4.4" fill="rgb(171,171,171)"/><rect x="440.8" y="648.9" width="8.0" height="4.4" fill="rgb(168,168,168)"/><rect x="448.5" y="648.9" width="4.4" height="4.4" fill="rgb(165,165,165)"/><rect x="452.5" y="648.9" width="4.4" height="4.4" fill="rgb(159,159,159)"/><rect x="456.6" y="648.9" width="4.4" height="4.4" fill="rgb(147,147,147)"/><rect x="460.6" y="648.9" width="4.4" height="4.4" fill="rgb(123,123,123)"/><rect x="464.6" y="648.9" width="4.4" height="4.4" fill="rgb(72,72,72)"/><rect x="468.7" y="648.9" width="60.8" height="4.4" fill="rgb(0,0,0)"/><rect x="529.1" y="648.9" width="12.4" height="4.4" fill="rgb(246,246,246)"/><rect x="541.2" y="648.9" width="4.4" height="4.4" fill="rgb(12,12,12)"/><rect x="545.2" y="648.9" width="4.4" height="4.4" fill="rgb(81,81,81)"/><rect x="549.3" y="648.9" width="4.4" height="4.4" fill="rgb(129,129,129)"/><rect x="553.3" y="648.9" width="4.4" height="4.4" fill="rgb(153,153,153)"/><rect x="557.3" y="648.9" width="4.4" height="4.4" fill="rgb(165,165,165)"/><rect x="561.3" y="648.9" width="8.4" height="4.4" fill="rgb(168,168,168)"/><rect x="569.4" y="648.9" width="20.1" height="4.4" fill="rgb(171,171,171)"/><rect x="440.8" y="644.9" width="8.0" height="4.4" fill="rgb(168,168,168)"/><rect x="448.5" y="644.9" width="4.4" height="4.4" fill="rgb(165,165,165)"/><rect x="452.5" y="644.9" width="4.4" height="4.4" fill="rgb(162,162,162)"/><rect x="456.6" y="644.9" width="4.4" height="4.4" fill="rgb(153,153,153)"/><rect x="460.6" y="644.9" width="4.4" height="4.4" fill="rgb(135,135,135)"/><rect x="464.6" y="644.9" width="4.4" height="4.4" fill="rgb(96,96,96)"/><rect x="468.7" y="644.9" width="4.4" height="4.4" fill="rgb(15,15,15)"/><rect x="472.7" y="644.9" width="64.8" height="4.4" fill="rgb(0,0,0)"/><rect x="537.2" y="644.9" width="4.4" height="4.4" fill="rgb(24,24,24)"/><rect x="541.2" y="644.9" width="4.4" height="4.4" fill="rgb(84,84,84)"/><rect x="545.2" y="644.9" width="4.4" height="4.4" fill="rgb(120,120,120)"/><rect x="549.3" y="644.9" width="4.4" height="4.4" fill="rgb(141,141,141)"/><rect x="553.3" y="644.9" width="4.4" height="4.4" fill="rgb(156,156,156)"/><rect x="557.3" y="644.9" width="4.4" height="4.4" fill="rgb(165,165,165)"/><rect x="561.3" y="644.9" width="8.4" height="4.4" fill="rgb(168,168,168)"/><rect x="569.4" y="644.9" width="20.1" height="4.4" fill="rgb(171,171,171)"/><rect x="440.8" y="640.9" width="12.0" height="4.4" fill="rgb(168,168,168)"/><rect x="452.5" y="640.9" width="4.4" height="4.4" fill="rgb(165,165,165)"/><rect x="456.6" y="640.9" width="4.4" height="4.4" fill="rgb(156,156,156)"/><rect x="460.6" y="640.9" width="4.4" height="4.4" fill="rgb(144,144,144)"/><rect x="464.6" y="640.9" width="4.4" height="4.4" fill="rgb(114,114,114)"/><rect x="468.7" y="640.9" width="4.4" height="4.4" fill="rgb(54,54,54)"/><rect x="472.7" y="640.9" width="60.8" height="4.4" fill="rgb(0,0,0)"/><rect x="533.1" y="640.9" width="4.4" height="4.4" fill="rgb(36,36,36)"/><rect x="537.2" y="640.9" width="4.4" height="4.4" fill="rgb(84,84,84)"/><rect x="541.2" y="640.9" width="4.4" height="4.4" fill="rgb(120,120,120)"/><rect x="545.2" y="640.9" width="4.4" height="4.4" fill="rgb(141,141,141)"/><rect x="549.3" y="640.9" width="4.4" height="4.4" fill="rgb(153,153,153)"/><rect x="553.3" y="640.9" width="4.4" height="4.4" fill="rgb(162,162,162)"/><rect x="557.3" y="640.9" width="4.4" height="4.4" fill="rgb(165,165,165)"/><rect x="561.3" y="640.9" width="8.4" height="4.4" fill="rgb(168,168,168)"/><rect x="569.4" y="640.9" width="20.1" height="4.4" fill="rgb(171,171,171)"/><rect x="440.8" y="636.8" width="12.0" height="4.4" fill="rgb(168,168,168)"/><rect x="452.5" y="636.8" width="4.4" height="4.4" fill="rgb(165,165,165)"/><rect x="456.6" y="636.8" width="4.4" height="4.4" fill="rgb(159,159,159)"/><rect x="460.6" y="636.8" width="4.4" height="4.4" fill="rgb(150,150,150)"/><rect x="464.6" y="636.8" width="4.4" height="4.4" fill="rgb(126,126,126)"/><rect x="468.7" y="636.8" width="4.4" height="4.4" fill="rgb(90,90,90)"/><rect x="472.7" y="636.8" width="4.4" height="4.4" fill="rgb(42,42,42)"/><rect x="476.7" y="636.8" width="52.7" height="4.4" fill="rgb(0,0,0)"/><rect x="529.1" y="636.8" width="4.4" height="4.4" fill="rgb(48,48,48)"/><rect x="533.1" y="636.8" width="4.4" height="4.4" fill="rgb(90,90,90)"/><rect x="537.2" y="636.8" width="4.4" height="4.4" fill="rgb(120,120,120)"/><rect x="541.2" y="636.8" width="4.4" height="4.4" fill="rgb(138,138,138)"/><rect x="545.2" y="636.8" width="4.4" height="4.4" fill="rgb(150,150,150)"/><rect x="549.3" y="636.8" width="4.4" height="4.4" fill="rgb(159,159,159)"/><rect x="553.3" y="636.8" width="4.4" height="4.4" fill="rgb(165,165,165)"/><rect x="557.3" y="636.8" width="12.4" height="4.4" fill="rgb(168,168,168)"/><rect x="569.4" y="636.8" width="20.1" height="4.4" fill="rgb(171,171,171)"/><rect x="440.8" y="632.8" width="4.0" height="4.4" fill="rgb(171,171,171)"/><rect x="444.5" y="632.8" width="8.4" height="4.4" fill="rgb(168,168,168)"/><rect x="452.5" y="632.8" width="4.4" height="4.4" fill="rgb(165,165,165)"/><rect x="456.6" y="632.8" width="4.4" height="4.4" fill="rgb(162,162,162)"/><rect x="460.6" y="632.8" width="4.4" height="4.4" fill="rgb(156,156,156)"/><rect x="464.6" y="632.8" width="4.4" height="4.4" fill="rgb(144,144,144)"/><rect x="468.7" y="632.8" width="4.4" height="4.4" fill="rgb(126,126,126)"/><rect x="472.7" y="632.8" width="4.4" height="4.4" fill="rgb(99,99,99)"/><rect x="476.7" y="632.8" width="4.4" height="4.4" fill="rgb(54,54,54)"/><rect x="480.7" y="632.8" width="40.6" height="4.4" fill="rgb(0,0,0)"/><rect x="521.0" y="632.8" width="4.4" height="4.4" fill="rgb(21,21,21)"/><rect x="525.1" y="632.8" width="4.4" height="4.4" fill="rgb(69,69,69)"/><rect x="529.1" y="632.8" width="4.4" height="4.4" fill="rgb(102,102,102)"/><rect x="533.1" y="632.8" width="4.4" height="4.4" fill="rgb(123,123,123)"/><rect x="537.2" y="632.8" width="4.4" height="4.4" fill="rgb(141,141,141)"/><rect x="541.2" y="632.8" width="4.4" height="4.4" fill="rgb(150,150,150)"/><rect x="545.2" y="632.8" width="4.4" height="4.4" fill="rgb(159,159,159)"/><rect x="549.3" y="632.8" width="4.4" height="4.4" fill="rgb(162,162,162)"/><rect x="553.3" y="632.8" width="4.4" height="4.4" fill="rgb(165,165,165)"/><rect x="557.3" y="632.8" width="12.4" height="4.4" fill="rgb(168,168,168)"/><rect x="569.4" y="632.8" width="20.1" height="4.4" fill="rgb(171,171,171)"/><rect x="440.8" y="628.8" width="4.0" height="4.4" fill="rgb(171,171,171)"/><rect x="444.5" y="628.8" width="12.4" height="4.4" fill="rgb(168,168,168)"/><rect x="456.6" y="628.8" width="4.4" height="4.4" fill="rgb(165,165,165)"/><rect x="460.6" y="628.8" width="4.4" height="4.4" fill="rgb(162,162,162)"/><rect x="464.6" y="628.8" width="4.4" height="4.4" fill="rgb(153,153,153)"/><rect x="468.7" y="628.8" width="4.4" height="4.4" fill="rgb(144,144,144)"/><rect x="472.7" y="628.8" width="4.4" height="4.4" fill="rgb(129,129,129)"/><rect x="476.7" y="628.8" width="4.4" height="4.4" fill="rgb(105,105,105)"/><rect x="480.7" y="628.8" width="4.4" height="4.4" fill="rgb(66,66,66)"/><rect x="484.8" y="628.8" width="32.6" height="4.4" fill="rgb(42,42,42)"/><rect x="517.0" y="628.8" width="4.4" height="4.4" fill="rgb(45,45,45)"/><rect x="521.0" y="628.8" width="4.4" height="4.4" fill="rgb(87,87,87)"/><rect x="525.1" y="628.8" width="4.4" height="4.4" fill="rgb(114,114,114)"/><rect x="529.1" y="628.8" width="4.4" height="4.4" fill="rgb(132,132,132)"/><rect x="533.1" y="628.8" width="4.4" height="4.4" fill="rgb(144,144,144)"/><rect x="537.2" y="628.8" width="4.4" height="4.4" fill="rgb(153,153,153)"/><rect x="541.2" y="628.8" width="4.4" height="4.4" fill="rgb(159,159,159)"/><rect x="545.2" y="628.8" width="4.4" height="4.4" fill="rgb(162,162,162)"/><rect x="549.3" y="628.8" width="4.4" height="4.4" fill="rgb(165,165,165)"/><rect x="553.3" y="628.8" width="12.4" height="4.4" fill="rgb(168,168,168)"/><rect x="565.4" y="628.8" width="24.1" height="4.4" fill="rgb(171,171,171)"/><rect x="440.8" y="624.7" width="8.0" height="4.4" fill="rgb(171,171,171)"/><rect x="448.5" y="624.7" width="12.4" height="4.4" fill="rgb(168,168,168)"/><rect x="460.6" y="624.7" width="4.4" height="4.4" fill="rgb(165,165,165)"/><rect x="464.6" y="624.7" width="4.4" height="4.4" fill="rgb(162,162,162)"/><rect x="468.7" y="624.7" width="4.4" height="4.4" fill="rgb(156,156,156)"/><rect x="472.7" y="624.7" width="4.4" height="4.4" fill="rgb(147,147,147)"/><rect x="476.7" y="624.7" width="4.4" height="4.4" fill="rgb(132,132,132)"/><rect x="480.7" y="624.7" width="4.4" height="4.4" fill="rgb(114,114,114)"/><rect x="484.8" y="624.7" width="4.4" height="4.4" fill="rgb(108,108,108)"/><rect x="488.8" y="624.7" width="32.6" height="4.4" fill="rgb(105,105,105)"/><rect x="521.0" y="624.7" width="4.4" height="4.4" fill="rgb(123,123,123)"/><rect x="525.1" y="624.7" width="4.4" height="4.4" fill="rgb(138,138,138)"/><rect x="529.1" y="624.7" width="4.4" height="4.4" fill="rgb(147,147,147)"/><rect x="533.1" y="624.7" width="4.4" height="4.4" fill="rgb(156,156,156)"/><rect x="537.2" y="624.7" width="4.4" height="4.4" fill="rgb(159,159,159)"/><rect x="541.2" y="624.7" width="4.4" height="4.4" fill="rgb(162,162,162)"/><rect x="545.2" y="624.7" width="4.4" height="4.4" fill="rgb(165,165,165)"/><rect x="549.3" y="624.7" width="16.5" height="4.4" fill="rgb(168,168,168)"/><rect x="565.4" y="624.7" width="24.1" height="4.4" fill="rgb(171,171,171)"/><rect x="440.8" y="620.7" width="8.0" height="4.4" fill="rgb(171,171,171)"/><rect x="448.5" y="620.7" width="16.5" height="4.4" fill="rgb(168,168,168)"/><rect x="464.6" y="620.7" width="4.4" height="4.4" fill="rgb(165,165,165)"/><rect x="468.7" y="620.7" width="4.4" height="4.4" fill="rgb(162,162,162)"/><rect x="472.7" y="620.7" width="4.4" height="4.4" fill="rgb(156,156,156)"/><rect x="476.7" y="620.7" width="4.4" height="4.4" fill="rgb(150,150,150)"/><rect x="480.7" y="620.7" width="4.4" height="4.4" fill="rgb(141,141,141)"/><rect x="484.8" y="620.7" width="36.6" height="4.4" fill="rgb(138,138,138)"/><rect x="521.0" y="620.7" width="4.4" height="4.4" fill="rgb(144,144,144)"/><rect x="525.1" y="620.7" width="4.4" height="4.4" fill="rgb(153,153,153)"/><rect x="529.1" y="620.7" width="4.4" height="4.4" fill="rgb(159,159,159)"/><rect x="533.1" y="620.7" width="4.4" height="4.4" fill="rgb(162,162,162)"/><rect x="537.2" y="620.7" width="8.4" height="4.4" fill="rgb(165,165,165)"/><rect x="545.2" y="620.7" width="16.5" height="4.4" fill="rgb(168,168,168)"/><rect x="561.3" y="620.7" width="28.2" height="4.4" fill="rgb(171,171,171)"/><rect x="440.8" y="616.7" width="12.0" height="4.4" fill="rgb(171,171,171)"/><rect x="452.5" y="616.7" width="16.5" height="4.4" fill="rgb(168,168,168)"/><rect x="468.7" y="616.7" width="4.4" height="4.4" fill="rgb(165,165,165)"/><rect x="472.7" y="616.7" width="4.4" height="4.4" fill="rgb(162,162,162)"/><rect x="476.7" y="616.7" width="4.4" height="4.4" fill="rgb(159,159,159)"/><rect x="480.7" y="616.7" width="4.4" height="4.4" fill="rgb(156,156,156)"/><rect x="484.8" y="616.7" width="36.6" height="4.4" fill="rgb(153,153,153)"/><rect x="521.0" y="616.7" width="4.4" height="4.4" fill="rgb(156,156,156)"/><rect x="525.1" y="616.7" width="4.4" height="4.4" fill="rgb(159,159,159)"/><rect x="529.1" y="616.7" width="4.4" height="4.4" fill="rgb(162,162,162)"/><rect x="533.1" y="616.7" width="4.4" height="4.4" fill="rgb(165,165,165)"/><rect x="537.2" y="616.7" width="20.5" height="4.4" fill="rgb(168,168,168)"/><rect x="557.3" y="616.7" width="32.2" height="4.4" fill="rgb(171,171,171)"/><rect x="440.8" y="612.6" width="16.1" height="4.4" fill="rgb(171,171,171)"/><rect x="456.6" y="612.6" width="16.5" height="4.4" fill="rgb(168,168,168)"/><rect x="472.7" y="612.6" width="8.4" height="4.4" fill="rgb(165,165,165)"/><rect x="480.7" y="612.6" width="44.7" height="4.4" fill="rgb(162,162,162)"/><rect x="525.1" y="612.6" width="8.4" height="4.4" fill="rgb(165,165,165)"/><rect x="533.1" y="612.6" width="20.5" height="4.4" fill="rgb(168,168,168)"/><rect x="553.3" y="612.6" width="36.2" height="4.4" fill="rgb(171,171,171)"/><rect x="440.8" y="608.6" width="20.1" height="4.4" fill="rgb(171,171,171)"/><rect x="460.6" y="608.6" width="20.5" height="4.4" fill="rgb(168,168,168)"/><rect x="480.7" y="608.6" width="44.7" height="4.4" fill="rgb(165,165,165)"/><rect x="525.1" y="608.6" width="20.5" height="4.4" fill="rgb(168,168,168)"/><rect x="545.2" y="608.6" width="44.3" height="4.4" fill="rgb(171,171,171)"/><rect x="440.8" y="604.6" width="24.1" height="4.4" fill="rgb(171,171,171)"/><rect x="464.6" y="604.6" width="76.9" height="4.4" fill="rgb(168,168,168)"/><rect x="541.2" y="604.6" width="48.3" height="4.4" fill="rgb(171,171,171)"/><rect x="440.8" y="600.6" width="32.2" height="4.4" fill="rgb(171,171,171)"/><rect x="472.7" y="600.6" width="60.8" height="4.4" fill="rgb(168,168,168)"/><rect x="533.1" y="600.6" width="56.4" height="4.4" fill="rgb(171,171,171)"/><rect x="440.8" y="596.5" width="148.7" height="4.4" fill="rgb(171,171,171)"/><rect x="440.8" y="592.5" width="148.7" height="4.4" fill="rgb(171,171,171)"/><rect x="440.8" y="588.5" width="148.7" height="4.4" fill="rgb(171,171,171)"/><rect x="440.8" y="584.4" width="148.7" height="4.4" fill="rgb(171,171,171)"/><rect x="440.8" y="580.4" width="148.7" height="4.4" fill="rgb(171,171,171)"/><rect x="440.8" y="576.4" width="148.7" height="4.4" fill="rgb(171,171,171)"/><rect x="440.8" y="572.3" width="148.7" height="4.4" fill="rgb(171,171,171)"/><rect x="440.8" y="568.3" width="148.7" height="4.4" fill="rgb(171,171,171)"/><rect x="440.8" y="564.3" width="148.7" height="4.4" fill="rgb(171,171,171)"/><rect x="440.8" y="560.3" width="148.7" height="4.4" fill="rgb(171,171,171)"/><rect x="440.8" y="556.2" width="148.7" height="4.4" fill="rgb(171,171,171)"/><rect x="440.8" y="552.2" width="148.7" height="4.4" fill="rgb(171,171,171)"/><rect x="440.8" y="548.2" width="148.7" height="4.4" fill="rgb(171,171,171)"/><rect x="440.8" y="544.1" width="148.7" height="4.4" fill="rgb(171,171,171)"/><rect x="440.8" y="540.1" width="148.7" height="4.4" fill="rgb(171,171,171)"/><rect x="440.8" y="536.1" width="148.7" height="4.4" fill="rgb(171,171,171)"/><rect x="440.8" y="532.4" width="148.7" height="4.0" fill="rgb(171,171,171)"/></g>
</g>
<rect x="440.85" y="532.45" width="148.30" height="148.30" fill="none" stroke="#222" stroke-width="1.1"/>
<rect x="466.64" y="558.24" width="96.72" height="96.72" fill="none" stroke="rgb(255,0,0)" stroke-width="1.3"/>
<path d="M477.92,606.60H507.75M522.25,606.60H552.08M515.00,569.52V599.35M515.00,613.85V643.68" stroke="rgb(255,0,0)" stroke-width="1.3"/>
<circle cx="515.00" cy="606.60" r="47.23" fill="none" stroke="rgb(240,200,0)" stroke-width="1.4"/>
<g clip-path="url(#pc2)"><ellipse cx="507.75" cy="667.86" rx="56.42" ry="37.88" fill="none" stroke="#eee" stroke-width="1.1" stroke-dasharray="4,2.5"/></g>
<text x="515.00" y="548.33" font-size="10" font-family="'Liberation Sans', sans-serif" fill="rgb(255,0,0)" text-anchor="middle" textLength="7.48" lengthAdjust="spacingAndGlyphs" xml:space="preserve">N</text>
<text x="451.33" y="610.30" font-size="10" font-family="'Liberation Sans', sans-serif" fill="rgb(255,0,0)" text-anchor="middle" textLength="6.32" lengthAdjust="spacingAndGlyphs" xml:space="preserve">E</text>
<line x1="450.52" y1="680.75" x2="450.52" y2="684.25" stroke="#222" stroke-width="0.9"/>
<text x="450.52" y="696.20" font-size="10" font-family="'Liberation Sans', sans-serif" fill="#000" text-anchor="middle" textLength="14.74" lengthAdjust="spacingAndGlyphs" xml:space="preserve">−4</text>
<line x1="437.35" y1="671.08" x2="440.85" y2="671.08" stroke="#222" stroke-width="0.9"/>
<text x="433.25" y="675.08" font-size="10" font-family="'Liberation Sans', sans-serif" fill="#000" text-anchor="end" textLength="14.74" lengthAdjust="spacingAndGlyphs" xml:space="preserve">−4</text>
<line x1="482.76" y1="680.75" x2="482.76" y2="684.25" stroke="#222" stroke-width="0.9"/>
<text x="482.76" y="696.20" font-size="10" font-family="'Liberation Sans', sans-serif" fill="#000" text-anchor="middle" textLength="14.74" lengthAdjust="spacingAndGlyphs" xml:space="preserve">−2</text>
<line x1="437.35" y1="638.84" x2="440.85" y2="638.84" stroke="#222" stroke-width="0.9"/>
<text x="433.25" y="642.84" font-size="10" font-family="'Liberation Sans', sans-serif" fill="#000" text-anchor="end" textLength="14.74" lengthAdjust="spacingAndGlyphs" xml:space="preserve">−2</text>
<line x1="515.00" y1="680.75" x2="515.00" y2="684.25" stroke="#222" stroke-width="0.9"/>
<text x="515.00" y="696.20" font-size="10" font-family="'Liberation Sans', sans-serif" fill="#000" text-anchor="middle" textLength="6.36" lengthAdjust="spacingAndGlyphs" xml:space="preserve">0</text>
<line x1="437.35" y1="606.60" x2="440.85" y2="606.60" stroke="#222" stroke-width="0.9"/>
<text x="433.25" y="610.60" font-size="10" font-family="'Liberation Sans', sans-serif" fill="#000" text-anchor="end" textLength="6.36" lengthAdjust="spacingAndGlyphs" xml:space="preserve">0</text>
<line x1="547.24" y1="680.75" x2="547.24" y2="684.25" stroke="#222" stroke-width="0.9"/>
<text x="547.24" y="696.20" font-size="10" font-family="'Liberation Sans', sans-serif" fill="#000" text-anchor="middle" textLength="6.36" lengthAdjust="spacingAndGlyphs" xml:space="preserve">2</text>
<line x1="437.35" y1="574.36" x2="440.85" y2="574.36" stroke="#222" stroke-width="0.9"/>
<text x="433.25" y="578.36" font-size="10" font-family="'Liberation Sans', sans-serif" fill="#000" text-anchor="end" textLength="6.36" lengthAdjust="spacingAndGlyphs" xml:space="preserve">2</text>
<line x1="579.48" y1="680.75" x2="579.48" y2="684.25" stroke="#222" stroke-width="0.9"/>
<text x="579.48" y="696.20" font-size="10" font-family="'Liberation Sans', sans-serif" fill="#000" text-anchor="middle" textLength="6.36" lengthAdjust="spacingAndGlyphs" xml:space="preserve">4</text>
<line x1="437.35" y1="542.12" x2="440.85" y2="542.12" stroke="#222" stroke-width="0.9"/>
<text x="433.25" y="546.12" font-size="10" font-family="'Liberation Sans', sans-serif" fill="#000" text-anchor="end" textLength="6.36" lengthAdjust="spacingAndGlyphs" xml:space="preserve">4</text>
<text x="699.80" y="525.80" font-size="12.8" font-family="'Liberation Sans', sans-serif" fill="#000" text-anchor="middle" textLength="97.80" lengthAdjust="spacingAndGlyphs" xml:space="preserve">DECaLS(24.0) r</text>
<g clip-path="url(#pc3)">
<g shape-rendering="crispEdges"><rect x="625.6" y="677.1" width="4.0" height="4.0" fill="rgb(240,240,240)"/><rect x="629.3" y="677.1" width="4.4" height="4.0" fill="rgb(231,231,231)"/><rect x="633.3" y="677.1" width="4.4" height="4.0" fill="rgb(222,222,222)"/><rect x="637.3" y="677.1" width="4.4" height="4.0" fill="rgb(207,207,207)"/><rect x="641.4" y="677.1" width="4.4" height="4.0" fill="rgb(183,183,183)"/><rect x="645.4" y="677.1" width="4.4" height="4.0" fill="rgb(147,147,147)"/><rect x="649.4" y="677.1" width="4.4" height="4.0" fill="rgb(90,90,90)"/><rect x="653.5" y="677.1" width="4.4" height="4.0" fill="rgb(3,3,3)"/><rect x="657.5" y="677.1" width="64.8" height="4.0" fill="rgb(0,0,0)"/><rect x="722.0" y="677.1" width="4.4" height="4.0" fill="rgb(225,225,225)"/><rect x="726.0" y="677.1" width="4.4" height="4.0" fill="rgb(159,159,159)"/><rect x="730.0" y="677.1" width="4.4" height="4.0" fill="rgb(201,201,201)"/><rect x="734.1" y="677.1" width="4.4" height="4.0" fill="rgb(225,225,225)"/><rect x="738.1" y="677.1" width="4.4" height="4.0" fill="rgb(237,237,237)"/><rect x="742.1" y="677.1" width="4.4" height="4.0" fill="rgb(243,243,243)"/><rect x="746.1" y="677.1" width="8.4" height="4.0" fill="rgb(249,249,249)"/><rect x="754.2" y="677.1" width="20.1" height="4.0" fill="rgb(252,252,252)"/><rect x="625.6" y="673.1" width="4.0" height="4.4" fill="rgb(240,240,240)"/><rect x="629.3" y="673.1" width="4.4" height="4.4" fill="rgb(231,231,231)"/><rect x="633.3" y="673.1" width="4.4" height="4.4" fill="rgb(222,222,222)"/><rect x="637.3" y="673.1" width="4.4" height="4.4" fill="rgb(207,207,207)"/><rect x="641.4" y="673.1" width="4.4" height="4.4" fill="rgb(183,183,183)"/><rect x="645.4" y="673.1" width="4.4" height="4.4" fill="rgb(147,147,147)"/><rect x="649.4" y="673.1" width="4.4" height="4.4" fill="rgb(90,90,90)"/><rect x="653.5" y="673.1" width="4.4" height="4.4" fill="rgb(6,6,6)"/><rect x="657.5" y="673.1" width="64.8" height="4.4" fill="rgb(0,0,0)"/><rect x="722.0" y="673.1" width="4.4" height="4.4" fill="rgb(225,225,225)"/><rect x="726.0" y="673.1" width="4.4" height="4.4" fill="rgb(165,165,165)"/><rect x="730.0" y="673.1" width="4.4" height="4.4" fill="rgb(204,204,204)"/><rect x="734.1" y="673.1" width="4.4" height="4.4" fill="rgb(228,228,228)"/><rect x="738.1" y="673.1" width="4.4" height="4.4" fill="rgb(240,240,240)"/><rect x="742.1" y="673.1" width="4.4" height="4.4" fill="rgb(246,246,246)"/><rect x="746.1" y="673.1" width="8.4" height="4.4" fill="rgb(249,249,249)"/><rect x="754.2" y="673.1" width="20.1" height="4.4" fill="rgb(252,252,252)"/><rect x="625.6" y="669.1" width="4.0" height="4.4" fill="rgb(237,237,237)"/><rect x="629.3" y="669.1" width="4.4" height="4.4" fill="rgb(231,231,231)"/><rect x="633.3" y="669.1" width="4.4" height="4.4" fill="rgb(222,222,222)"/><rect x="637.3" y="669.1" width="4.4" height="4.4" fill="rgb(207,207,207)"/><rect x="641.4" y="669.1" width="4.4" height="4.4" fill="rgb(183,183,183)"/><rect x="645.4" y="669.1" width="4.4" height="4.4" fill="rgb(147,147,147)"/><rect x="649.4" y="669.1" width="4.4" height="4.4" fill="rgb(93,93,93)"/><rect x="653.5" y="669.1" width="4.4" height="4.4" fill="rgb(9,9,9)"/><rect x="657.5" y="669.1" width="64.8" height="4.4" fill="rgb(0,0,0)"/><rect x="722.0" y="669.1" width="4.4" height="4.4" fill="rgb(225,225,225)"/><rect x="726.0" y="669.1" width="4.4" height="4.4" fill="rgb(171,171,171)"/><rect x="730.0" y="669.1" width="4.4" height="4.4" fill="rgb(210,210,210)"/><rect x="734.1" y="669.1" width="4.4" height="4.4" fill="rgb(231,231,231)"/><rect x="738.1" y="669.1" width="4.4" height="4.4" fill="rgb(240,240,240)"/><rect x="742.1" y="669.1" width="4.4" height="4.4" fill="rgb(246,246,246)"/><rect x="746.1" y="669.1" width="8.4" height="4.4" fill="rgb(249,249,249)"/><rect x="754.2" y="669.1" width="20.1" height="4.4" fill="rgb(252,252,252)"/><rect x="625.6" y="665.0" width="4.0" height="4.4" fill="rgb(237,237,237)"/><rect x="629.3" y="665.0" width="4.4" height="4.4" fill="rgb(231,231,231)"/><rect x="633.3" y="665.0" width="4.4" height="4.4" fill="rgb(222,222,222)"/><rect x="637.3" y="665.0" width="4.4" height="4.4" fill="rgb(204,204,204)"/><rect x="641.4" y="665.0" width="4.4" height="4.4" fill="rgb(183,183,183)"/><rect x="645.4" y="665.0" width="4.4" height="4.4" fill="rgb(147,147,147)"/><rect x="649.4" y="665.0" width="4.4" height="4.4" fill="rgb(93,93,93)"/><rect x="653.5" y="665.0" width="4.4" height="4.4" fill="rgb(15,15,15)"/><rect x="657.5" y="665.0" width="64.8" height="4.4" fill="rgb(0,0,0)"/><rect x="722.0" y="665.0" width="4.4" height="4.4" fill="rgb(225,225,225)"/><rect x="726.0" y="665.0" width="4.4" height="4.4" fill="rgb(177,177,177)"/><rect x="730.0" y="665.0" width="4.4" height="4.4" fill="rgb(213,213,213)"/><rect x="734.1" y="665.0" width="4.4" height="4.4" fill="rgb(234,234,234)"/><rect x="738.1" y="665.0" width="4.4" height="4.4" fill="rgb(243,243,243)"/><rect x="742.1" y="665.0" width="4.4" height="4.4" fill="rgb(246,246,246)"/><rect x="746.1" y="665.0" width="4.4" height="4.4" fill="rgb(249,249,249)"/><rect x="750.2" y="665.0" width="24.1" height="4.4" fill="rgb(252,252,252)"/><rect x="625.6" y="661.0" width="4.0" height="4.4" fill="rgb(237,237,237)"/><rect x="629.3" y="661.0" width="4.4" height="4.4" fill="rgb(231,231,231)"/><rect x="633.3" y="661.0" width="4.4" height="4.4" fill="rgb(222,222,222)"/><rect x="637.3" y="661.0" width="4.4" height="4.4" fill="rgb(204,204,204)"/><rect x="641.4" y="661.0" width="4.4" height="4.4" fill="rgb(183,183,183)"/><rect x="645.4" y="661.0" width="4.4" height="4.4" fill="rgb(147,147,147)"/><rect x="649.4" y="661.0" width="4.4" height="4.4" fill="rgb(96,96,96)"/><rect x="653.5" y="661.0" width="4.4" height="4.4" fill="rgb(18,18,18)"/><rect x="657.5" y="661.0" width="64.8" height="4.4" fill="rgb(0,0,0)"/><rect x="722.0" y="661.0" width="4.4" height="4.4" fill="rgb(225,225,225)"/><rect x="726.0" y="661.0" width="4.4" height="4.4" fill="rgb(183,183,183)"/><rect x="730.0" y="661.0" width="4.4" height="4.4" fill="rgb(219,219,219)"/><rect x="734.1" y="661.0" width="4.4" height="4.4" fill="rgb(234,234,234)"/><rect x="738.1" y="661.0" width="4.4" height="4.4" fill="rgb(243,243,243)"/><rect x="742.1" y="661.0" width="8.4" height="4.4" fill="rgb(249,249,249)"/><rect x="750.2" y="661.0" width="24.1" height="4.4" fill="rgb(252,252,252)"/><rect x="625.6" y="657.0" width="4.0" height="4.4" fill="rgb(240,240,240)"/><rect x="629.3" y="657.0" width="4.4" height="4.4" fill="rgb(231,231,231)"/><rect x="633.3" y="657.0" width="4.4" height="4.4" fill="rgb(222,222,222)"/><rect x="637.3" y="657.0" width="4.4" height="4.4" fill="rgb(207,207,207)"/><rect x="641.4" y="657.0" width="4.4" height="4.4" fill="rgb(183,183,183)"/><rect x="645.4" y="657.0" width="4.4" height="4.4" fill="rgb(150,150,150)"/><rect x="649.4" y="657.0" width="4.4" height="4.4" fill="rgb(99,99,99)"/><rect x="653.5" y="657.0" width="4.4" height="4.4" fill="rgb(27,27,27)"/><rect x="657.5" y="657.0" width="64.8" height="4.4" fill="rgb(0,0,0)"/><rect x="722.0" y="657.0" width="4.4" height="4.4" fill="rgb(102,102,102)"/><rect x="726.0" y="657.0" width="4.4" height="4.4" fill="rgb(177,177,177)"/><rect x="730.0" y="657.0" width="4.4" height="4.4" fill="rgb(213,213,213)"/><rect x="734.1" y="657.0" width="4.4" height="4.4" fill="rgb(234,234,234)"/><rect x="738.1" y="657.0" width="4.4" height="4.4" fill="rgb(243,243,243)"/><rect x="742.1" y="657.0" width="4.4" height="4.4" fill="rgb(246,246,246)"/><rect x="746.1" y="657.0" width="4.4" height="4.4" fill="rgb(249,249,249)"/><rect x="750.2" y="657.0" width="24.1" height="4.4" fill="rgb(252,252,252)"/><rect x="625.6" y="652.9" width="4.0" height="4.4" fill="rgb(240,240,240)"/><rect x="629.3" y="652.9" width="4.4" height="4.4" fill="rgb(234,234,234)"/><rect x="633.3" y="652.9" width="4.4" height="4.4" fill="rgb(225,225,225)"/><rect x="637.3" y="652.9" width="4.4" height="4.4" fill="rgb(210,210,210)"/><rect x="641.4" y="652.9" width="4.4" height="4.4" fill="rgb(192,192,192)"/><rect x="645.4" y="652.9" width="4.4" height="4.4" fill="rgb(162,162,162)"/><rect x="649.4" y="652.9" width="4.4" height="4.4" fill="rgb(120,120,120)"/><rect x="653.5" y="652.9" width="4.4" height="4.4" fill="rgb(60,60,60)"/><rect x="657.5" y="652.9" width="60.8" height="4.4" fill="rgb(0,0,0)"/><rect x="717.9" y="652.9" width="4.4" height="4.4" fill="rgb(9,9,9)"/><rect x="722.0" y="652.9" width="4.4" height="4.4" fill="rgb(117,117,117)"/><rect x="726.0" y="652.9" width="4.4" height="4.4" fill="rgb(177,177,177)"/><rect x="730.0" y="652.9" width="4.4" height="4.4" fill="rgb(213,213,213)"/><rect x="734.1" y="652.9" width="4.4" height="4.4" fill="rgb(231,231,231)"/><rect x="738.1" y="652.9" width="4.4" height="4.4" fill="rgb(240,240,240)"/><rect x="742.1" y="652.9" width="4.4" height="4.4" fill="rgb(246,246,246)"/><rect x="746.1" y="652.9" width="4.4" height="4.4" fill="rgb(249,249,249)"/><rect x="750.2" y="652.9" width="24.1" height="4.4" fill="rgb(252,252,252)"/><rect x="625.6" y="648.9" width="4.0" height="4.4" fill="rgb(240,240,240)"/><rect x="629.3" y="648.9" width="4.4" height="4.4" fill="rgb(237,237,237)"/><rect x="633.3" y="648.9" width="4.4" height="4.4" fill="rgb(228,228,228)"/><rect x="637.3" y="648.9" width="4.4" height="4.4" fill="rgb(216,216,216)"/><rect x="641.4" y="648.9" width="4.4" height="4.4" fill="rgb(201,201,201)"/><rect x="645.4" y="648.9" width="4.4" height="4.4" fill="rgb(177,177,177)"/><rect x="649.4" y="648.9" width="4.4" height="4.4" fill="rgb(144,144,144)"/><rect x="653.5" y="648.9" width="4.4" height="4.4" fill="rgb(90,90,90)"/><rect x="657.5" y="648.9" width="4.4" height="4.4" fill="rgb(15,15,15)"/><rect x="661.5" y="648.9" width="56.8" height="4.4" fill="rgb(0,0,0)"/><rect x="717.9" y="648.9" width="4.4" height="4.4" fill="rgb(48,48,48)"/><rect x="722.0" y="648.9" width="4.4" height="4.4" fill="rgb(135,135,135)"/><rect x="726.0" y="648.9" width="4.4" height="4.4" fill="rgb(186,186,186)"/><rect x="730.0" y="648.9" width="4.4" height="4.4" fill="rgb(216,216,216)"/><rect x="734.1" y="648.9" width="4.4" height="4.4" fill="rgb(231,231,231)"/><rect x="738.1" y="648.9" width="4.4" height="4.4" fill="rgb(240,240,240)"/><rect x="742.1" y="648.9" width="4.4" height="4.4" fill="rgb(246,246,246)"/><rect x="746.1" y="648.9" width="8.4" height="4.4" fill="rgb(249,249,249)"/><rect x="754.2" y="648.9" width="20.1" height="4.4" fill="rgb(252,252,252)"/><rect x="625.6" y="644.9" width="4.0" height="4.4" fill="rgb(243,243,243)"/><rect x="629.3" y="644.9" width="4.4" height="4.4" fill="rgb(240,240,240)"/><rect x="633.3" y="644.9" width="4.4" height="4.4" fill="rgb(231,231,231)"/><rect x="637.3" y="644.9" width="4.4" height="4.4" fill="rgb(222,222,222)"/><rect x="641.4" y="644.9" width="4.4" height="4.4" fill="rgb(210,210,210)"/><rect x="645.4" y="644.9" width="4.4" height="4.4" fill="rgb(189,189,189)"/><rect x="649.4" y="644.9" width="4.4" height="4.4" fill="rgb(162,162,162)"/><rect x="653.5" y="644.9" width="4.4" height="4.4" fill="rgb(117,117,117)"/><rect x="657.5" y="644.9" width="4.4" height="4.4" fill="rgb(54,54,54)"/><rect x="661.5" y="644.9" width="56.8" height="4.4" fill="rgb(0,0,0)"/><rect x="717.9" y="644.9" width="4.4" height="4.4" fill="rgb(87,87,87)"/><rect x="722.0" y="644.9" width="4.4" height="4.4" fill="rgb(150,150,150)"/><rect x="726.0" y="644.9" width="4.4" height="4.4" fill="rgb(192,192,192)"/><rect x="730.0" y="644.9" width="4.4" height="4.4" fill="rgb(219,219,219)"/><rect x="734.1" y="644.9" width="4.4" height="4.4" fill="rgb(234,234,234)"/><rect x="738.1" y="644.9" width="4.4" height="4.4" fill="rgb(243,243,243)"/><rect x="742.1" y="644.9" width="4.4" height="4.4" fill="rgb(246,246,246)"/><rect x="746.1" y="644.9" width="8.4" height="4.4" fill="rgb(249,249,249)"/><rect x="754.2" y="644.9" width="20.1" height="4.4" fill="rgb(252,252,252)"/><rect x="625.6" y="640.9" width="4.0" height="4.4" fill="rgb(243,243,243)"/><rect x="629.3" y="640.9" width="4.4" height="4.4" fill="rgb(240,240,240)"/><rect x="633.3" y="640.9" width="4.4" height="4.4" fill="rgb(237,237,237)"/><rect x="637.3" y="640.9" width="4.4" height="4.4" fill="rgb(228,228,228)"/><rect x="641.4" y="640.9" width="4.4" height="4.4" fill="rgb(216,216,216)"/><rect x="645.4" y="640.9" width="4.4" height="4.4" fill="rgb(201,201,201)"/><rect x="649.4" y="640.9" width="4.4" height="4.4" fill="rgb(177,177,177)"/><rect x="653.5" y="640.9" width="4.4" height="4.4" fill="rgb(141,141,141)"/><rect x="657.5" y="640.9" width="4.4" height="4.4" fill="rgb(87,87,87)"/><rect x="661.5" y="640.9" width="4.4" height="4.4" fill="rgb(3,3,3)"/><rect x="665.5" y="640.9" width="48.7" height="4.4" fill="rgb(0,0,0)"/><rect x="713.9" y="640.9" width="4.4" height="4.4" fill="rgb(69,69,69)"/><rect x="717.9" y="640.9" width="4.4" height="4.4" fill="rgb(129,129,129)"/><rect x="722.0" y="640.9" width="4.4" height="4.4" fill="rgb(171,171,171)"/><rect x="726.0" y="640.9" width="4.4" height="4.4" fill="rgb(201,201,201)"/><rect x="730.0" y="640.9" width="4.4" height="4.4" fill="rgb(222,222,222)"/><rect x="734.1" y="640.9" width="4.4" height="4.4" fill="rgb(234,234,234)"/><rect x="738.1" y="640.9" width="4.4" height="4.4" fill="rgb(243,243,243)"/><rect x="742.1" y="640.9" width="4.4" height="4.4" fill="rgb(246,246,246)"/><rect x="746.1" y="640.9" width="8.4" height="4.4" fill="rgb(249,249,249)"/><rect x="754.2" y="640.9" width="20.1" height="4.4" fill="rgb(252,252,252)"/><rect x="625.6" y="636.8" width="4.0" height="4.4" fill="rgb(246,246,246)"/><rect x="629.3" y="636.8" width="4.4" height="4.4" fill="rgb(243,243,243)"/><rect x="633.3" y="636.8" width="4.4" height="4.4" fill="rgb(240,240,240)"/><rect x="637.3" y="636.8" width="4.4" height="4.4" fill="rgb(234,234,234)"/><rect x="641.4" y="636.8" width="4.4" height="4.4" fill="rgb(225,225,225)"/><rect x="645.4" y="636.8" width="4.4" height="4.4" fill="rgb(210,210,210)"/><rect x="649.4" y="636.8" width="4.4" height="4.4" fill="rgb(189,189,189)"/><rect x="653.5" y="636.8" width="4.4" height="4.4" fill="rgb(159,159,159)"/><rect x="657.5" y="636.8" width="4.4" height="4.4" fill="rgb(114,114,114)"/><rect x="661.5" y="636.8" width="4.4" height="4.4" fill="rgb(63,63,63)"/><rect x="665.5" y="636.8" width="4.4" height="4.4" fill="rgb(12,12,12)"/><rect x="669.6" y="636.8" width="36.6" height="4.4" fill="rgb(0,0,0)"/><rect x="705.8" y="636.8" width="4.4" height="4.4" fill="rgb(12,12,12)"/><rect x="709.9" y="636.8" width="4.4" height="4.4" fill="rgb(63,63,63)"/><rect x="713.9" y="636.8" width="4.4" height="4.4" fill="rgb(117,117,117)"/><rect x="717.9" y="636.8" width="4.4" height="4.4" fill="rgb(162,162,162)"/><rect x="722.0" y="636.8" width="4.4" height="4.4" fill="rgb(189,189,189)"/><rect x="726.0" y="636.8" width="4.4" height="4.4" fill="rgb(213,213,213)"/><rect x="730.0" y="636.8" width="4.4" height="4.4" fill="rgb(228,228,228)"/><rect x="734.1" y="636.8" width="4.4" height="4.4" fill="rgb(237,237,237)"/><rect x="738.1" y="636.8" width="4.4" height="4.4" fill="rgb(243,243,243)"/><rect x="742.1" y="636.8" width="4.4" height="4.4" fill="rgb(246,246,246)"/><rect x="746.1" y="636.8" width="8.4" height="4.4" fill="rgb(249,249,249)"/><rect x="754.2" y="636.8" width="20.1" height="4.4" fill="rgb(252,252,252)"/><rect x="625.6" y="632.8" width="8.0" height="4.4" fill="rgb(246,246,246)"/><rect x="633.3" y="632.8" width="4.4" height="4.4" fill="rgb(240,240,240)"/><rect x="637.3" y="632.8" width="4.4" height="4.4" fill="rgb(237,237,237)"/><rect x="641.4" y="632.8" width="4.4" height="4.4" fill="rgb(228,228,228)"/><rect x="645.4" y="632.8" width="4.4" height="4.4" fill="rgb(219,219,219)"/><rect x="649.4" y="632.8" width="4.4" height="4.4" fill="rgb(201,201,201)"/><rect x="653.5" y="632.8" width="4.4" height="4.4" fill="rgb(180,180,180)"/><rect x="657.5" y="632.8" width="4.4" height="4.4" fill="rgb(150,150,150)"/><rect x="661.5" y="632.8" width="4.4" height="4.4" fill="rgb(126,126,126)"/><rect x="665.5" y="632.8" width="4.4" height="4.4" fill="rgb(90,90,90)"/><rect x="669.6" y="632.8" width="4.4" height="4.4" fill="rgb(45,45,45)"/><rect x="673.6" y="632.8" width="28.6" height="4.4" fill="rgb(0,0,0)"/><rect x="701.8" y="632.8" width="4.4" height="4.4" fill="rgb(54,54,54)"/><rect x="705.8" y="632.8" width="4.4" height="4.4" fill="rgb(96,96,96)"/><rect x="709.9" y="632.8" width="4.4" height="4.4" fill="rgb(129,129,129)"/><rect x="713.9" y="632.8" width="4.4" height="4.4" fill="rgb(156,156,156)"/><rect x="717.9" y="632.8" width="4.4" height="4.4" fill="rgb(186,186,186)"/><rect x="722.0" y="632.8" width="4.4" height="4.4" fill="rgb(207,207,207)"/><rect x="726.0" y="632.8" width="4.4" height="4.4" fill="rgb(222,222,222)"/><rect x="730.0" y="632.8" width="4.4" height="4.4" fill="rgb(231,231,231)"/><rect x="734.1" y="632.8" width="4.4" height="4.4" fill="rgb(240,240,240)"/><rect x="738.1" y="632.8" width="4.4" height="4.4" fill="rgb(243,243,243)"/><rect x="742.1" y="632.8" width="4.4" height="4.4" fill="rgb(246,246,246)"/><rect x="746.1" y="632.8" width="8.4" height="4.4" fill="rgb(249,249,249)"/><rect x="754.2" y="632.8" width="20.1" height="4.4" fill="rgb(252,252,252)"/><rect x="625.6" y="628.8" width="4.0" height="4.4" fill="rgb(249,249,249)"/><rect x="629.3" y="628.8" width="4.4" height="4.4" fill="rgb(246,246,246)"/><rect x="633.3" y="628.8" width="4.4" height="4.4" fill="rgb(243,243,243)"/><rect x="637.3" y="628.8" width="4.4" height="4.4" fill="rgb(240,240,240)"/><rect x="641.4" y="628.8" width="4.4" height="4.4" fill="rgb(234,234,234)"/><rect x="645.4" y="628.8" width="4.4" height="4.4" fill="rgb(225,225,225)"/><rect x="649.4" y="628.8" width="4.4" height="4.4" fill="rgb(213,213,213)"/><rect x="653.5" y="628.8" width="4.4" height="4.4" fill="rgb(198,198,198)"/><rect x="657.5" y="628.8" width="4.4" height="4.4" fill="rgb(186,186,186)"/><rect x="661.5" y="628.8" width="4.4" height="4.4" fill="rgb(168,168,168)"/><rect x="665.5" y="628.8" width="4.4" height="4.4" fill="rgb(144,144,144)"/><rect x="669.6" y="628.8" width="4.4" height="4.4" fill="rgb(117,117,117)"/><rect x="673.6" y="628.8" width="24.5" height="4.4" fill="rgb(90,90,90)"/><rect x="697.8" y="628.8" width="4.4" height="4.4" fill="rgb(93,93,93)"/><rect x="701.8" y="628.8" width="4.4" height="4.4" fill="rgb(123,123,123)"/><rect x="705.8" y="628.8" width="4.4" height="4.4" fill="rgb(153,153,153)"/><rect x="709.9" y="628.8" width="4.4" height="4.4" fill="rgb(174,174,174)"/><rect x="713.9" y="628.8" width="4.4" height="4.4" fill="rgb(189,189,189)"/><rect x="717.9" y="628.8" width="4.4" height="4.4" fill="rgb(204,204,204)"/><rect x="722.0" y="628.8" width="4.4" height="4.4" fill="rgb(219,219,219)"/><rect x="726.0" y="628.8" width="4.4" height="4.4" fill="rgb(231,231,231)"/><rect x="730.0" y="628.8" width="4.4" height="4.4" fill="rgb(237,237,237)"/><rect x="734.1" y="628.8" width="4.4" height="4.4" fill="rgb(243,243,243)"/><rect x="738.1" y="628.8" width="4.4" height="4.4" fill="rgb(246,246,246)"/><rect x="742.1" y="628.8" width="8.4" height="4.4" fill="rgb(249,249,249)"/><rect x="750.2" y="628.8" width="24.1" height="4.4" fill="rgb(252,252,252)"/><rect x="625.6" y="624.7" width="4.0" height="4.4" fill="rgb(249,249,249)"/><rect x="629.3" y="624.7" width="8.4" height="4.4" fill="rgb(246,246,246)"/><rect x="637.3" y="624.7" width="4.4" height="4.4" fill="rgb(243,243,243)"/><rect x="641.4" y="624.7" width="4.4" height="4.4" fill="rgb(237,237,237)"/><rect x="645.4" y="624.7" width="4.4" height="4.4" fill="rgb(231,231,231)"/><rect x="649.4" y="624.7" width="4.4" height="4.4" fill="rgb(225,225,225)"/><rect x="653.5" y="624.7" width="4.4" height="4.4" fill="rgb(216,216,216)"/><rect x="657.5" y="624.7" width="4.4" height="4.4" fill="rgb(207,207,207)"/><rect x="661.5" y="624.7" width="4.4" height="4.4" fill="rgb(195,195,195)"/><rect x="665.5" y="624.7" width="4.4" height="4.4" fill="rgb(183,183,183)"/><rect x="669.6" y="624.7" width="4.4" height="4.4" fill="rgb(162,162,162)"/><rect x="673.6" y="624.7" width="28.6" height="4.4" fill="rgb(153,153,153)"/><rect x="701.8" y="624.7" width="4.4" height="4.4" fill="rgb(168,168,168)"/><rect x="705.8" y="624.7" width="4.4" height="4.4" fill="rgb(186,186,186)"/><rect x="709.9" y="624.7" width="4.4" height="4.4" fill="rgb(201,201,201)"/><rect x="713.9" y="624.7" width="4.4" height="4.4" fill="rgb(213,213,213)"/><rect x="717.9" y="624.7" width="4.4" height="4.4" fill="rgb(222,222,222)"/><rect x="722.0" y="624.7" width="4.4" height="4.4" fill="rgb(228,228,228)"/><rect x="726.0" y="624.7" width="4.4" height="4.4" fill="rgb(237,237,237)"/><rect x="730.0" y="624.7" width="4.4" height="4.4" fill="rgb(240,240,240)"/><rect x="734.1" y="624.7" width="4.4" height="4.4" fill="rgb(243,243,243)"/><rect x="738.1" y="624.7" width="4.4" height="4.4" fill="rgb(246,246,246)"/><rect x="742.1" y="624.7" width="8.4" height="4.4" fill="rgb(249,249,249)"/><rect x="750.2" y="624.7" width="24.1" height="4.4" fill="rgb(252,252,252)"/><rect x="625.6" y="620.7" width="8.0" height="4.4" fill="rgb(249,249,249)"/><rect x="633.3" y="620.7" width="4.4" height="4.4" fill="rgb(246,246,246)"/><rect x="637.3" y="620.7" width="4.4" height="4.4" fill="rgb(243,243,243)"/><rect x="641.4" y="620.7" width="4.4" height="4.4" fill="rgb(240,240,240)"/><rect x="645.4" y="620.7" width="4.4" height="4.4" fill="rgb(237,237,237)"/><rect x="649.4" y="620.7" width="4.4" height="4.4" fill="rgb(234,234,234)"/><rect x="653.5" y="620.7" width="4.4" height="4.4" fill="rgb(228,228,228)"/><rect x="657.5" y="620.7" width="4.4" height="4.4" fill="rgb(222,222,222)"/><rect x="661.5" y="620.7" width="4.4" height="4.4" fill="rgb(216,216,216)"/><rect x="665.5" y="620.7" width="4.4" height="4.4" fill="rgb(207,207,207)"/><rect x="669.6" y="620.7" width="4.4" height="4.4" fill="rgb(195,195,195)"/><rect x="673.6" y="620.7" width="28.6" height="4.4" fill="rgb(192,192,192)"/><rect x="701.8" y="620.7" width="4.4" height="4.4" fill="rgb(198,198,198)"/><rect x="705.8" y="620.7" width="4.4" height="4.4" fill="rgb(210,210,210)"/><rect x="709.9" y="620.7" width="4.4" height="4.4" fill="rgb(219,219,219)"/><rect x="713.9" y="620.7" width="4.4" height="4.4" fill="rgb(225,225,225)"/><rect x="717.9" y="620.7" width="4.4" height="4.4" fill="rgb(231,231,231)"/><rect x="722.0" y="620.7" width="4.4" height="4.4" fill="rgb(237,237,237)"/><rect x="726.0" y="620.7" width="4.4" height="4.4" fill="rgb(240,240,240)"/><rect x="730.0" y="620.7" width="4.4" height="4.4" fill="rgb(243,243,243)"/><rect x="734.1" y="620.7" width="4.4" height="4.4" fill="rgb(246,246,246)"/><rect x="738.1" y="620.7" width="12.4" height="4.4" fill="rgb(249,249,249)"/><rect x="750.2" y="620.7" width="24.1" height="4.4" fill="rgb(252,252,252)"/><rect x="625.6" y="616.7" width="12.0" height="4.4" fill="rgb(249,249,249)"/><rect x="637.3" y="616.7" width="4.4" height="4.4" fill="rgb(246,246,246)"/><rect x="641.4" y="616.7" width="8.4" height="4.4" fill="rgb(243,243,243)"/><rect x="649.4" y="616.7" width="4.4" height="4.4" fill="rgb(240,240,240)"/><rect x="653.5" y="616.7" width="4.4" height="4.4" fill="rgb(237,237,237)"/><rect x="657.5" y="616.7" width="4.4" height="4.4" fill="rgb(234,234,234)"/><rect x="661.5" y="616.7" width="4.4" height="4.4" fill="rgb(228,228,228)"/><rect x="665.5" y="616.7" width="4.4" height="4.4" fill="rgb(222,222,222)"/><rect x="669.6" y="616.7" width="4.4" height="4.4" fill="rgb(219,219,219)"/><rect x="673.6" y="616.7" width="28.6" height="4.4" fill="rgb(216,216,216)"/><rect x="701.8" y="616.7" width="4.4" height="4.4" fill="rgb(219,219,219)"/><rect x="705.8" y="616.7" width="4.4" height="4.4" fill="rgb(225,225,225)"/><rect x="709.9" y="616.7" width="4.4" height="4.4" fill="rgb(231,231,231)"/><rect x="713.9" y="616.7" width="4.4" height="4.4" fill="rgb(234,234,234)"/><rect x="717.9" y="616.7" width="4.4" height="4.4" fill="rgb(240,240,240)"/><rect x="722.0" y="616.7" width="8.4" height="4.4" fill="rgb(243,243,243)"/><rect x="730.0" y="616.7" width="4.4" height="4.4" fill="rgb(246,246,246)"/><rect x="734.1" y="616.7" width="12.4" height="4.4" fill="rgb(249,249,249)"/><rect x="746.1" y="616.7" width="28.2" height="4.4" fill="rgb(252,252,252)"/><rect x="625.6" y="612.6" width="16.1" height="4.4" fill="rgb(249,249,249)"/><rect x="641.4" y="612.6" width="8.4" height="4.4" fill="rgb(246,246,246)"/><rect x="649.4" y="612.6" width="8.4" height="4.4" fill="rgb(243,243,243)"/><rect x="657.5" y="612.6" width="4.4" height="4.4" fill="rgb(240,240,240)"/><rect x="661.5" y="612.6" width="4.4" height="4.4" fill="rgb(237,237,237)"/><rect x="665.5" y="612.6" width="4.4" height="4.4" fill="rgb(234,234,234)"/><rect x="669.6" y="612.6" width="36.6" height="4.4" fill="rgb(231,231,231)"/><rect x="705.8" y="612.6" width="4.4" height="4.4" fill="rgb(234,234,234)"/><rect x="709.9" y="612.6" width="4.4" height="4.4" fill="rgb(237,237,237)"/><rect x="713.9" y="612.6" width="4.4" height="4.4" fill="rgb(240,240,240)"/><rect x="717.9" y="612.6" width="4.4" height="4.4" fill="rgb(243,243,243)"/><rect x="722.0" y="612.6" width="8.4" height="4.4" fill="rgb(246,246,246)"/><rect x="730.0" y="612.6" width="12.4" height="4.4" fill="rgb(249,249,249)"/><rect x="742.1" y="612.6" width="32.2" height="4.4" fill="rgb(252,252,252)"/><rect x="625.6" y="608.6" width="4.0" height="4.4" fill="rgb(252,252,252)"/><rect x="629.3" y="608.6" width="20.5" height="4.4" fill="rgb(249,249,249)"/><rect x="649.4" y="608.6" width="8.4" height="4.4" fill="rgb(246,246,246)"/><rect x="657.5" y="608.6" width="8.4" height="4.4" fill="rgb(243,243,243)"/><rect x="665.5" y="608.6" width="44.7" height="4.4" fill="rgb(240,240,240)"/><rect x="709.9" y="608.6" width="4.4" height="4.4" fill="rgb(243,243,243)"/><rect x="713.9" y="608.6" width="8.4" height="4.4" fill="rgb(246,246,246)"/><rect x="722.0" y="608.6" width="16.5" height="4.4" fill="rgb(249,249,249)"/><rect x="738.1" y="608.6" width="36.2" height="4.4" fill="rgb(252,252,252)"/><rect x="625.6" y="604.6" width="12.0" height="4.4" fill="rgb(252,252,252)"/><rect x="637.3" y="604.6" width="20.5" height="4.4" fill="rgb(249,249,249)"/><rect x="657.5" y="604.6" width="12.4" height="4.4" fill="rgb(246,246,246)"/><rect x="669.6" y="604.6" width="36.6" height="4.4" fill="rgb(243,243,243)"/><rect x="705.8" y="604.6" width="8.4" height="4.4" fill="rgb(246,246,246)"/><rect x="713.9" y="604.6" width="20.5" height="4.4" fill="rgb(249,249,249)"/><rect x="734.1" y="604.6" width="40.2" height="4.4" fill="rgb(252,252,252)"/><rect x="625.6" y="600.6" width="20.1" height="4.4" fill="rgb(252,252,252)"/><rect x="645.4" y="600.6" width="24.5" height="4.4" fill="rgb(249,249,249)"/><rect x="669.6" y="600.6" width="36.6" height="4.4" fill="rgb(246,246,246)"/><rect x="705.8" y="600.6" width="20.5" height="4.4" fill="rgb(249,249,249)"/><rect x="726.0" y="600.6" width="48.3" height="4.4" fill="rgb(252,252,252)"/><rect x="625.6" y="596.5" width="28.2" height="4.4" fill="rgb(252,252,252)"/><rect x="653.5" y="596.5" width="64.8" height="4.4" fill="rgb(249,249,249)"/><rect x="717.9" y="596.5" width="56.4" height="4.4" fill="rgb(252,252,252)"/><rect x="625.6" y="592.5" width="40.2" height="4.4" fill="rgb(252,252,252)"/><rect x="665.5" y="592.5" width="44.7" height="4.4" fill="rgb(249,249,249)"/><rect x="709.9" y="592.5" width="64.4" height="4.4" fill="rgb(252,252,252)"/><rect x="625.6" y="588.5" width="148.7" height="4.4" fill="rgb(252,252,252)"/><rect x="625.6" y="584.4" width="148.7" height="4.4" fill="rgb(252,252,252)"/><rect x="625.6" y="580.4" width="148.7" height="4.4" fill="rgb(252,252,252)"/><rect x="625.6" y="576.4" width="148.7" height="4.4" fill="rgb(252,252,252)"/><rect x="625.6" y="572.3" width="148.7" height="4.4" fill="rgb(252,252,252)"/><rect x="625.6" y="568.3" width="148.7" height="4.4" fill="rgb(252,252,252)"/><rect x="625.6" y="564.3" width="148.7" height="4.4" fill="rgb(252,252,252)"/><rect x="625.6" y="560.3" width="148.7" height="4.4" fill="rgb(252,252,252)"/><rect x="625.6" y="556.2" width="148.7" height="4.4" fill="rgb(252,252,252)"/><rect x="625.6" y="552.2" width="148.7" height="4.4" fill="rgb(252,252,252)"/><rect x="625.6" y="548.2" width="148.7" height="4.4" fill="rgb(252,252,252)"/><rect x="625.6" y="544.1" width="148.7" height="4.4" fill="rgb(252,252,252)"/><rect x="625.6" y="540.1" width="148.7" height="4.4" fill="rgb(252,252,252)"/><rect x="625.6" y="536.1" width="148.7" height="4.4" fill="rgb(252,252,252)"/><rect x="625.6" y="532.4" width="148.7" height="4.0" fill="rgb(252,252,252)"/></g>
</g>
<rect x="625.65" y="532.45" width="148.30" height="148.30" fill="none" stroke="#222" stroke-width="1.1"/>
<rect x="651.44" y="558.24" width="96.72" height="96.72" fill="none" stroke="rgb(255,0,0)" stroke-width="1.3"/>
<path d="M662.72,606.60H692.55M707.05,606.60H736.88M699.80,569.52V599.35M699.80,613.85V643.68" stroke="rgb(255,0,0)" stroke-width="1.3"/>
<g clip-path="url(#pc3)"><ellipse cx="690.61" cy="666.24" rx="55.61" ry="45.62" fill="none" stroke="rgb(240,200,0)" stroke-width="1.4"/></g>
<text x="699.80" y="548.33" font-size="10" font-family="'Liberation Sans', sans-serif" fill="rgb(255,0,0)" text-anchor="middle" textLength="7.48" lengthAdjust="spacingAndGlyphs" xml:space="preserve">N</text>
<text x="636.13" y="610.30" font-size="10" font-family="'Liberation Sans', sans-serif" fill="rgb(255,0,0)" text-anchor="middle" textLength="6.32" lengthAdjust="spacingAndGlyphs" xml:space="preserve">E</text>
<line x1="635.32" y1="680.75" x2="635.32" y2="684.25" stroke="#222" stroke-width="0.9"/>
<text x="635.32" y="696.20" font-size="10" font-family="'Liberation Sans', sans-serif" fill="#000" text-anchor="middle" textLength="14.74" lengthAdjust="spacingAndGlyphs" xml:space="preserve">−4</text>
<line x1="622.15" y1="671.08" x2="625.65" y2="671.08" stroke="#222" stroke-width="0.9"/>
<text x="618.05" y="675.08" font-size="10" font-family="'Liberation Sans', sans-serif" fill="#000" text-anchor="end" textLength="14.74" lengthAdjust="spacingAndGlyphs" xml:space="preserve">−4</text>
<line x1="667.56" y1="680.75" x2="667.56" y2="684.25" stroke="#222" stroke-width="0.9"/>
<text x="667.56" y="696.20" font-size="10" font-family="'Liberation Sans', sans-serif" fill="#000" text-anchor="middle" textLength="14.74" lengthAdjust="spacingAndGlyphs" xml:space="preserve">−2</text>
<line x1="622.15" y1="638.84" x2="625.65" y2="638.84" stroke="#222" stroke-width="0.9"/>
<text x="618.05" y="642.84" font-size="10" font-family="'Liberation Sans', sans-serif" fill="#000" text-anchor="end" textLength="14.74" lengthAdjust="spacingAndGlyphs" xml:space="preserve">−2</text>
<line x1="699.80" y1="680.75" x2="699.80" y2="684.25" stroke="#222" stroke-width="0.9"/>
<text x="699.80" y="696.20" font-size="10" font-family="'Liberation Sans', sans-serif" fill="#000" text-anchor="middle" textLength="6.36" lengthAdjust="spacingAndGlyphs" xml:space="preserve">0</text>
<line x1="622.15" y1="606.60" x2="625.65" y2="606.60" stroke="#222" stroke-width="0.9"/>
<text x="618.05" y="610.60" font-size="10" font-family="'Liberation Sans', sans-serif" fill="#000" text-anchor="end" textLength="6.36" lengthAdjust="spacingAndGlyphs" xml:space="preserve">0</text>
<line x1="732.04" y1="680.75" x2="732.04" y2="684.25" stroke="#222" stroke-width="0.9"/>
<text x="732.04" y="696.20" font-size="10" font-family="'Liberation Sans', sans-serif" fill="#000" text-anchor="middle" textLength="6.36" lengthAdjust="spacingAndGlyphs" xml:space="preserve">2</text>
<line x1="622.15" y1="574.36" x2="625.65" y2="574.36" stroke="#222" stroke-width="0.9"/>
<text x="618.05" y="578.36" font-size="10" font-family="'Liberation Sans', sans-serif" fill="#000" text-anchor="end" textLength="6.36" lengthAdjust="spacingAndGlyphs" xml:space="preserve">2</text>
<line x1="764.28" y1="680.75" x2="764.28" y2="684.25" stroke="#222" stroke-width="0.9"/>
<text x="764.28" y="696.20" font-size="10" font-family="'Liberation Sans', sans-serif" fill="#000" text-anchor="middle" textLength="6.36" lengthAdjust="spacingAndGlyphs" xml:space="preserve">4</text>
<line x1="622.15" y1="542.12" x2="625.65" y2="542.12" stroke="#222" stroke-width="0.9"/>
<text x="618.05" y="546.12" font-size="10" font-family="'Liberation Sans', sans-serif" fill="#000" text-anchor="end" textLength="6.36" lengthAdjust="spacingAndGlyphs" xml:space="preserve">4</text>
<text x="885.20" y="525.80" font-size="12.8" font-family="'Liberation Sans', sans-serif" fill="#000" text-anchor="middle" textLength="99.26" lengthAdjust="spacingAndGlyphs" xml:space="preserve">DECaLS(24.0) z</text>
<g clip-path="url(#pc4)">
<g shape-rendering="crispEdges"><rect x="811.0" y="677.1" width="24.1" height="4.0" fill="rgb(141,141,141)"/><rect x="834.8" y="677.1" width="8.4" height="4.0" fill="rgb(150,150,150)"/><rect x="842.9" y="677.1" width="4.4" height="4.0" fill="rgb(210,210,210)"/><rect x="846.9" y="677.1" width="56.8" height="4.0" fill="rgb(0,0,0)"/><rect x="903.3" y="677.1" width="4.4" height="4.0" fill="rgb(129,129,129)"/><rect x="907.4" y="677.1" width="4.4" height="4.0" fill="rgb(141,141,141)"/><rect x="911.4" y="677.1" width="4.4" height="4.0" fill="rgb(120,120,120)"/><rect x="915.4" y="677.1" width="44.3" height="4.0" fill="rgb(141,141,141)"/><rect x="811.0" y="673.1" width="24.1" height="4.4" fill="rgb(141,141,141)"/><rect x="834.8" y="673.1" width="4.4" height="4.4" fill="rgb(150,150,150)"/><rect x="838.9" y="673.1" width="4.4" height="4.4" fill="rgb(120,120,120)"/><rect x="842.9" y="673.1" width="4.4" height="4.4" fill="rgb(255,255,255)"/><rect x="846.9" y="673.1" width="56.8" height="4.4" fill="rgb(0,0,0)"/><rect x="903.3" y="673.1" width="4.4" height="4.4" fill="rgb(210,210,210)"/><rect x="907.4" y="673.1" width="4.4" height="4.4" fill="rgb(159,159,159)"/><rect x="911.4" y="673.1" width="4.4" height="4.4" fill="rgb(120,120,120)"/><rect x="915.4" y="673.1" width="44.3" height="4.4" fill="rgb(141,141,141)"/><rect x="811.0" y="669.1" width="24.1" height="4.4" fill="rgb(141,141,141)"/><rect x="834.8" y="669.1" width="4.4" height="4.4" fill="rgb(90,90,90)"/><rect x="838.9" y="669.1" width="4.4" height="4.4" fill="rgb(51,51,51)"/><rect x="842.9" y="669.1" width="4.4" height="4.4" fill="rgb(129,129,129)"/><rect x="846.9" y="669.1" width="56.8" height="4.4" fill="rgb(0,0,0)"/><rect x="903.3" y="669.1" width="4.4" height="4.4" fill="rgb(210,210,210)"/><rect x="907.4" y="669.1" width="4.4" height="4.4" fill="rgb(150,150,150)"/><rect x="911.4" y="669.1" width="4.4" height="4.4" fill="rgb(120,120,120)"/><rect x="915.4" y="669.1" width="44.3" height="4.4" fill="rgb(141,141,141)"/><rect x="811.0" y="665.0" width="24.1" height="4.4" fill="rgb(141,141,141)"/><rect x="834.8" y="665.0" width="4.4" height="4.4" fill="rgb(51,51,51)"/><rect x="838.9" y="665.0" width="4.4" height="4.4" fill="rgb(90,90,90)"/><rect x="842.9" y="665.0" width="4.4" height="4.4" fill="rgb(255,255,255)"/><rect x="846.9" y="665.0" width="56.8" height="4.4" fill="rgb(0,0,0)"/><rect x="903.3" y="665.0" width="4.4" height="4.4" fill="rgb(255,255,255)"/><rect x="907.4" y="665.0" width="52.3" height="4.4" fill="rgb(141,141,141)"/><rect x="811.0" y="661.0" width="16.1" height="4.4" fill="rgb(141,141,141)"/><rect x="826.8" y="661.0" width="12.4" height="4.4" fill="rgb(138,138,138)"/><rect x="838.9" y="661.0" width="4.4" height="4.4" fill="rgb(51,51,51)"/><rect x="842.9" y="661.0" width="4.4" height="4.4" fill="rgb(90,90,90)"/><rect x="846.9" y="661.0" width="4.4" height="4.4" fill="rgb(210,210,210)"/><rect x="850.9" y="661.0" width="48.7" height="4.4" fill="rgb(0,0,0)"/><rect x="899.3" y="661.0" width="4.4" height="4.4" fill="rgb(234,234,234)"/><rect x="903.3" y="661.0" width="4.4" height="4.4" fill="rgb(210,210,210)"/><rect x="907.4" y="661.0" width="8.4" height="4.4" fill="rgb(141,141,141)"/><rect x="915.4" y="661.0" width="12.4" height="4.4" fill="rgb(138,138,138)"/><rect x="927.5" y="661.0" width="32.2" height="4.4" fill="rgb(141,141,141)"/><rect x="811.0" y="657.0" width="4.0" height="4.4" fill="rgb(141,141,141)"/><rect x="814.7" y="657.0" width="24.5" height="4.4" fill="rgb(138,138,138)"/><rect x="838.9" y="657.0" width="4.4" height="4.4" fill="rgb(159,159,159)"/><rect x="842.9" y="657.0" width="4.4" height="4.4" fill="rgb(150,150,150)"/><rect x="846.9" y="657.0" width="4.4" height="4.4" fill="rgb(255,255,255)"/><rect x="850.9" y="657.0" width="48.7" height="4.4" fill="rgb(0,0,0)"/><rect x="899.3" y="657.0" width="4.4" height="4.4" fill="rgb(255,255,255)"/><rect x="903.3" y="657.0" width="4.4" height="4.4" fill="rgb(90,90,90)"/><rect x="907.4" y="657.0" width="4.4" height="4.4" fill="rgb(150,150,150)"/><rect x="911.4" y="657.0" width="28.6" height="4.4" fill="rgb(138,138,138)"/><rect x="939.6" y="657.0" width="20.1" height="4.4" fill="rgb(141,141,141)"/><rect x="811.0" y="652.9" width="20.1" height="4.4" fill="rgb(138,138,138)"/><rect x="830.8" y="652.9" width="8.4" height="4.4" fill="rgb(135,135,135)"/><rect x="838.9" y="652.9" width="4.4" height="4.4" fill="rgb(159,159,159)"/><rect x="842.9" y="652.9" width="4.4" height="4.4" fill="rgb(111,111,111)"/><rect x="846.9" y="652.9" width="4.4" height="4.4" fill="rgb(129,129,129)"/><rect x="850.9" y="652.9" width="4.4" height="4.4" fill="rgb(90,90,90)"/><rect x="855.0" y="652.9" width="40.7" height="4.4" fill="rgb(0,0,0)"/><rect x="895.3" y="652.9" width="8.4" height="4.4" fill="rgb(255,255,255)"/><rect x="903.3" y="652.9" width="4.4" height="4.4" fill="rgb(159,159,159)"/><rect x="907.4" y="652.9" width="4.4" height="4.4" fill="rgb(189,189,189)"/><rect x="911.4" y="652.9" width="12.4" height="4.4" fill="rgb(135,135,135)"/><rect x="923.5" y="652.9" width="24.5" height="4.4" fill="rgb(138,138,138)"/><rect x="947.7" y="652.9" width="12.0" height="4.4" fill="rgb(141,141,141)"/><rect x="811.0" y="648.9" width="12.0" height="4.4" fill="rgb(138,138,138)"/><rect x="822.7" y="648.9" width="12.4" height="4.4" fill="rgb(135,135,135)"/><rect x="834.8" y="648.9" width="8.4" height="4.4" fill="rgb(132,132,132)"/><rect x="842.9" y="648.9" width="4.4" height="4.4" fill="rgb(141,141,141)"/><rect x="846.9" y="648.9" width="4.4" height="4.4" fill="rgb(159,159,159)"/><rect x="850.9" y="648.9" width="8.4" height="4.4" fill="rgb(255,255,255)"/><rect x="859.0" y="648.9" width="32.6" height="4.4" fill="rgb(0,0,0)"/><rect x="891.2" y="648.9" width="4.4" height="4.4" fill="rgb(129,129,129)"/><rect x="895.3" y="648.9" width="8.4" height="4.4" fill="rgb(90,90,90)"/><rect x="903.3" y="648.9" width="4.4" height="4.4" fill="rgb(111,111,111)"/><rect x="907.4" y="648.9" width="4.4" height="4.4" fill="rgb(129,129,129)"/><rect x="911.4" y="648.9" width="8.4" height="4.4" fill="rgb(132,132,132)"/><rect x="919.5" y="648.9" width="12.4" height="4.4" fill="rgb(135,135,135)"/><rect x="931.5" y="648.9" width="20.5" height="4.4" fill="rgb(138,138,138)"/><rect x="951.7" y="648.9" width="8.0" height="4.4" fill="rgb(141,141,141)"/><rect x="811.0" y="644.9" width="8.0" height="4.4" fill="rgb(138,138,138)"/><rect x="818.7" y="644.9" width="8.4" height="4.4" fill="rgb(135,135,135)"/><rect x="826.8" y="644.9" width="8.4" height="4.4" fill="rgb(132,132,132)"/><rect x="834.8" y="644.9" width="4.4" height="4.4" fill="rgb(129,129,129)"/><rect x="838.9" y="644.9" width="4.4" height="4.4" fill="rgb(126,126,126)"/><rect x="842.9" y="644.9" width="4.4" height="4.4" fill="rgb(123,123,123)"/><rect x="846.9" y="644.9" width="4.4" height="4.4" fill="rgb(90,90,90)"/><rect x="850.9" y="644.9" width="4.4" height="4.4" fill="rgb(159,159,159)"/><rect x="855.0" y="644.9" width="4.4" height="4.4" fill="rgb(210,210,210)"/><rect x="859.0" y="644.9" width="8.4" height="4.4" fill="rgb(255,255,255)"/><rect x="867.1" y="644.9" width="20.5" height="4.4" fill="rgb(0,0,0)"/><rect x="887.2" y="644.9" width="4.4" height="4.4" fill="rgb(90,90,90)"/><rect x="891.2" y="644.9" width="4.4" height="4.4" fill="rgb(255,255,255)"/><rect x="895.3" y="644.9" width="4.4" height="4.4" fill="rgb(51,51,51)"/><rect x="899.3" y="644.9" width="8.4" height="4.4" fill="rgb(141,141,141)"/><rect x="907.4" y="644.9" width="4.4" height="4.4" fill="rgb(123,123,123)"/><rect x="911.4" y="644.9" width="4.4" height="4.4" fill="rgb(126,126,126)"/><rect x="915.4" y="644.9" width="4.4" height="4.4" fill="rgb(129,129,129)"/><rect x="919.5" y="644.9" width="8.4" height="4.4" fill="rgb(132,132,132)"/><rect x="927.5" y="644.9" width="8.4" height="4.4" fill="rgb(135,135,135)"/><rect x="935.6" y="644.9" width="20.5" height="4.4" fill="rgb(138,138,138)"/><rect x="955.7" y="644.9" width="4.0" height="4.4" fill="rgb(141,141,141)"/><rect x="811.0" y="640.9" width="8.0" height="4.4" fill="rgb(138,138,138)"/><rect x="818.7" y="640.9" width="8.4" height="4.4" fill="rgb(135,135,135)"/><rect x="826.8" y="640.9" width="4.4" height="4.4" fill="rgb(132,132,132)"/><rect x="830.8" y="640.9" width="4.4" height="4.4" fill="rgb(129,129,129)"/><rect x="834.8" y="640.9" width="4.4" height="4.4" fill="rgb(126,126,126)"/><rect x="838.9" y="640.9" width="4.4" height="4.4" fill="rgb(123,123,123)"/><rect x="842.9" y="640.9" width="4.4" height="4.4" fill="rgb(120,120,120)"/><rect x="846.9" y="640.9" width="4.4" height="4.4" fill="rgb(51,51,51)"/><rect x="850.9" y="640.9" width="4.4" height="4.4" fill="rgb(150,150,150)"/><rect x="855.0" y="640.9" width="8.4" height="4.4" fill="rgb(111,111,111)"/><rect x="863.0" y="640.9" width="4.4" height="4.4" fill="rgb(210,210,210)"/><rect x="867.1" y="640.9" width="4.4" height="4.4" fill="rgb(255,255,255)"/><rect x="871.1" y="640.9" width="4.4" height="4.4" fill="rgb(129,129,129)"/><rect x="875.1" y="640.9" width="4.4" height="4.4" fill="rgb(255,255,255)"/><rect x="879.2" y="640.9" width="4.4" height="4.4" fill="rgb(249,249,249)"/><rect x="883.2" y="640.9" width="4.4" height="4.4" fill="rgb(90,90,90)"/><rect x="887.2" y="640.9" width="4.4" height="4.4" fill="rgb(159,159,159)"/><rect x="891.2" y="640.9" width="4.4" height="4.4" fill="rgb(189,189,189)"/><rect x="895.3" y="640.9" width="4.4" height="4.4" fill="rgb(90,90,90)"/><rect x="899.3" y="640.9" width="4.4" height="4.4" fill="rgb(159,159,159)"/><rect x="903.3" y="640.9" width="4.4" height="4.4" fill="rgb(117,117,117)"/><rect x="907.4" y="640.9" width="4.4" height="4.4" fill="rgb(120,120,120)"/><rect x="911.4" y="640.9" width="4.4" height="4.4" fill="rgb(123,123,123)"/><rect x="915.4" y="640.9" width="4.4" height="4.4" fill="rgb(126,126,126)"/><rect x="919.5" y="640.9" width="4.4" height="4.4" fill="rgb(129,129,129)"/><rect x="923.5" y="640.9" width="4.4" height="4.4" fill="rgb(132,132,132)"/><rect x="927.5" y="640.9" width="8.4" height="4.4" fill="rgb(135,135,135)"/><rect x="935.6" y="640.9" width="24.1" height="4.4" fill="rgb(138,138,138)"/><rect x="811.0" y="636.8" width="8.0" height="4.4" fill="rgb(138,138,138)"/><rect x="818.7" y="636.8" width="8.4" height="4.4" fill="rgb(135,135,135)"/><rect x="826.8" y="636.8" width="4.4" height="4.4" fill="rgb(132,132,132)"/><rect x="830.8" y="636.8" width="4.4" height="4.4" fill="rgb(129,129,129)"/><rect x="834.8" y="636.8" width="4.4" height="4.4" fill="rgb(126,126,126)"/><rect x="838.9" y="636.8" width="4.4" height="4.4" fill="rgb(123,123,123)"/><rect x="842.9" y="636.8" width="4.4" height="4.4" fill="rgb(120,120,120)"/><rect x="846.9" y="636.8" width="4.4" height="4.4" fill="rgb(117,117,117)"/><rect x="850.9" y="636.8" width="4.4" height="4.4" fill="rgb(114,114,114)"/><rect x="855.0" y="636.8" width="4.4" height="4.4" fill="rgb(189,189,189)"/><rect x="859.0" y="636.8" width="4.4" height="4.4" fill="rgb(51,51,51)"/><rect x="863.0" y="636.8" width="4.4" height="4.4" fill="rgb(111,111,111)"/><rect x="867.1" y="636.8" width="4.4" height="4.4" fill="rgb(90,90,90)"/><rect x="871.1" y="636.8" width="4.4" height="4.4" fill="rgb(120,120,120)"/><rect x="875.1" y="636.8" width="4.4" height="4.4" fill="rgb(141,141,141)"/><rect x="879.2" y="636.8" width="4.4" height="4.4" fill="rgb(90,90,90)"/><rect x="883.2" y="636.8" width="8.4" height="4.4" fill="rgb(51,51,51)"/><rect x="891.2" y="636.8" width="8.4" height="4.4" fill="rgb(150,150,150)"/><rect x="899.3" y="636.8" width="4.4" height="4.4" fill="rgb(114,114,114)"/><rect x="903.3" y="636.8" width="4.4" height="4.4" fill="rgb(117,117,117)"/><rect x="907.4" y="636.8" width="4.4" height="4.4" fill="rgb(120,120,120)"/><rect x="911.4" y="636.8" width="4.4" height="4.4" fill="rgb(123,123,123)"/><rect x="915.4" y="636.8" width="4.4" height="4.4" fill="rgb(126,126,126)"/><rect x="919.5" y="636.8" width="4.4" height="4.4" fill="rgb(129,129,129)"/><rect x="923.5" y="636.8" width="4.4" height="4.4" fill="rgb(132,132,132)"/><rect x="927.5" y="636.8" width="8.4" height="4.4" fill="rgb(135,135,135)"/><rect x="935.6" y="636.8" width="24.1" height="4.4" fill="rgb(138,138,138)"/><rect x="811.0" y="632.8" width="8.0" height="4.4" fill="rgb(138,138,138)"/><rect x="818.7" y="632.8" width="8.4" height="4.4" fill="rgb(135,135,135)"/><rect x="826.8" y="632.8" width="8.4" height="4.4" fill="rgb(132,132,132)"/><rect x="834.8" y="632.8" width="4.4" height="4.4" fill="rgb(129,129,129)"/><rect x="838.9" y="632.8" width="4.4" height="4.4" fill="rgb(126,126,126)"/><rect x="842.9" y="632.8" width="4.4" height="4.4" fill="rgb(123,123,123)"/><rect x="846.9" y="632.8" width="4.4" height="4.4" fill="rgb(120,120,120)"/><rect x="850.9" y="632.8" width="4.4" height="4.4" fill="rgb(117,117,117)"/><rect x="855.0" y="632.8" width="4.4" height="4.4" fill="rgb(114,114,114)"/><rect x="859.0" y="632.8" width="4.4" height="4.4" fill="rgb(120,120,120)"/><rect x="863.0" y="632.8" width="4.4" height="4.4" fill="rgb(141,141,141)"/><rect x="867.1" y="632.8" width="4.4" height="4.4" fill="rgb(150,150,150)"/><rect x="871.1" y="632.8" width="4.4" height="4.4" fill="rgb(141,141,141)"/><rect x="875.1" y="632.8" width="4.4" height="4.4" fill="rgb(120,120,120)"/><rect x="879.2" y="632.8" width="8.4" height="4.4" fill="rgb(111,111,111)"/><rect x="887.2" y="632.8" width="4.4" height="4.4" fill="rgb(90,90,90)"/><rect x="891.2" y="632.8" width="4.4" height="4.4" fill="rgb(111,111,111)"/><rect x="895.3" y="632.8" width="4.4" height="4.4" fill="rgb(114,114,114)"/><rect x="899.3" y="632.8" width="4.4" height="4.4" fill="rgb(117,117,117)"/><rect x="903.3" y="632.8" width="4.4" height="4.4" fill="rgb(120,120,120)"/><rect x="907.4" y="632.8" width="4.4" height="4.4" fill="rgb(123,123,123)"/><rect x="911.4" y="632.8" width="4.4" height="4.4" fill="rgb(126,126,126)"/><rect x="915.4" y="632.8" width="4.4" height="4.4" fill="rgb(129,129,129)"/><rect x="919.5" y="632.8" width="8.4" height="4.4" fill="rgb(132,132,132)"/><rect x="927.5" y="632.8" width="8.4" height="4.4" fill="rgb(135,135,135)"/><rect x="935.6" y="632.8" width="20.5" height="4.4" fill="rgb(138,138,138)"/><rect x="955.7" y="632.8" width="4.0" height="4.4" fill="rgb(141,141,141)"/><rect x="811.0" y="628.8" width="12.0" height="4.4" fill="rgb(138,138,138)"/><rect x="822.7" y="628.8" width="8.4" height="4.4" fill="rgb(135,135,135)"/><rect x="830.8" y="628.8" width="8.4" height="4.4" fill="rgb(132,132,132)"/><rect x="838.9" y="628.8" width="8.4" height="4.4" fill="rgb(129,129,129)"/><rect x="846.9" y="628.8" width="4.4" height="4.4" fill="rgb(126,126,126)"/><rect x="850.9" y="628.8" width="4.4" height="4.4" fill="rgb(123,123,123)"/><rect x="855.0" y="628.8" width="8.4" height="4.4" fill="rgb(120,120,120)"/><rect x="863.0" y="628.8" width="28.6" height="4.4" fill="rgb(117,117,117)"/><rect x="891.2" y="628.8" width="8.4" height="4.4" fill="rgb(120,120,120)"/><rect x="899.3" y="628.8" width="4.4" height="4.4" fill="rgb(123,123,123)"/><rect x="903.3" y="628.8" width="4.4" height="4.4" fill="rgb(126,126,126)"/><rect x="907.4" y="628.8" width="8.4" height="4.4" fill="rgb(129,129,129)"/><rect x="915.4" y="628.8" width="8.4" height="4.4" fill="rgb(132,132,132)"/><rect x="923.5" y="628.8" width="8.4" height="4.4" fill="rgb(135,135,135)"/><rect x="931.5" y="628.8" width="20.5" height="4.4" fill="rgb(138,138,138)"/><rect x="951.7" y="628.8" width="8.0" height="4.4" fill="rgb(141,141,141)"/><rect x="811.0" y="624.7" width="20.1" height="4.4" fill="rgb(138,138,138)"/><rect x="830.8" y="624.7" width="12.4" height="4.4" fill="rgb(135,135,135)"/><rect x="842.9" y="624.7" width="8.4" height="4.4" fill="rgb(132,132,132)"/><rect x="850.9" y="624.7" width="12.4" height="4.4" fill="rgb(129,129,129)"/><rect x="863.0" y="624.7" width="28.6" height="4.4" fill="rgb(126,126,126)"/><rect x="891.2" y="624.7" width="12.4" height="4.4" fill="rgb(129,129,129)"/><rect x="903.3" y="624.7" width="8.4" height="4.4" fill="rgb(132,132,132)"/><rect x="911.4" y="624.7" width="12.4" height="4.4" fill="rgb(135,135,135)"/><rect x="923.5" y="624.7" width="24.5" height="4.4" fill="rgb(138,138,138)"/><rect x="947.7" y="624.7" width="12.0" height="4.4" fill="rgb(141,141,141)"/><rect x="811.0" y="620.7" width="4.0" height="4.4" fill="rgb(141,141,141)"/><rect x="814.7" y="620.7" width="28.6" height="4.4" fill="rgb(138,138,138)"/><rect x="842.9" y="620.7" width="20.5" height="4.4" fill="rgb(135,135,135)"/><rect x="863.0" y="620.7" width="28.6" height="4.4" fill="rgb(132,132,132)"/><rect x="891.2" y="620.7" width="20.5" height="4.4" fill="rgb(135,135,135)"/><rect x="911.4" y="620.7" width="28.6" height="4.4" fill="rgb(138,138,138)"/><rect x="939.6" y="620.7" width="20.1" height="4.4" fill="rgb(141,141,141)"/><rect x="811.0" y="616.7" width="12.0" height="4.4" fill="rgb(141,141,141)"/><rect x="822.7" y="616.7" width="109.2" height="4.4" fill="rgb(138,138,138)"/><rect x="931.5" y="616.7" width="28.2" height="4.4" fill="rgb(141,141,141)"/><rect x="811.0" y="612.6" width="32.2" height="4.4" fill="rgb(141,141,141)"/><rect x="842.9" y="612.6" width="68.9" height="4.4" fill="rgb(138,138,138)"/><rect x="911.4" y="612.6" width="48.3" height="4.4" fill="rgb(141,141,141)"/><rect x="811.0" y="608.6" width="148.7" height="4.4" fill="rgb(141,141,141)"/><rect x="811.0" y="604.6" width="148.7" height="4.4" fill="rgb(141,141,141)"/><rect x="811.0" y="600.6" width="148.7" height="4.4" fill="rgb(141,141,141)"/><rect x="811.0" y="596.5" width="148.7" height="4.4" fill="rgb(141,141,141)"/><rect x="811.0" y="592.5" width="148.7" height="4.4" fill="rgb(141,141,141)"/><rect x="811.0" y="588.5" width="148.7" height="4.4" fill="rgb(141,141,141)"/><rect x="811.0" y="584.4" width="148.7" height="4.4" fill="rgb(141,141,141)"/><rect x="811.0" y="580.4" width="148.7" height="4.4" fill="rgb(141,141,141)"/><rect x="811.0" y="576.4" width="148.7" height="4.4" fill="rgb(141,141,141)"/><rect x="811.0" y="572.3" width="148.7" height="4.4" fill="rgb(141,141,141)"/><rect x="811.0" y="568.3" width="148.7" height="4.4" fill="rgb(141,141,141)"/><rect x="811.0" y="564.3" width="148.7" height="4.4" fill="rgb(141,141,141)"/><rect x="811.0" y="560.3" width="148.7" height="4.4" fill="rgb(141,141,141)"/><rect x="811.0" y="556.2" width="148.7" height="4.4" fill="rgb(141,141,141)"/><rect x="811.0" y="552.2" width="148.7" height="4.4" fill="rgb(141,141,141)"/><rect x="811.0" y="548.2" width="148.7" height="4.4" fill="rgb(141,141,141)"/><rect x="811.0" y="544.1" width="148.7" height="4.4" fill="rgb(141,141,141)"/><rect x="811.0" y="540.1" width="148.7" height="4.4" fill="rgb(141,141,141)"/><rect x="811.0" y="536.1" width="148.7" height="4.4" fill="rgb(141,141,141)"/><rect x="811.0" y="532.4" width="148.7" height="4.0" fill="rgb(141,141,141)"/></g>
</g>
<rect x="811.05" y="532.45" width="148.30" height="148.30" fill="none" stroke="#222" stroke-width="1.1"/>
<rect x="836.84" y="558.24" width="96.72" height="96.72" fill="none" stroke="rgb(255,0,0)" stroke-width="1.3"/>
<path d="M848.12,606.60H877.95M892.45,606.60H922.28M885.20,569.52V599.35M885.20,613.85V643.68" stroke="rgb(255,0,0)" stroke-width="1.3"/>
<circle cx="885.20" cy="606.60" r="47.23" fill="none" stroke="rgb(240,200,0)" stroke-width="1.4"/>
<g clip-path="url(#pc4)"><ellipse cx="874.24" cy="662.21" rx="49.49" ry="34.01" fill="none" stroke="#eee" stroke-width="1.1" stroke-dasharray="4,2.5"/></g>
<text x="885.20" y="548.33" font-size="10" font-family="'Liberation Sans', sans-serif" fill="rgb(255,0,0)" text-anchor="middle" textLength="7.48" lengthAdjust="spacingAndGlyphs" xml:space="preserve">N</text>
<text x="821.53" y="610.30" font-size="10" font-family="'Liberation Sans', sans-serif" fill="rgb(255,0,0)" text-anchor="middle" textLength="6.32" lengthAdjust="spacingAndGlyphs" xml:space="preserve">E</text>
<line x1="820.72" y1="680.75" x2="820.72" y2="684.25" stroke="#222" stroke-width="0.9"/>
<text x="820.72" y="696.20" font-size="10" font-family="'Liberation Sans', sans-serif" fill="#000" text-anchor="middle" textLength="14.74" lengthAdjust="spacingAndGlyphs" xml:space="preserve">−4</text>
<line x1="807.55" y1="671.08" x2="811.05" y2="671.08" stroke="#222" stroke-width="0.9"/>
<text x="803.45" y="675.08" font-size="10" font-family="'Liberation Sans', sans-serif" fill="#000" text-anchor="end" textLength="14.74" lengthAdjust="spacingAndGlyphs" xml:space="preserve">−4</text>
<line x1="852.96" y1="680.75" x2="852.96" y2="684.25" stroke="#222" stroke-width="0.9"/>
<text x="852.96" y="696.20" font-size="10" font-family="'Liberation Sans', sans-serif" fill="#000" text-anchor="middle" textLength="14.74" lengthAdjust="spacingAndGlyphs" xml:space="preserve">−2</text>
<line x1="807.55" y1="638.84" x2="811.05" y2="638.84" stroke="#222" stroke-width="0.9"/>
<text x="803.45" y="642.84" font-size="10" font-family="'Liberation Sans', sans-serif" fill="#000" text-anchor="end" textLength="14.74" lengthAdjust="spacingAndGlyphs" xml:space="preserve">−2</text>
<line x1="885.20" y1="680.75" x2="885.20" y2="684.25" stroke="#222" stroke-width="0.9"/>
<text x="885.20" y="696.20" font-size="10" font-family="'Liberation Sans', sans-serif" fill="#000" text-anchor="middle" textLength="6.36" lengthAdjust="spacingAndGlyphs" xml:space="preserve">0</text>
<line x1="807.55" y1="606.60" x2="811.05" y2="606.60" stroke="#222" stroke-width="0.9"/>
<text x="803.45" y="610.60" font-size="10" font-family="'Liberation Sans', sans-serif" fill="#000" text-anchor="end" textLength="6.36" lengthAdjust="spacingAndGlyphs" xml:space="preserve">0</text>
<line x1="917.44" y1="680.75" x2="917.44" y2="684.25" stroke="#222" stroke-width="0.9"/>
<text x="917.44" y="696.20" font-size="10" font-family="'Liberation Sans', sans-serif" fill="#000" text-anchor="middle" textLength="6.36" lengthAdjust="spacingAndGlyphs" xml:space="preserve">2</text>
<line x1="807.55" y1="574.36" x2="811.05" y2="574.36" stroke="#222" stroke-width="0.9"/>
<text x="803.45" y="578.36" font-size="10" font-family="'Liberation Sans', sans-serif" fill="#000" text-anchor="end" textLength="6.36" lengthAdjust="spacingAndGlyphs" xml:space="preserve">2</text>
<line x1="949.68" y1="680.75" x2="949.68" y2="684.25" stroke="#222" stroke-width="0.9"/>
<text x="949.68" y="696.20" font-size="10" font-family="'Liberation Sans', sans-serif" fill="#000" text-anchor="middle" textLength="6.36" lengthAdjust="spacingAndGlyphs" xml:space="preserve">4</text>
<line x1="807.55" y1="542.12" x2="811.05" y2="542.12" stroke="#222" stroke-width="0.9"/>
<text x="803.45" y="546.12" font-size="10" font-family="'Liberation Sans', sans-serif" fill="#000" text-anchor="end" textLength="6.36" lengthAdjust="spacingAndGlyphs" xml:space="preserve">4</text>
<text x="143.70" y="706.50" font-size="10.6" font-family="'Liberation Sans', sans-serif" fill="#000" text-anchor="middle" textLength="39.85" lengthAdjust="spacingAndGlyphs" xml:space="preserve">arcsecs</text>
<text x="329.10" y="706.50" font-size="10.6" font-family="'Liberation Sans', sans-serif" fill="#000" text-anchor="middle" textLength="99.73" lengthAdjust="spacingAndGlyphs" xml:space="preserve">s/b: 3.56 +/- 0.159</text>
<text x="515.00" y="706.30" font-size="10.6" font-family="'Liberation Sans', sans-serif" fill="#000" text-anchor="middle" textLength="113.70" lengthAdjust="spacingAndGlyphs" xml:space="preserve">m:17.1 rc:2.9&quot;  s:0.2&quot;</text>
<text x="515.00" y="719.00" font-size="10.6" font-family="'Liberation Sans', sans-serif" fill="#000" text-anchor="middle" textLength="105.08" lengthAdjust="spacingAndGlyphs" xml:space="preserve">EWr: 0, PLAE: 0.021</text>
<text x="699.80" y="706.30" font-size="10.6" font-family="'Liberation Sans', sans-serif" fill="#000" text-anchor="middle" textLength="117.76" lengthAdjust="spacingAndGlyphs" xml:space="preserve">m:14.4  re:2.9&quot;  s:3.4&quot;</text>
<text x="699.80" y="719.00" font-size="10.6" font-family="'Liberation Sans', sans-serif" fill="#000" text-anchor="middle" textLength="105.08" lengthAdjust="spacingAndGlyphs" xml:space="preserve">EWr: 0, PLAE: 0.026</text>
<text x="885.20" y="706.30" font-size="10.6" font-family="'Liberation Sans', sans-serif" fill="#000" text-anchor="middle" textLength="113.70" lengthAdjust="spacingAndGlyphs" xml:space="preserve">m:17.3 rc:2.9&quot;  s:0.2&quot;</text>
<text x="70.50" y="888.20" font-size="13.0" font-family="'Liberation Mono', monospace" fill="#000" stroke="#000" stroke-width="0.2" xml:space="preserve">No matching targets in catalog.</text>
<text x="70.50" y="902.60" font-size="13.0" font-family="'Liberation Mono', monospace" fill="#000" stroke="#000" stroke-width="0.2" xml:space="preserve">Row intentionally blank.</text></svg></body></html>
